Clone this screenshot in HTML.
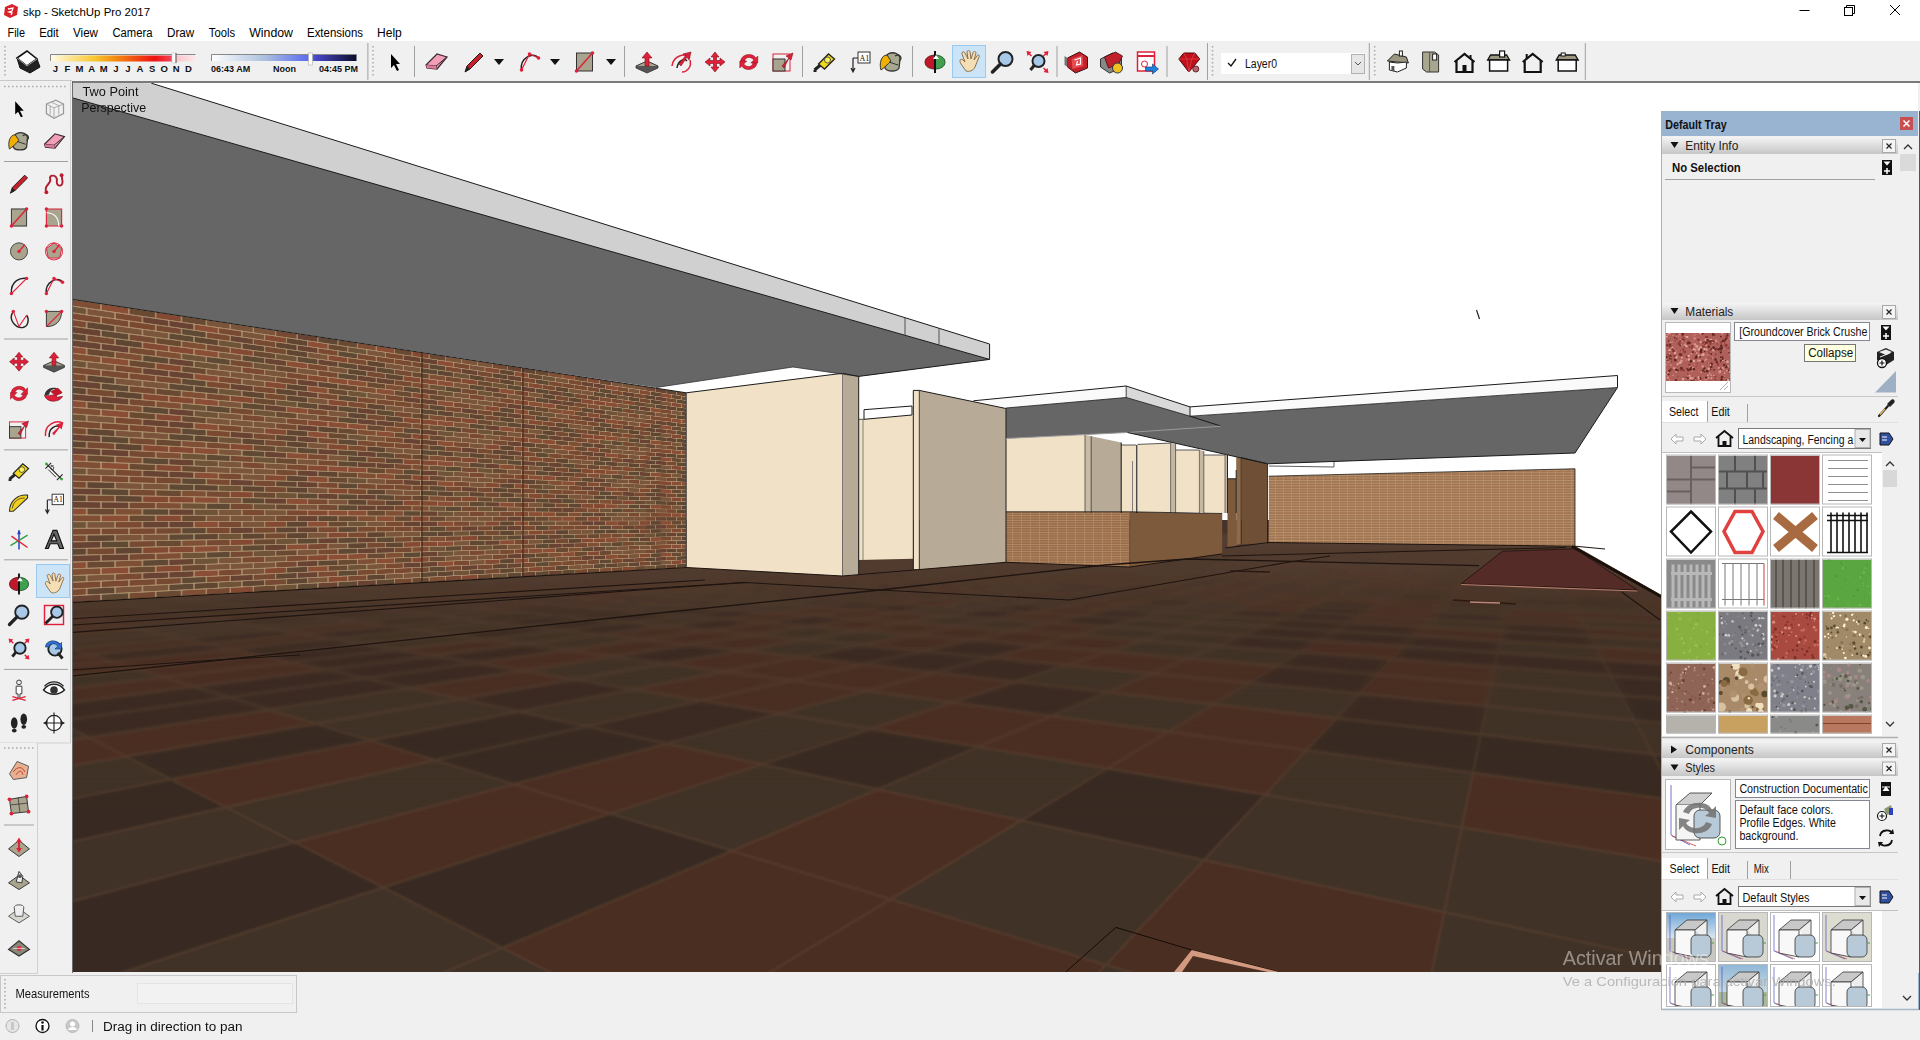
<!DOCTYPE html><html><head><meta charset="utf-8"><style>
*{margin:0;padding:0;box-sizing:border-box}
html,body{width:1920px;height:1040px;overflow:hidden;background:#f0f0f0;font-family:"Liberation Sans", sans-serif;color:#000}
.abs{position:absolute}
.t{position:absolute;white-space:nowrap;font-size:12px;line-height:1}
</style></head><body><svg class="abs" style="left:0;top:0" width="1920" height="1040"><defs><clipPath id="fc"><polygon points="72,520 1268,520 1575,546 1920,742 1920,975 72,975"/></clipPath><clipPath id="vp"><rect x="73" y="83" width="1845" height="889"/></clipPath></defs><g clip-path="url(#vp)"><rect x="72" y="82" width="1848" height="892" fill="#ffffff"/><defs><g id="floorg"><rect x="0" y="500" width="1920" height="500" fill="#45332a"/><path fill="#413127" d="M211 1310 669 1033 502 948 85 1124ZM85 1124 502 948 383 887 7 1010ZM-45 933 295 842 226 807 -83 877ZM-112 834 171 779 126 757 -135 801ZM-153 775 89 738 57 721 -167 753ZM1348 1379 1414 1059 1106 965 922 1162ZM295 842 514 784 435 760 226 807ZM7 696 163 677 136 669 -14 685ZM1892 1205 1775 984 1444 912 1414 1059ZM1106 965 1204 860 1021 820 891 899ZM732 851 878 789 762 764 610 814ZM371 741 519 712 460 699 316 724ZM316 724 460 699 410 688 269 710ZM1775 984 1714 870 1462 828 1444 912ZM1444 912 1462 828 1265 795 1204 860ZM1021 820 1107 768 978 747 878 789ZM762 764 871 729 779 714 667 744ZM587 726 701 701 633 689 519 712ZM2051 926 1935 835 1678 801 1714 870ZM1462 828 1473 773 1306 750 1265 795ZM871 729 952 702 866 691 779 714ZM633 689 725 672 666 664 574 679ZM574 679 666 664 613 657 522 671ZM2268 881 2118 807 1861 778 1935 835ZM1168 732 1214 704 1108 692 1052 716ZM1861 778 1810 738 1635 721 1653 754ZM1653 754 1635 721 1487 706 1481 735ZM1337 718 1359 694 1249 683 1214 704ZM1108 692 1152 674 1066 665 1016 682ZM1635 721 1621 695 1491 684 1487 706ZM1621 695 1611 676 1495 667 1491 684ZM1277 666 1300 652 1217 646 1188 658ZM1188 658 1217 646 1143 640 1108 652ZM2005 687 1954 669 1820 660 1853 677ZM1603 660 1596 647 1500 641 1498 653ZM1702 653 1687 641 1590 636 1596 647ZM1913 654 1879 642 1771 636 1794 647Z"/><path fill="#382a20" d="M7 1010 383 887 295 842 -45 933ZM-83 877 226 807 171 779 -112 834ZM502 948 732 851 610 814 383 887ZM171 779 371 741 316 724 126 757ZM514 784 667 744 587 726 435 760ZM435 760 587 726 519 712 371 741ZM1204 860 1265 795 1107 768 1021 820ZM878 789 978 747 871 729 762 764ZM1935 835 1861 778 1653 754 1678 801ZM1678 801 1653 754 1481 735 1473 773ZM1473 773 1481 735 1337 718 1306 750ZM2118 807 2019 758 1810 738 1861 778ZM2019 758 1948 723 1772 708 1810 738ZM1810 738 1772 708 1621 695 1635 721Z"/><path fill="#4b2d23" d="M-135 801 126 757 89 738 -153 775ZM922 1162 1106 965 891 899 669 1033ZM669 1033 891 899 732 851 502 948ZM383 887 610 814 514 784 295 842ZM226 807 435 760 371 741 171 779ZM126 757 316 724 269 710 89 738ZM1414 1059 1444 912 1204 860 1106 965ZM891 899 1021 820 878 789 732 851ZM610 814 762 764 667 744 514 784ZM2258 1088 2051 926 1714 870 1775 984ZM1714 870 1678 801 1473 773 1462 828ZM1265 795 1306 750 1168 732 1107 768ZM1107 768 1168 732 1052 716 978 747ZM978 747 1052 716 952 702 871 729ZM1306 750 1337 718 1214 704 1168 732ZM2156 741 2070 710 1895 697 1948 723Z"/><path fill="#3a2b21" d="M89 738 269 710 229 697 57 721ZM57 721 229 697 194 687 30 708ZM-48 668 90 655 70 649 -62 661ZM269 710 410 688 365 678 229 697ZM229 697 365 678 326 670 194 687ZM667 744 779 714 701 701 587 726ZM519 712 633 689 574 679 460 699ZM410 688 522 671 475 663 365 678ZM365 678 475 663 434 656 326 670ZM326 670 434 656 396 650 291 662ZM291 662 396 650 362 644 259 655ZM475 663 566 650 524 644 434 656ZM1052 716 1108 692 1016 682 952 702ZM666 664 742 651 690 645 613 657ZM1481 735 1487 706 1359 694 1337 718ZM1016 682 1066 665 990 658 935 673ZM935 673 990 658 922 651 863 664ZM863 664 922 651 861 645 799 657ZM1359 694 1377 675 1277 666 1249 683ZM990 658 1036 646 972 640 922 651ZM1948 723 1895 697 1743 686 1772 708ZM1772 708 1743 686 1611 676 1621 695ZM1377 675 1392 659 1300 652 1277 666ZM2070 710 2005 687 1853 677 1895 697ZM1743 686 1720 668 1603 660 1611 676ZM1611 676 1603 660 1498 653 1495 667ZM1495 667 1498 653 1404 646 1392 659ZM1853 677 1820 660 1702 653 1720 668ZM1498 653 1500 641 1414 636 1404 646Z"/><path fill="#492d23" d="M30 708 194 687 163 677 7 696ZM-14 685 136 669 112 661 -32 676ZM-32 676 112 661 90 655 -48 668ZM194 687 326 670 291 662 163 677ZM163 677 291 662 259 655 136 669ZM136 669 259 655 231 649 112 661ZM460 699 574 679 522 671 410 688ZM779 714 866 691 791 681 701 701ZM701 701 791 681 725 672 633 689ZM522 671 613 657 566 650 475 663ZM952 702 1016 682 935 673 866 691ZM866 691 935 673 863 664 791 681ZM791 681 863 664 799 657 725 672ZM725 672 799 657 742 651 666 664ZM1214 704 1249 683 1152 674 1108 692ZM1487 706 1491 684 1377 675 1359 694ZM1249 683 1277 666 1188 658 1152 674ZM1152 674 1188 658 1108 652 1066 665ZM1066 665 1108 652 1036 646 990 658ZM1491 684 1495 667 1392 659 1377 675ZM1895 697 1853 677 1720 668 1743 686ZM1392 659 1404 646 1319 641 1300 652ZM1720 668 1702 653 1596 647 1603 660ZM2105 678 2046 661 1913 654 1954 669ZM1954 669 1913 654 1794 647 1820 660ZM1820 660 1794 647 1687 641 1702 653ZM2046 661 1998 648 1879 642 1913 654Z"/><path fill="#3b2c22" d="M112 661 231 649 205 644 90 655ZM-18 622 76 616 62 613 -29 619ZM259 655 362 644 331 639 231 649ZM205 644 303 634 277 630 181 639ZM106 622 192 616 175 613 90 619ZM76 616 158 610 143 607 62 613ZM331 639 417 630 388 626 303 634ZM253 626 335 619 311 616 231 622ZM231 622 311 616 289 613 211 619ZM192 616 269 610 250 607 175 613ZM158 610 232 605 215 603 143 607ZM485 639 561 630 525 626 450 634ZM388 626 461 619 433 616 360 622ZM335 619 406 613 382 610 311 616ZM311 616 382 610 359 607 289 613ZM289 613 359 607 337 605 269 610ZM600 635 666 626 627 622 561 630ZM561 630 627 622 590 619 525 626ZM525 626 590 619 557 616 492 622ZM492 622 557 616 526 613 461 619ZM406 613 470 607 445 605 382 610ZM708 630 764 622 722 619 666 626ZM627 622 684 616 648 612 590 619ZM590 619 648 612 614 610 557 616ZM557 616 614 610 583 607 526 613ZM526 613 583 607 554 604 497 610ZM810 626 857 619 813 616 764 622ZM722 619 772 612 734 610 684 616ZM684 616 734 610 699 607 648 612ZM1300 652 1319 641 1242 635 1217 646ZM1404 646 1414 636 1335 631 1319 641ZM1319 641 1335 631 1263 627 1242 635ZM1108 626 1137 619 1081 615 1050 622ZM996 619 1029 612 981 609 946 615ZM899 612 936 607 895 604 856 609ZM856 609 895 604 855 602 816 607ZM1596 647 1590 636 1502 631 1500 641ZM1414 636 1422 627 1349 623 1335 631ZM1335 631 1349 623 1281 619 1263 627ZM1137 619 1162 612 1108 609 1081 615ZM1029 612 1059 607 1012 604 981 609ZM1590 636 1585 627 1504 623 1502 631ZM1349 623 1361 615 1297 612 1281 619ZM1281 619 1297 612 1238 609 1219 615ZM1771 636 1752 627 1663 623 1674 631ZM1504 623 1505 615 1436 612 1429 619ZM1361 615 1371 609 1311 606 1297 612ZM1184 606 1203 601 1154 599 1133 604ZM1752 627 1736 619 1653 615 1663 623ZM1371 609 1380 604 1323 601 1311 606ZM2031 632 1993 623 1895 619 1924 627ZM1924 627 1895 619 1805 615 1826 623ZM1507 609 1508 603 1446 601 1441 606ZM1805 615 1787 609 1710 606 1722 612ZM1645 609 1638 603 1571 601 1574 606ZM1574 606 1571 601 1509 598 1508 603ZM1446 601 1451 596 1396 594 1388 599ZM1787 609 1771 603 1699 601 1710 606ZM1638 603 1632 598 1569 596 1571 601Z"/><path fill="#472e24" d="M90 655 205 644 181 639 70 649ZM36 638 140 630 122 626 21 634ZM21 634 122 626 106 622 7 630ZM7 630 106 622 90 619 -6 626ZM-6 626 90 619 76 616 -18 622ZM231 649 331 639 303 634 205 644ZM122 626 211 619 192 616 106 622ZM90 619 175 613 158 610 76 616ZM62 613 143 607 128 605 50 610ZM434 656 524 644 485 639 396 650ZM303 634 388 626 360 622 277 630ZM211 619 289 613 269 610 192 616ZM613 657 690 645 643 639 566 650ZM269 610 337 605 317 602 250 607ZM742 651 805 640 754 635 690 645ZM690 645 754 635 708 630 643 639ZM643 639 708 630 666 626 600 635ZM382 610 445 605 421 602 359 607ZM922 651 972 640 913 635 861 645ZM754 635 810 626 764 622 708 630ZM497 610 554 604 527 602 470 607ZM1108 652 1143 640 1075 635 1036 646ZM1036 646 1075 635 1014 631 972 640ZM972 640 1014 631 957 626 913 635ZM913 635 957 626 905 622 859 630ZM859 630 905 622 857 619 810 626ZM764 622 813 616 772 612 722 619ZM583 607 634 602 605 600 554 604ZM1075 635 1108 626 1050 622 1014 631ZM905 622 946 615 899 612 857 619ZM857 619 899 612 856 609 813 616ZM813 616 856 609 816 607 772 612ZM1050 622 1081 615 1029 612 996 619ZM1500 641 1502 631 1422 627 1414 636ZM1081 615 1108 609 1059 607 1029 612ZM936 607 969 602 929 599 895 604ZM895 604 929 599 891 597 855 602ZM1687 641 1674 631 1585 627 1590 636ZM1422 627 1429 619 1361 615 1349 623ZM1108 609 1133 604 1085 601 1059 607ZM1998 648 1958 636 1850 631 1879 642ZM1585 627 1581 619 1505 615 1504 623ZM1429 619 1436 612 1371 609 1361 615ZM1297 612 1311 606 1255 604 1238 609ZM1133 604 1154 599 1108 597 1085 601ZM1958 636 1924 627 1826 623 1850 631ZM1850 631 1826 623 1736 619 1752 627ZM1663 623 1653 615 1577 612 1581 619ZM1581 619 1577 612 1507 609 1505 615ZM1436 612 1441 606 1380 604 1371 609ZM1311 606 1323 601 1270 599 1255 604ZM1255 604 1270 599 1220 597 1203 601ZM1826 623 1805 615 1722 612 1736 619ZM1736 619 1722 612 1645 609 1653 615ZM1441 606 1446 601 1388 599 1380 604ZM1380 604 1388 599 1334 597 1323 601ZM1323 601 1334 597 1284 594 1270 599ZM1722 612 1710 606 1638 603 1645 609ZM1508 603 1509 598 1451 596 1446 601ZM1870 612 1848 606 1771 603 1787 609ZM1710 606 1699 601 1632 598 1638 603ZM2021 612 1990 606 1906 603 1931 609ZM1771 603 1757 598 1689 596 1699 601ZM1632 598 1626 594 1566 592 1569 596ZM1906 603 1884 598 1812 596 1829 600ZM1757 598 1744 594 1681 592 1689 596Z"/><path fill="#413026" d="M70 649 181 639 160 634 52 643ZM52 643 160 634 140 630 36 638ZM181 639 277 630 253 626 160 634ZM160 634 253 626 231 622 140 630ZM140 630 231 622 211 619 122 626ZM396 650 485 639 450 634 362 644ZM362 644 450 634 417 630 331 639ZM277 630 360 622 335 619 253 626ZM175 613 250 607 232 605 158 610ZM566 650 643 639 600 635 524 644ZM524 644 600 635 561 630 485 639ZM450 634 525 626 492 622 417 630ZM417 630 492 622 461 619 388 626ZM360 622 433 616 406 613 335 619ZM799 657 861 645 805 640 742 651ZM461 619 526 613 497 610 433 616ZM433 616 497 610 470 607 406 613ZM861 645 913 635 859 630 805 640ZM805 640 859 630 810 626 754 635ZM666 626 722 619 684 616 627 622ZM470 607 527 602 501 600 445 605ZM648 612 699 607 665 604 614 610ZM614 610 665 604 634 602 583 607ZM1217 646 1242 635 1172 631 1143 640ZM1143 640 1172 631 1108 626 1075 635ZM1014 631 1050 622 996 619 957 626ZM957 626 996 619 946 615 905 622ZM772 612 816 607 779 604 734 610ZM734 610 779 604 744 602 699 607ZM699 607 744 602 711 600 665 604ZM1242 635 1263 627 1197 623 1172 631ZM1172 631 1197 623 1137 619 1108 626ZM946 615 981 609 936 607 899 612ZM816 607 855 602 819 600 779 604ZM1263 627 1281 619 1219 615 1197 623ZM1197 623 1219 615 1162 612 1137 619ZM981 609 1012 604 969 602 936 607ZM1794 647 1771 636 1674 631 1687 641ZM1502 631 1504 623 1429 619 1422 627ZM1219 615 1238 609 1184 606 1162 612ZM1162 612 1184 606 1133 604 1108 609ZM1059 607 1085 601 1040 599 1012 604ZM1012 604 1040 599 999 597 969 602ZM1879 642 1850 631 1752 627 1771 636ZM1674 631 1663 623 1581 619 1585 627ZM1238 609 1255 604 1203 601 1184 606ZM2076 642 2031 632 1924 627 1958 636ZM1505 615 1507 609 1441 606 1436 612ZM1203 601 1220 597 1174 595 1154 599ZM1653 615 1645 609 1574 606 1577 612ZM1577 612 1574 606 1508 603 1507 609ZM1993 623 1960 615 1870 612 1895 619ZM1895 619 1870 612 1787 609 1805 615ZM1960 615 1931 609 1848 606 1870 612ZM1571 601 1569 596 1510 594 1509 598ZM1931 609 1906 603 1829 600 1848 606ZM1848 606 1829 600 1757 598 1771 603ZM1699 601 1689 596 1626 594 1632 598ZM1990 606 1962 600 1884 598 1906 603ZM1829 600 1812 596 1744 594 1757 598ZM1962 600 1937 596 1865 593 1884 598ZM1884 598 1865 593 1797 591 1812 596ZM1937 596 1915 591 1847 589 1865 593Z"/><path fill="#403026" d="M50 610 128 605 115 603 38 607ZM38 607 115 603 102 601 27 605ZM143 607 215 603 199 600 128 605ZM128 605 199 600 184 598 115 603ZM39 590 100 587 90 586 31 589ZM31 589 90 586 81 584 22 587ZM14 586 72 583 64 582 7 585ZM199 600 263 596 247 595 184 598ZM184 598 247 595 232 593 170 597ZM121 590 179 587 168 585 110 588ZM72 583 126 581 116 580 64 582ZM55 581 107 579 99 578 48 580ZM40 579 90 577 83 576 33 578ZM33 578 83 576 75 575 26 577ZM359 607 421 602 399 600 337 605ZM337 605 399 600 378 598 317 602ZM317 602 378 598 358 596 298 600ZM168 585 220 583 208 582 156 584ZM156 584 208 582 197 580 146 583ZM135 582 186 579 175 578 126 581ZM107 579 156 576 146 576 99 578ZM83 576 129 574 121 573 75 575ZM54 573 98 571 91 570 47 572ZM378 598 432 594 412 592 358 596ZM358 596 412 592 393 591 339 594ZM339 594 393 591 375 589 322 593ZM305 591 357 588 341 586 289 589ZM289 589 341 586 325 585 274 588ZM197 580 244 578 233 577 186 579ZM138 575 182 573 173 572 129 574ZM91 570 132 569 124 568 84 569ZM84 569 124 568 117 567 77 569ZM77 569 117 567 110 567 70 568ZM47 566 84 565 79 564 41 565ZM41 565 79 564 73 564 36 565ZM554 604 605 600 578 598 527 602ZM412 592 462 589 442 588 393 591ZM357 588 405 585 388 584 341 586ZM341 586 388 584 372 582 325 585ZM282 581 328 579 314 578 269 580ZM256 579 301 577 289 576 244 578ZM182 573 223 571 214 570 173 572ZM173 572 214 570 204 570 164 571ZM147 570 187 568 178 568 139 569ZM132 569 170 567 163 567 124 568ZM117 567 155 566 148 565 110 567ZM84 565 120 563 114 563 79 564ZM79 564 114 563 108 562 73 564ZM527 594 573 590 550 589 504 592ZM462 589 507 586 487 585 442 588ZM372 582 416 580 400 579 357 581ZM328 579 370 577 356 576 314 578ZM314 578 356 576 343 575 301 577ZM289 576 330 574 317 573 277 575ZM277 575 317 573 306 572 265 574ZM204 570 242 568 233 567 195 569ZM187 568 224 567 215 566 178 568ZM178 568 215 566 207 566 170 567ZM163 567 199 565 191 565 155 566ZM155 566 191 565 183 564 148 565ZM141 565 176 564 169 563 134 564ZM120 563 155 562 148 562 114 563ZM779 604 819 600 784 597 744 602ZM744 602 784 597 752 595 711 600ZM680 598 721 594 693 592 651 596ZM651 596 693 592 665 590 624 594ZM573 590 615 587 592 586 550 589ZM528 587 569 584 548 583 507 586ZM468 583 509 581 490 580 450 582ZM450 582 490 580 473 578 432 581ZM400 579 440 576 424 576 385 578ZM330 574 368 572 356 571 317 573ZM306 572 343 571 332 570 294 572ZM294 572 332 570 320 569 283 571ZM233 567 269 566 259 565 224 567ZM224 567 259 565 250 565 215 566ZM199 565 233 564 225 563 191 565ZM155 562 187 561 180 561 148 562ZM752 595 789 592 759 590 721 594ZM721 594 759 590 730 588 693 592ZM548 583 587 580 566 579 528 582ZM473 578 511 576 494 575 456 577ZM440 576 477 574 462 573 424 576ZM410 575 447 573 432 572 395 574ZM395 574 432 572 418 571 382 573ZM343 571 379 569 367 568 332 570ZM288 567 323 566 312 565 278 567ZM278 567 312 565 303 565 269 566ZM269 566 303 565 293 564 259 565ZM187 561 218 560 211 560 180 561ZM174 560 204 559 197 559 167 560ZM969 602 999 597 959 595 929 599ZM821 593 854 590 823 588 789 592ZM703 587 738 584 713 583 678 585ZM630 583 665 580 643 579 608 582ZM494 575 529 573 512 572 477 574ZM477 574 512 572 496 572 462 573ZM405 570 439 569 425 568 392 570ZM367 568 400 567 389 566 355 568ZM284 564 315 562 306 562 275 563ZM275 563 306 562 297 561 266 563ZM257 562 288 561 280 561 249 562ZM233 561 263 560 256 559 226 560ZM204 559 233 558 226 558 197 559ZM999 597 1025 593 987 591 959 595ZM854 590 884 586 853 585 823 588ZM688 581 721 579 698 578 665 580ZM665 580 698 578 676 577 643 579ZM643 579 676 577 655 576 622 578ZM622 578 655 576 634 575 602 577ZM582 576 615 574 597 573 564 575ZM564 575 597 573 579 572 546 574ZM529 573 561 571 545 571 512 572ZM512 572 545 571 529 570 496 572ZM496 572 529 570 514 569 481 571ZM466 570 499 568 484 568 452 569ZM425 568 457 566 444 566 413 567ZM389 566 420 565 408 564 377 566ZM288 561 318 560 309 560 280 561ZM280 561 309 560 300 559 271 560ZM263 560 292 559 284 558 256 559ZM241 559 269 558 261 557 233 558ZM1108 597 1130 593 1088 591 1065 595ZM1025 593 1049 589 1012 588 987 591ZM545 571 575 569 559 568 529 570ZM514 569 544 568 529 567 499 568ZM484 568 515 566 501 566 471 567ZM365 562 394 561 384 561 355 562ZM355 562 384 561 374 560 345 561ZM336 561 364 560 355 559 327 560ZM327 560 355 559 346 559 318 560ZM284 558 311 557 303 557 276 558ZM1270 599 1284 594 1236 593 1220 597ZM1049 589 1071 586 1035 584 1012 588ZM800 579 827 576 802 575 775 577ZM627 571 656 569 638 569 609 570ZM515 566 543 565 529 564 501 566ZM474 564 503 563 490 563 462 564ZM462 564 490 563 478 562 450 563ZM450 563 478 562 466 562 438 563ZM438 563 466 562 454 561 426 562ZM415 562 443 561 432 560 404 561ZM404 561 432 560 421 560 394 561ZM374 560 401 559 391 559 364 560ZM311 557 338 557 329 556 303 557ZM303 557 329 556 322 556 296 557ZM1388 599 1396 594 1344 592 1334 597ZM1191 591 1207 587 1166 586 1149 589ZM968 582 991 579 960 578 937 581ZM937 581 960 578 931 577 908 579ZM908 579 931 577 904 576 879 578ZM779 574 805 572 782 571 756 573ZM734 572 761 571 740 570 714 572ZM674 570 701 568 683 568 656 569ZM656 569 683 568 665 567 638 569ZM621 568 648 566 631 566 604 567ZM543 565 570 563 556 563 529 564ZM529 564 556 563 543 562 516 564ZM516 564 543 562 530 562 503 563ZM478 562 504 561 492 561 466 562ZM421 560 447 559 437 558 411 560ZM401 559 427 558 417 558 391 559ZM391 559 417 558 407 557 382 558ZM363 558 389 557 380 556 355 557ZM1166 586 1182 583 1144 581 1127 584ZM1127 584 1144 581 1109 580 1090 583ZM1090 583 1109 580 1075 579 1055 582ZM931 577 954 575 926 574 904 576ZM852 574 876 572 852 571 828 573ZM828 573 852 571 829 570 805 572ZM805 572 829 570 807 570 782 571ZM782 571 807 570 786 569 761 571ZM701 568 726 567 708 566 683 568ZM615 565 641 564 625 563 600 565ZM517 561 542 560 530 560 504 561ZM492 561 518 559 506 559 481 560ZM481 560 506 559 494 559 469 560ZM458 559 483 558 472 558 447 559ZM407 557 432 556 422 556 398 557ZM398 557 422 556 413 556 389 557ZM389 557 413 556 404 555 380 556ZM380 556 404 555 395 555 371 556ZM1569 596 1566 592 1511 590 1510 594ZM1353 589 1361 585 1317 584 1307 587ZM1042 578 1061 575 1031 574 1011 577ZM982 576 1002 573 974 573 954 575ZM926 574 948 572 922 571 901 573ZM876 572 898 570 874 569 852 571ZM786 569 809 567 789 566 765 568ZM726 567 750 565 732 565 708 566ZM690 565 714 564 697 563 673 565ZM673 565 697 563 681 563 657 564ZM582 562 606 561 592 560 568 561ZM483 558 507 557 496 557 472 558ZM472 558 496 557 486 557 462 558ZM432 556 455 556 446 555 422 556ZM1566 592 1564 588 1511 586 1511 590ZM1511 590 1511 586 1461 585 1458 588ZM1317 584 1326 581 1285 580 1274 582ZM1160 579 1174 576 1141 575 1125 577ZM1061 575 1078 573 1048 572 1031 574ZM974 573 993 571 967 570 948 572ZM948 572 967 570 942 569 922 571ZM922 571 942 569 918 568 898 570ZM732 565 754 563 737 563 714 564ZM554 559 577 558 565 557 542 558ZM542 558 565 557 553 557 530 558ZM530 558 553 557 541 557 518 558ZM1812 596 1797 591 1733 590 1744 594ZM1681 592 1673 588 1616 586 1621 590ZM1621 590 1616 586 1563 585 1564 588ZM1564 588 1563 585 1512 583 1511 586ZM1326 581 1334 578 1295 577 1285 580ZM1210 577 1222 575 1188 574 1174 576ZM1174 576 1188 574 1155 573 1141 575ZM1109 574 1124 572 1094 571 1078 573ZM1078 573 1094 571 1065 570 1048 572ZM1020 571 1038 569 1011 569 993 571ZM918 568 937 567 915 566 895 568ZM895 568 915 566 893 565 873 567ZM811 565 831 564 812 563 791 564ZM773 564 794 562 776 562 754 563ZM720 562 742 561 725 560 704 562ZM704 562 725 560 710 560 688 561ZM643 560 665 559 651 558 629 559ZM602 559 624 558 611 557 589 558ZM577 558 599 557 586 556 565 557ZM565 557 586 556 575 556 553 557ZM530 556 552 555 541 555 519 556ZM1733 590 1723 586 1666 584 1673 588ZM1673 588 1666 584 1612 583 1616 586ZM1563 585 1561 582 1513 580 1512 583ZM1464 582 1467 579 1423 578 1419 581ZM1295 577 1304 575 1268 574 1258 576ZM1258 576 1268 574 1233 573 1222 575ZM1188 574 1200 572 1168 571 1155 573ZM1155 573 1168 571 1138 570 1124 572ZM1124 572 1138 570 1109 569 1094 571ZM1065 570 1081 568 1054 568 1038 569ZM937 567 955 565 933 564 915 566ZM915 566 933 564 911 564 893 565ZM871 565 890 563 870 563 851 564ZM831 564 851 562 832 562 812 563ZM794 562 814 561 796 561 776 562ZM725 560 746 559 730 559 710 560ZM710 560 730 559 715 558 694 560ZM599 557 620 556 607 556 586 556ZM586 556 607 556 595 555 575 556ZM1847 589 1831 586 1771 584 1783 588ZM1723 586 1714 583 1659 581 1666 584ZM1561 582 1559 579 1513 578 1513 580ZM1200 572 1212 570 1181 569 1168 571ZM1081 568 1095 567 1069 566 1054 568ZM1028 567 1043 565 1019 565 1003 566ZM1003 566 1019 565 995 564 979 566ZM979 566 995 564 972 564 955 565ZM955 565 972 564 950 563 933 564ZM933 564 950 563 929 562 911 564ZM911 564 929 562 908 562 890 563ZM851 562 869 561 851 560 832 562ZM832 562 851 560 832 560 814 561ZM715 558 735 557 720 557 700 558ZM686 558 706 557 692 556 672 557ZM658 557 678 556 665 556 645 557ZM632 556 652 555 640 555 620 556ZM1895 587 1877 584 1817 582 1831 586ZM1771 584 1759 581 1705 580 1714 583ZM1714 583 1705 580 1654 578 1659 581ZM1608 580 1605 577 1558 576 1559 579ZM1559 579 1558 576 1514 575 1513 578ZM1469 576 1471 574 1431 573 1427 575ZM1427 575 1431 573 1392 572 1387 574ZM1312 572 1320 570 1286 569 1277 571ZM1151 568 1163 566 1136 566 1123 567ZM1069 566 1083 564 1058 564 1043 565ZM1019 565 1034 563 1011 563 995 564ZM929 562 946 561 925 561 908 562ZM815 560 833 558 816 558 798 559ZM750 558 768 557 753 556 735 557ZM720 557 739 556 724 556 706 557ZM706 557 724 556 711 555 692 556ZM678 556 697 555 684 555 665 556ZM627 555 647 554 635 554 616 554ZM1877 584 1861 581 1804 579 1817 582ZM1605 577 1601 575 1557 574 1558 576ZM1558 576 1557 574 1514 573 1514 575ZM1514 575 1514 573 1473 572 1471 574ZM1392 572 1397 570 1361 569 1355 571ZM1286 569 1294 568 1263 567 1254 569ZM1222 568 1232 566 1203 565 1192 567ZM1163 566 1175 565 1148 564 1136 566ZM1011 563 1025 561 1003 561 988 562ZM784 557 801 556 786 556 768 557ZM768 557 786 556 771 556 753 556ZM697 555 715 554 702 554 684 555ZM671 554 690 554 677 553 659 554ZM1861 581 1846 578 1792 577 1804 579ZM1749 578 1740 576 1690 574 1697 577ZM1697 577 1690 574 1643 573 1648 576ZM1648 576 1643 573 1599 572 1601 575ZM1601 575 1599 572 1556 571 1557 574ZM1473 572 1475 570 1438 569 1435 571ZM1435 571 1438 569 1402 568 1397 570ZM1294 568 1302 566 1271 565 1263 567ZM1121 564 1133 562 1109 562 1096 563ZM1072 562 1085 561 1062 561 1048 562ZM982 560 997 559 976 559 961 560ZM941 559 957 558 938 558 922 559ZM885 558 901 557 884 557 867 558ZM850 557 867 556 850 556 833 557ZM801 556 818 555 803 555 786 556ZM715 554 733 553 720 553 702 554ZM1846 578 1833 575 1781 574 1792 577ZM1690 574 1684 572 1639 571 1643 573ZM1643 573 1639 571 1596 570 1599 572ZM1599 572 1596 570 1555 569 1556 571ZM1159 563 1170 561 1145 561 1133 562ZM1109 562 1121 560 1097 560 1085 561ZM919 557 934 556 916 556 901 557ZM901 557 916 556 899 556 884 557ZM867 556 882 555 866 555 850 556ZM850 556 866 555 850 555 834 556ZM746 554 763 553 749 553 733 553ZM1833 575 1820 573 1770 572 1781 574ZM1684 572 1678 570 1635 569 1639 571ZM1555 569 1554 567 1515 567 1515 569ZM1515 569 1515 567 1479 566 1477 568ZM1340 565 1346 563 1316 563 1309 564ZM1279 564 1287 562 1259 562 1250 563ZM1196 562 1205 561 1180 560 1170 561ZM805 554 820 553 806 553 790 553ZM776 553 792 552 779 552 763 553ZM1635 569 1631 567 1591 566 1593 568ZM1554 567 1553 566 1516 565 1515 567ZM1444 565 1446 564 1414 563 1410 565ZM1259 562 1266 560 1240 560 1232 561ZM1205 561 1214 559 1190 559 1180 560ZM1109 559 1120 558 1098 557 1087 558ZM1044 557 1056 556 1036 556 1024 557ZM914 555 928 554 911 554 897 554ZM897 554 911 554 895 553 881 554ZM835 553 850 552 835 552 820 553ZM1716 569 1709 567 1667 566 1672 568ZM1672 568 1667 566 1627 565 1631 567ZM1631 567 1627 565 1589 565 1591 566ZM1591 566 1589 565 1552 564 1553 566ZM1516 565 1516 563 1482 563 1480 564ZM1480 564 1482 563 1449 562 1446 564ZM1322 561 1328 560 1300 560 1294 561ZM1240 560 1248 559 1223 558 1214 559ZM1214 559 1223 558 1199 558 1190 559ZM1166 558 1175 557 1152 557 1142 558ZM1120 558 1130 556 1109 556 1098 557ZM1056 556 1068 555 1048 555 1036 556ZM1017 556 1029 555 1010 554 998 555ZM980 555 992 554 975 554 962 555ZM962 555 975 554 958 553 945 554ZM880 553 894 552 878 552 864 553ZM1482 563 1483 561 1451 561 1449 562ZM1417 562 1420 560 1390 560 1386 561ZM1328 560 1334 559 1307 558 1300 560ZM1274 559 1281 558 1255 557 1248 559ZM1199 558 1207 557 1184 556 1175 557ZM1175 557 1184 556 1162 556 1152 557ZM1130 556 1140 555 1119 555 1109 556ZM1088 556 1099 555 1079 554 1068 555ZM992 554 1005 553 987 553 975 554ZM958 553 970 552 954 552 941 553ZM941 553 954 552 938 552 925 553ZM925 553 938 552 922 552 909 552ZM909 552 922 552 907 551 894 552ZM1788 567 1779 565 1737 564 1744 566ZM1744 566 1737 564 1697 563 1703 565ZM1624 564 1621 562 1585 562 1587 563ZM1551 562 1550 561 1517 560 1516 562ZM1516 562 1517 560 1485 560 1483 561ZM1390 560 1394 558 1366 558 1362 559ZM1255 557 1263 556 1239 556 1231 557ZM1119 555 1129 554 1109 554 1099 555ZM1099 555 1109 554 1089 553 1079 554ZM1079 554 1089 553 1070 553 1059 554ZM954 552 966 551 950 551 938 552ZM1517 560 1517 559 1486 559 1485 560ZM1453 559 1455 558 1426 558 1423 559ZM1394 558 1398 557 1371 557 1366 558ZM1239 556 1246 555 1223 555 1215 556ZM1215 556 1223 555 1201 554 1193 555ZM1171 555 1179 554 1159 554 1150 554ZM1109 554 1118 553 1099 553 1089 553ZM1654 561 1650 560 1615 559 1618 561ZM1618 561 1615 559 1581 559 1583 560ZM1549 560 1549 558 1517 558 1517 559ZM1486 559 1487 557 1457 557 1455 558ZM1138 553 1147 552 1128 552 1118 553ZM1118 553 1128 552 1109 552 1099 553ZM1062 552 1072 551 1055 551 1045 552ZM1581 559 1580 558 1548 557 1549 558ZM1457 557 1459 556 1432 555 1429 557ZM1401 556 1405 555 1379 555 1375 556ZM1375 556 1379 555 1353 554 1349 555ZM1349 555 1353 554 1329 554 1324 555ZM1167 553 1175 552 1156 552 1147 552ZM1147 552 1156 552 1137 551 1128 552ZM1072 551 1082 550 1065 550 1055 551ZM1055 551 1065 550 1048 550 1038 551ZM1755 560 1748 559 1712 558 1717 560ZM1646 559 1643 557 1610 557 1612 558ZM1612 558 1610 557 1578 556 1580 558ZM1580 558 1578 556 1547 556 1548 557ZM1548 557 1547 556 1518 556 1517 557ZM1517 557 1518 556 1489 555 1488 556ZM1405 555 1408 554 1382 554 1379 555ZM1329 554 1334 553 1310 553 1305 554ZM1305 554 1310 553 1288 552 1282 553ZM1216 552 1223 552 1203 551 1195 552ZM1195 552 1203 551 1183 551 1175 552ZM1175 552 1183 551 1164 551 1156 552ZM1518 556 1518 555 1490 554 1489 555ZM1489 555 1490 554 1463 554 1461 555ZM1461 555 1463 554 1436 553 1434 554ZM1434 554 1436 553 1411 553 1408 554ZM1266 552 1272 551 1251 551 1244 552ZM1244 552 1251 551 1230 551 1223 552ZM1203 551 1210 550 1191 550 1183 551ZM1164 551 1172 550 1153 550 1145 550ZM1706 557 1701 556 1668 555 1672 557ZM1639 556 1636 555 1605 555 1607 556ZM1577 555 1575 554 1546 554 1547 555ZM1547 555 1546 554 1518 554 1518 555ZM1490 554 1491 553 1464 553 1463 554ZM1463 554 1464 553 1439 553 1436 553ZM1436 553 1439 553 1414 552 1411 553ZM1411 553 1414 552 1389 552 1386 553ZM1386 553 1389 552 1366 552 1362 552ZM1338 552 1343 551 1320 551 1315 552ZM1272 551 1277 550 1257 550 1251 551ZM1230 551 1237 550 1217 550 1210 550ZM1191 550 1198 549 1179 549 1172 550ZM1735 556 1729 555 1696 555 1701 556ZM1605 555 1603 554 1574 553 1575 554ZM1575 554 1574 553 1546 553 1546 554ZM1518 554 1518 553 1492 552 1491 553ZM1491 553 1492 552 1466 552 1464 553ZM1257 550 1262 549 1243 549 1237 550ZM1217 550 1223 549 1205 549 1198 549ZM1729 555 1724 554 1692 554 1696 555ZM1696 555 1692 554 1661 553 1664 554ZM1603 554 1601 553 1573 552 1574 553ZM1492 552 1493 551 1467 551 1466 552ZM1347 550 1351 550 1329 549 1325 550ZM1283 550 1288 549 1268 549 1262 549ZM1661 553 1657 552 1628 552 1630 553ZM1630 553 1628 552 1599 552 1601 553ZM1545 552 1545 551 1519 551 1519 552ZM1493 551 1493 551 1469 550 1467 551ZM1373 550 1376 549 1355 549 1351 550ZM1687 553 1683 552 1654 551 1657 552ZM1628 552 1625 551 1597 551 1599 552ZM1599 552 1597 551 1571 551 1572 551ZM1545 551 1544 550 1519 550 1519 551ZM1493 551 1494 550 1470 549 1469 550ZM1421 550 1424 549 1401 549 1398 549ZM1355 549 1358 548 1338 548 1334 549ZM1713 552 1709 551 1679 551 1683 552ZM1683 552 1679 551 1651 551 1654 551ZM1625 551 1623 550 1596 550 1597 551ZM1597 551 1596 550 1569 550 1571 551ZM1544 550 1544 549 1519 549 1519 550ZM1651 551 1648 550 1621 549 1623 550ZM1623 550 1621 549 1594 549 1596 550ZM1569 550 1568 549 1544 549 1544 549ZM1495 549 1495 548 1472 548 1471 549ZM1471 549 1472 548 1450 548 1448 548ZM1704 550 1700 549 1672 549 1676 550ZM1648 550 1645 549 1618 549 1621 549ZM1621 549 1618 549 1593 548 1594 549ZM1544 549 1543 548 1519 548 1519 548ZM1472 548 1474 547 1451 547 1450 548ZM1645 549 1642 548 1616 548 1618 549ZM1618 549 1616 548 1591 548 1593 548ZM1593 548 1591 548 1567 547 1568 548ZM1519 548 1519 547 1497 547 1496 548ZM1669 548 1665 548 1639 547 1642 548ZM1616 548 1614 547 1590 547 1591 548ZM1543 547 1542 547 1520 546 1519 547ZM1590 547 1588 546 1565 546 1566 547ZM1688 547 1685 546 1659 546 1662 547ZM1662 547 1659 546 1635 546 1637 547ZM1637 547 1635 546 1611 546 1612 547ZM1612 547 1611 546 1587 546 1588 546Z"/><path fill="#3c2d23" d="M27 605 102 601 90 599 16 603ZM7 601 79 597 68 595 -2 599ZM115 603 184 598 170 597 102 601ZM102 601 170 597 157 595 90 599ZM79 597 145 593 133 591 68 595ZM68 595 133 591 121 590 58 593ZM58 593 121 590 110 588 48 592ZM48 592 110 588 100 587 39 590ZM250 607 317 602 298 600 232 605ZM232 605 298 600 280 598 215 603ZM215 603 280 598 263 596 199 600ZM170 597 232 593 218 591 157 595ZM133 591 192 588 179 587 121 590ZM100 587 156 584 146 583 90 586ZM81 584 135 582 126 581 72 583ZM48 580 99 578 90 577 40 579ZM26 577 75 575 68 574 19 576ZM298 600 358 596 339 594 280 598ZM280 598 339 594 322 593 263 596ZM263 596 322 593 305 591 247 595ZM247 595 305 591 289 589 232 593ZM204 590 259 587 246 585 192 588ZM192 588 246 585 233 584 179 587ZM126 581 175 578 165 577 116 580ZM90 577 138 575 129 574 83 576ZM75 575 121 573 113 572 68 574ZM60 573 105 572 98 571 54 573ZM47 572 91 570 84 569 41 571ZM35 570 77 569 70 568 29 570ZM445 605 501 600 477 598 421 602ZM259 587 310 584 296 583 246 585ZM233 584 282 581 269 580 220 583ZM220 583 269 580 256 579 208 582ZM208 582 256 579 244 578 197 580ZM146 576 191 574 182 573 138 575ZM129 574 173 572 164 571 121 573ZM121 573 164 571 155 571 113 572ZM105 572 147 570 139 569 98 571ZM98 571 139 569 132 569 91 570ZM70 568 110 567 103 566 64 568ZM64 568 103 566 97 566 58 567ZM58 567 97 566 91 565 52 566ZM52 566 91 565 84 565 47 566ZM527 602 578 598 552 596 501 600ZM501 600 552 596 527 594 477 598ZM432 594 482 591 462 589 412 592ZM393 591 442 588 423 586 375 589ZM325 585 372 582 357 581 310 584ZM310 584 357 581 342 580 296 583ZM296 583 342 580 328 579 282 581ZM233 577 277 575 265 574 222 576ZM191 574 233 572 223 571 182 573ZM164 571 204 570 195 569 155 571ZM139 569 178 568 170 567 132 569ZM124 568 163 567 155 566 117 567ZM103 566 141 565 134 564 97 566ZM634 602 680 598 651 596 605 600ZM552 596 598 592 573 590 527 594ZM482 591 528 587 507 586 462 589ZM442 588 487 585 468 583 423 586ZM423 586 468 583 450 582 405 585ZM388 584 432 581 416 580 372 582ZM301 577 343 575 330 574 289 576ZM265 574 306 572 294 572 254 573ZM233 572 272 570 262 569 223 571ZM214 570 252 569 242 568 204 570ZM170 567 207 566 199 565 163 567ZM134 564 169 563 162 563 127 564ZM114 563 148 562 142 561 108 562ZM108 562 142 561 135 561 102 562ZM711 600 752 595 721 594 680 598ZM432 581 473 578 456 577 416 580ZM416 580 456 577 440 576 400 579ZM370 577 410 575 395 574 356 576ZM262 569 299 568 288 567 252 569ZM242 568 278 567 269 566 233 567ZM215 566 250 565 242 564 207 566ZM207 566 242 564 233 564 199 565ZM191 565 225 563 217 563 183 564ZM183 564 217 563 209 562 176 564ZM176 564 209 562 202 562 169 563ZM162 563 194 562 187 561 155 562ZM148 562 180 561 174 560 142 561ZM855 602 891 597 855 595 819 600ZM819 600 855 595 821 593 784 597ZM784 597 821 593 789 592 752 595ZM569 584 608 582 587 580 548 583ZM509 581 547 578 528 577 490 580ZM490 580 528 577 511 576 473 578ZM424 576 462 573 447 573 410 575ZM382 573 418 571 405 570 368 572ZM356 571 392 570 379 569 343 571ZM250 565 284 564 275 563 242 564ZM242 564 275 563 266 563 233 564ZM209 562 241 561 233 561 202 562ZM202 562 233 561 226 560 194 562ZM194 562 226 560 218 560 187 561ZM180 561 211 560 204 559 174 560ZM929 599 959 595 922 593 891 597ZM891 597 922 593 887 591 855 595ZM855 595 887 591 854 590 821 593ZM789 592 823 588 793 587 759 590ZM759 590 793 587 765 585 730 588ZM653 584 688 581 665 580 630 583ZM608 582 643 579 622 578 587 580ZM432 572 466 570 452 569 418 571ZM418 571 452 569 439 569 405 570ZM323 566 355 564 345 564 312 565ZM241 561 271 560 263 560 233 561ZM226 560 256 559 248 559 218 560ZM1085 601 1108 597 1065 595 1040 599ZM887 591 917 588 884 586 854 590ZM823 588 853 585 824 584 793 587ZM765 585 797 582 770 581 738 584ZM738 584 770 581 745 580 713 583ZM602 577 634 575 615 574 582 576ZM546 574 579 572 561 571 529 573ZM452 569 484 568 471 567 439 569ZM439 569 471 567 457 566 425 568ZM400 567 432 565 420 565 389 566ZM377 566 408 564 397 564 366 565ZM355 564 386 563 375 563 345 564ZM345 564 375 563 365 562 335 563ZM335 563 365 562 355 562 325 563ZM325 563 355 562 345 561 315 562ZM315 562 345 561 336 561 306 562ZM306 562 336 561 327 560 297 561ZM256 559 284 558 276 558 248 559ZM233 558 261 557 254 557 226 558ZM1154 599 1174 595 1130 593 1108 597ZM917 588 943 585 912 583 884 586ZM853 585 882 582 853 581 824 584ZM745 580 775 577 751 576 721 579ZM698 578 728 575 706 574 676 577ZM615 574 646 572 627 571 597 573ZM597 573 627 571 609 570 579 572ZM529 570 559 568 544 568 514 569ZM471 567 501 566 487 565 457 566ZM457 566 487 565 474 564 444 566ZM444 566 474 564 462 564 432 565ZM432 565 462 564 450 563 420 565ZM420 565 450 563 438 563 408 564ZM408 564 438 563 426 562 397 564ZM397 564 426 562 415 562 386 563ZM375 563 404 561 394 561 365 562ZM345 561 374 560 364 560 336 561ZM300 559 328 558 320 558 292 559ZM292 559 320 558 311 557 284 558ZM261 557 288 556 281 556 254 557ZM1130 593 1149 589 1109 587 1088 591ZM1088 591 1109 587 1071 586 1049 589ZM1012 588 1035 584 1000 583 977 586ZM977 586 1000 583 968 582 943 585ZM943 585 968 582 937 581 912 583ZM775 577 802 575 779 574 751 576ZM751 576 779 574 756 573 728 575ZM728 575 756 573 734 572 706 574ZM706 574 734 572 714 572 685 574ZM685 574 714 572 694 571 665 573ZM665 573 694 571 674 570 646 572ZM646 572 674 570 656 569 627 571ZM592 570 621 568 604 567 575 569ZM559 568 588 567 573 566 544 568ZM544 568 573 566 558 565 529 567ZM501 566 529 564 516 564 487 565ZM487 565 516 564 503 563 474 564ZM394 561 421 560 411 560 384 561ZM364 560 391 559 382 558 355 559ZM337 559 363 558 355 557 328 558ZM328 558 355 557 346 557 320 558ZM320 558 346 557 338 557 311 557ZM1334 597 1344 592 1296 591 1284 594ZM1071 586 1090 583 1055 582 1035 584ZM879 578 904 576 877 575 853 577ZM802 575 828 573 805 572 779 574ZM756 573 782 571 761 571 734 572ZM638 569 665 567 648 566 621 568ZM604 567 631 566 615 565 588 567ZM573 566 600 565 585 564 558 565ZM558 565 585 564 570 563 543 565ZM503 563 530 562 517 561 490 563ZM490 563 517 561 504 561 478 562ZM443 561 469 560 458 559 432 560ZM432 560 458 559 447 559 421 560ZM382 558 407 557 398 557 372 558ZM346 557 371 556 363 556 338 557ZM1451 596 1454 592 1402 590 1396 594ZM1396 594 1402 590 1353 589 1344 592ZM1296 591 1307 587 1263 585 1250 589ZM1207 587 1221 584 1182 583 1166 586ZM1022 580 1042 578 1011 577 991 579ZM991 579 1011 577 982 576 960 578ZM904 576 926 574 901 573 877 575ZM877 575 901 573 876 572 852 574ZM648 566 673 565 657 564 631 566ZM585 564 610 563 596 562 570 563ZM530 562 555 561 542 560 517 561ZM504 561 530 560 518 559 492 561ZM469 560 494 559 483 558 458 559ZM417 558 442 557 432 556 407 557ZM1307 587 1317 584 1274 582 1263 585ZM1263 585 1274 582 1234 581 1221 584ZM1221 584 1234 581 1196 580 1182 583ZM1144 581 1160 579 1125 577 1109 580ZM1075 579 1092 576 1061 575 1042 578ZM954 575 974 573 948 572 926 574ZM852 571 874 569 852 569 829 570ZM765 568 789 566 769 566 745 567ZM745 567 769 566 750 565 726 567ZM657 564 681 563 665 562 641 564ZM641 564 665 562 650 562 625 563ZM610 563 635 561 620 561 596 562ZM568 561 592 560 579 560 555 561ZM555 561 579 560 566 559 542 560ZM518 559 542 558 530 558 506 559ZM506 559 530 558 518 558 494 559ZM462 558 486 557 475 556 452 557ZM452 557 475 556 465 556 442 557ZM442 557 465 556 455 556 432 556ZM1361 585 1369 582 1326 581 1317 584ZM1234 581 1246 578 1210 577 1196 580ZM1196 580 1210 577 1174 576 1160 579ZM1125 577 1141 575 1109 574 1092 576ZM769 566 791 564 773 564 750 565ZM714 564 737 563 720 562 697 563ZM697 563 720 562 704 562 681 563ZM681 563 704 562 688 561 665 562ZM635 561 658 560 643 560 620 561ZM606 561 629 559 615 559 592 560ZM579 560 602 559 589 558 566 559ZM566 559 589 558 577 558 554 559ZM518 558 541 557 530 556 507 557ZM496 557 519 556 508 556 486 557ZM486 557 508 556 498 555 475 556ZM475 556 498 555 488 555 465 556ZM1744 594 1733 590 1673 588 1681 592ZM1461 585 1464 582 1419 581 1414 583ZM1414 583 1419 581 1375 579 1369 582ZM1369 582 1375 579 1334 578 1326 581ZM1246 578 1258 576 1222 575 1210 577ZM1048 572 1065 570 1038 569 1020 571ZM993 571 1011 569 986 568 967 570ZM831 566 851 564 831 564 811 565ZM737 563 758 561 742 561 720 562ZM688 561 710 560 694 560 672 561ZM658 560 679 559 665 559 643 560ZM553 557 575 556 563 556 541 557ZM541 557 563 556 552 555 530 556ZM519 556 541 555 530 555 508 556ZM1616 586 1612 583 1561 582 1563 585ZM1094 571 1109 569 1081 568 1065 570ZM986 568 1003 566 979 566 961 567ZM961 567 979 566 955 565 937 567ZM893 565 911 564 890 563 871 565ZM776 562 796 561 779 560 758 561ZM679 559 700 558 686 558 665 559ZM637 558 658 557 645 557 624 558ZM624 558 645 557 632 556 611 557ZM611 557 632 556 620 556 599 557ZM575 556 595 555 584 555 563 556ZM563 556 584 555 573 555 552 555ZM541 555 562 554 551 554 530 555ZM1915 591 1895 587 1831 586 1847 589ZM1783 588 1771 584 1714 583 1723 586ZM1612 583 1608 580 1559 579 1561 582ZM1513 580 1513 578 1469 576 1467 579ZM1467 579 1469 576 1427 575 1423 578ZM1342 576 1349 573 1312 572 1304 575ZM1304 575 1312 572 1277 571 1268 574ZM1168 571 1181 569 1151 568 1138 570ZM1109 569 1123 567 1095 567 1081 568ZM870 563 889 561 869 561 851 562ZM779 560 798 559 781 559 762 560ZM730 559 750 558 735 557 715 558ZM672 557 692 556 678 556 658 557ZM645 557 665 556 652 555 632 556ZM595 555 616 554 604 554 584 555ZM1831 586 1817 582 1759 581 1771 584ZM1513 578 1514 575 1471 574 1469 576ZM1349 573 1355 571 1320 570 1312 572ZM1244 571 1254 569 1222 568 1212 570ZM1212 570 1222 568 1192 567 1181 569ZM1181 569 1192 567 1163 566 1151 568ZM1123 567 1136 566 1109 565 1095 567ZM1043 565 1058 564 1034 563 1019 565ZM995 564 1011 563 988 562 972 564ZM972 564 988 562 967 562 950 563ZM950 563 967 562 946 561 929 562ZM908 562 925 561 906 560 889 561ZM869 561 887 560 868 559 851 560ZM765 558 784 557 768 557 750 558ZM735 557 753 556 739 556 720 557ZM692 556 711 555 697 555 678 556ZM1817 582 1804 579 1749 578 1759 581ZM1705 580 1697 577 1648 576 1654 578ZM1654 578 1648 576 1601 575 1605 577ZM1471 574 1473 572 1435 571 1431 573ZM1320 570 1327 568 1294 568 1286 569ZM1254 569 1263 567 1232 566 1222 568ZM1192 567 1203 565 1175 565 1163 566ZM1109 565 1121 564 1096 563 1083 564ZM946 561 961 560 941 559 925 561ZM925 561 941 559 922 559 906 560ZM887 560 903 559 885 558 868 559ZM868 559 885 558 867 558 850 559ZM850 559 867 558 850 557 833 558ZM833 558 850 557 833 557 816 558ZM816 558 833 557 817 557 800 558ZM800 558 817 557 801 556 784 557ZM711 555 729 555 715 554 697 555ZM659 554 677 553 665 553 647 554ZM1804 579 1792 577 1740 576 1749 578ZM1557 574 1556 571 1515 571 1514 573ZM1327 568 1334 567 1302 566 1294 568ZM1263 567 1271 565 1242 565 1232 566ZM1203 565 1213 564 1186 563 1175 565ZM1175 565 1186 563 1159 563 1148 564ZM1025 561 1039 560 1018 560 1003 561ZM961 560 976 559 957 558 941 559ZM867 558 884 557 867 556 850 557ZM817 557 834 556 818 555 801 556ZM786 556 803 555 788 555 771 556ZM757 555 774 554 760 554 743 555ZM729 555 746 554 733 553 715 554ZM1556 571 1555 569 1515 569 1515 571ZM1515 571 1515 569 1477 568 1475 570ZM1475 570 1477 568 1441 567 1438 569ZM1402 568 1406 566 1372 566 1367 567ZM1367 567 1372 566 1340 565 1334 567ZM1242 565 1250 563 1223 562 1213 564ZM1213 564 1223 562 1196 562 1186 563ZM1186 563 1196 562 1170 561 1159 563ZM1133 562 1145 561 1121 560 1109 562ZM1039 560 1053 559 1031 558 1018 560ZM1018 560 1031 558 1011 558 997 559ZM997 559 1011 558 991 558 976 559ZM976 559 991 558 971 557 957 558ZM957 558 971 557 952 557 938 558ZM938 558 952 557 934 556 919 557ZM884 557 899 556 882 555 867 556ZM818 555 834 554 819 554 803 555ZM788 555 805 554 790 553 774 554ZM774 554 790 553 776 553 760 554ZM1781 574 1770 572 1723 571 1731 573ZM1639 571 1635 569 1593 568 1596 570ZM1477 568 1479 566 1444 565 1441 567ZM1372 566 1377 564 1346 563 1340 565ZM1223 562 1232 561 1205 561 1196 562ZM1097 560 1109 559 1087 558 1074 559ZM1031 558 1044 557 1024 557 1011 558ZM952 557 966 556 948 555 934 556ZM916 556 931 555 914 555 899 556ZM866 555 881 554 865 554 850 555ZM850 555 865 554 850 554 834 554ZM834 554 850 554 835 553 819 554ZM819 554 835 553 820 553 805 554ZM1770 572 1761 570 1716 569 1723 571ZM1723 571 1716 569 1672 568 1678 570ZM1678 570 1672 568 1631 567 1635 569ZM1515 567 1516 565 1480 564 1479 566ZM1410 565 1414 563 1382 562 1377 564ZM1377 564 1382 562 1352 562 1346 563ZM1287 562 1294 561 1266 560 1259 562ZM1232 561 1240 560 1214 559 1205 561ZM1180 560 1190 559 1166 558 1155 560ZM1132 559 1142 558 1120 558 1109 559ZM966 556 980 555 962 555 948 555ZM948 555 962 555 945 554 931 555ZM931 555 945 554 928 554 914 555ZM881 554 895 553 880 553 865 554ZM865 554 880 553 864 553 850 554ZM820 553 835 552 821 552 806 553ZM1446 564 1449 562 1417 562 1414 563ZM1382 562 1386 561 1357 561 1352 562ZM1190 559 1199 558 1175 557 1166 558ZM1142 558 1152 557 1130 556 1120 558ZM928 554 941 553 925 553 911 554ZM911 554 925 553 909 552 895 553ZM895 553 909 552 894 552 880 553ZM864 553 878 552 864 552 850 552ZM1798 568 1788 567 1744 566 1753 568ZM1753 568 1744 566 1703 565 1709 567ZM1709 567 1703 565 1662 564 1667 566ZM1627 565 1624 564 1587 563 1589 565ZM1589 565 1587 563 1551 562 1552 564ZM1449 562 1451 561 1420 560 1417 562ZM1386 561 1390 560 1362 559 1357 561ZM1300 560 1307 558 1281 558 1274 559ZM1248 559 1255 557 1231 557 1223 558ZM1223 558 1231 557 1207 557 1199 558ZM1109 556 1119 555 1099 555 1088 556ZM1029 555 1041 554 1022 553 1010 554ZM1010 554 1022 553 1005 553 992 554ZM975 554 987 553 970 552 958 553ZM1662 564 1658 563 1621 562 1624 564ZM1483 561 1485 560 1453 559 1451 561ZM1451 561 1453 559 1423 559 1420 560ZM1420 560 1423 559 1394 558 1390 560ZM1362 559 1366 558 1339 558 1334 559ZM1281 558 1287 557 1263 556 1255 557ZM1231 557 1239 556 1215 556 1207 557ZM1184 556 1193 555 1171 555 1162 556ZM1022 553 1034 553 1016 552 1005 553ZM970 552 982 552 966 551 954 552ZM938 552 950 551 935 551 922 552ZM1697 563 1691 562 1654 561 1658 563ZM1658 563 1654 561 1618 561 1621 562ZM1621 562 1618 561 1583 560 1585 562ZM1585 562 1583 560 1549 560 1550 561ZM1423 559 1426 558 1398 557 1394 558ZM1366 558 1371 557 1344 556 1339 558ZM1339 558 1344 556 1318 556 1313 557ZM1313 557 1318 556 1293 556 1287 557ZM1150 554 1159 554 1138 553 1129 554ZM982 552 994 551 978 551 966 551ZM1730 562 1723 561 1686 560 1691 562ZM1455 558 1457 557 1429 557 1426 558ZM1426 558 1429 557 1401 556 1398 557ZM1398 557 1401 556 1375 556 1371 557ZM1371 557 1375 556 1349 555 1344 556ZM1223 555 1230 554 1209 553 1201 554ZM1179 554 1188 553 1167 553 1159 554ZM1159 554 1167 553 1147 552 1138 553ZM1099 553 1109 552 1090 551 1081 552ZM1686 560 1681 559 1646 559 1650 560ZM1650 560 1646 559 1612 558 1615 559ZM1615 559 1612 558 1580 558 1581 559ZM1517 558 1517 557 1488 556 1487 557ZM1487 557 1488 556 1459 556 1457 557ZM1324 555 1329 554 1305 554 1299 555ZM1299 555 1305 554 1282 553 1276 554ZM1188 553 1195 552 1175 552 1167 553ZM1128 552 1137 551 1118 551 1109 552ZM1090 551 1100 551 1082 550 1072 551ZM1717 560 1712 558 1676 558 1681 559ZM1432 555 1434 554 1408 554 1405 555ZM1379 555 1382 554 1358 553 1353 554ZM1282 553 1288 552 1266 552 1259 553ZM1259 553 1266 552 1244 552 1237 553ZM1137 551 1145 550 1127 550 1118 551ZM1100 551 1109 550 1091 550 1082 550ZM1748 559 1741 557 1706 557 1712 558ZM1712 558 1706 557 1672 557 1676 558ZM1610 557 1607 556 1577 555 1578 556ZM1578 556 1577 555 1547 555 1547 556ZM1547 556 1547 555 1518 555 1518 556ZM1358 553 1362 552 1338 552 1334 553ZM1145 550 1153 550 1135 549 1127 550ZM1672 557 1668 555 1636 555 1639 556ZM1607 556 1605 555 1575 554 1577 555ZM1518 555 1518 554 1491 553 1490 554ZM1315 552 1320 551 1298 551 1293 552ZM1293 552 1298 551 1277 550 1272 551ZM1251 551 1257 550 1237 550 1230 551ZM1210 550 1217 550 1198 549 1191 550ZM1668 555 1664 554 1633 554 1636 555ZM1464 553 1466 552 1441 552 1439 553ZM1389 552 1392 551 1369 551 1366 552ZM1366 552 1369 551 1347 550 1343 551ZM1320 551 1325 550 1304 550 1298 551ZM1664 554 1661 553 1630 553 1633 554ZM1633 554 1630 553 1601 553 1603 554ZM1546 553 1545 552 1519 552 1518 553ZM1441 552 1443 551 1419 551 1416 551ZM1416 551 1419 551 1396 550 1392 551ZM1392 551 1396 550 1373 550 1369 551ZM1369 551 1373 550 1351 550 1347 550ZM1519 552 1519 551 1493 551 1493 551ZM1467 551 1469 550 1445 550 1443 551ZM1419 551 1421 550 1398 549 1396 550ZM1308 549 1313 549 1293 548 1288 549ZM1718 553 1713 552 1683 552 1687 553ZM1657 552 1654 551 1625 551 1628 552ZM1519 551 1519 550 1494 550 1493 551ZM1398 549 1401 549 1380 548 1376 549ZM1654 551 1651 551 1623 550 1625 551ZM1494 550 1495 549 1471 549 1470 549ZM1470 549 1471 549 1448 548 1446 549ZM1709 551 1704 550 1676 550 1679 551ZM1679 551 1676 550 1648 550 1651 551ZM1676 550 1672 549 1645 549 1648 550ZM1568 549 1568 548 1543 548 1544 549ZM1519 548 1519 548 1496 548 1495 548ZM1700 549 1696 549 1669 548 1672 549ZM1496 548 1497 547 1475 547 1474 547ZM1696 549 1692 548 1665 548 1669 548ZM1642 548 1639 547 1614 547 1616 548ZM1591 548 1590 547 1566 547 1567 547ZM1692 548 1688 547 1662 547 1665 548ZM1665 548 1662 547 1637 547 1639 547ZM1639 547 1637 547 1612 547 1614 547ZM1685 546 1681 546 1656 546 1659 546Z"/><path fill="#452e24" d="M16 603 90 599 79 597 7 601ZM90 599 157 595 145 593 79 597ZM22 587 81 584 72 583 14 586ZM157 595 218 591 204 590 145 593ZM145 593 204 590 192 588 133 591ZM110 588 168 585 156 584 100 587ZM90 586 146 583 135 582 81 584ZM64 582 116 580 107 579 55 581ZM232 593 289 589 274 588 218 591ZM218 591 274 588 259 587 204 590ZM179 587 233 584 220 583 168 585ZM146 583 197 580 186 579 135 582ZM116 580 165 577 156 576 107 579ZM99 578 146 576 138 575 90 577ZM68 574 113 572 105 572 60 573ZM41 571 84 569 77 569 35 570ZM29 570 70 568 64 568 23 569ZM421 602 477 598 454 596 399 600ZM399 600 454 596 432 594 378 598ZM322 593 375 589 357 588 305 591ZM274 588 325 585 310 584 259 587ZM246 585 296 583 282 581 233 584ZM186 579 233 577 222 576 175 578ZM175 578 222 576 211 575 165 577ZM165 577 211 575 201 574 156 576ZM156 576 201 574 191 574 146 576ZM113 572 155 571 147 570 105 572ZM36 565 73 564 67 563 31 564ZM477 598 527 594 504 592 454 596ZM454 596 504 592 482 591 432 594ZM375 589 423 586 405 585 357 588ZM269 580 314 578 301 577 256 579ZM244 578 289 576 277 575 233 577ZM222 576 265 574 254 573 211 575ZM211 575 254 573 243 573 201 574ZM201 574 243 573 233 572 191 574ZM155 571 195 569 187 568 147 570ZM110 567 148 565 141 565 103 566ZM97 566 134 564 127 564 91 565ZM91 565 127 564 120 563 84 565ZM73 564 108 562 102 562 67 563ZM665 604 711 600 680 598 634 602ZM605 600 651 596 624 594 578 598ZM578 598 624 594 598 592 552 596ZM504 592 550 589 528 587 482 591ZM405 585 450 582 432 581 388 584ZM357 581 400 579 385 578 342 580ZM342 580 385 578 370 577 328 579ZM254 573 294 572 283 571 243 573ZM243 573 283 571 272 570 233 572ZM223 571 262 569 252 569 214 570ZM195 569 233 567 224 567 187 568ZM148 565 183 564 176 564 141 565ZM127 564 162 563 155 562 120 563ZM624 594 665 590 639 589 598 592ZM598 592 639 589 615 587 573 590ZM550 589 592 586 569 584 528 587ZM507 586 548 583 528 582 487 585ZM487 585 528 582 509 581 468 583ZM385 578 424 576 410 575 370 577ZM356 576 395 574 382 573 343 575ZM343 575 382 573 368 572 330 574ZM317 573 356 571 343 571 306 572ZM283 571 320 569 309 568 272 570ZM272 570 309 568 299 568 262 569ZM252 569 288 567 278 567 242 568ZM169 563 202 562 194 562 162 563ZM142 561 174 560 167 560 135 561ZM693 592 730 588 703 587 665 590ZM665 590 703 587 678 585 639 589ZM639 589 678 585 653 584 615 587ZM615 587 653 584 630 583 592 586ZM592 586 630 583 608 582 569 584ZM528 582 566 579 547 578 509 581ZM456 577 494 575 477 574 440 576ZM368 572 405 570 392 570 356 571ZM332 570 367 568 355 568 320 569ZM320 569 355 568 344 567 309 568ZM309 568 344 567 333 566 299 568ZM299 568 333 566 323 566 288 567ZM259 565 293 564 284 564 250 565ZM233 564 266 563 257 562 225 563ZM225 563 257 562 249 562 217 563ZM217 563 249 562 241 561 209 562ZM730 588 765 585 738 584 703 587ZM678 585 713 583 688 581 653 584ZM587 580 622 578 602 577 566 579ZM566 579 602 577 582 576 547 578ZM547 578 582 576 564 575 528 577ZM528 577 564 575 546 574 511 576ZM511 576 546 574 529 573 494 575ZM462 573 496 572 481 571 447 573ZM447 573 481 571 466 570 432 572ZM392 570 425 568 413 567 379 569ZM379 569 413 567 400 567 367 568ZM355 568 389 566 377 566 344 567ZM344 567 377 566 366 565 333 566ZM333 566 366 565 355 564 323 566ZM312 565 345 564 335 563 303 565ZM303 565 335 563 325 563 293 564ZM293 564 325 563 315 562 284 564ZM266 563 297 561 288 561 257 562ZM249 562 280 561 271 560 241 561ZM218 560 248 559 241 559 211 560ZM211 560 241 559 233 558 204 559ZM1040 599 1065 595 1025 593 999 597ZM959 595 987 591 951 590 922 593ZM922 593 951 590 917 588 887 591ZM793 587 824 584 797 582 765 585ZM713 583 745 580 721 579 688 581ZM481 571 514 569 499 568 466 570ZM413 567 444 566 432 565 400 567ZM366 565 397 564 386 563 355 564ZM297 561 327 560 318 560 288 561ZM271 560 300 559 292 559 263 560ZM248 559 276 558 269 558 241 559ZM1065 595 1088 591 1049 589 1025 593ZM987 591 1012 588 977 586 951 590ZM951 590 977 586 943 585 917 588ZM884 586 912 583 882 582 853 585ZM824 584 853 581 826 580 797 582ZM797 582 826 580 800 579 770 581ZM770 581 800 579 775 577 745 580ZM721 579 751 576 728 575 698 578ZM676 577 706 574 685 574 655 576ZM655 576 685 574 665 573 634 575ZM634 575 665 573 646 572 615 574ZM579 572 609 570 592 570 561 571ZM561 571 592 570 575 569 545 571ZM499 568 529 567 515 566 484 568ZM386 563 415 562 404 561 375 563ZM318 560 346 559 337 559 309 560ZM309 560 337 559 328 558 300 559ZM276 558 303 557 296 557 269 558ZM269 558 296 557 288 556 261 557ZM1220 597 1236 593 1191 591 1174 595ZM1174 595 1191 591 1149 589 1130 593ZM912 583 937 581 908 579 882 582ZM882 582 908 579 879 578 853 581ZM853 581 879 578 853 577 826 580ZM826 580 853 577 827 576 800 579ZM609 570 638 569 621 568 592 570ZM575 569 604 567 588 567 559 568ZM529 567 558 565 543 565 515 566ZM426 562 454 561 443 561 415 562ZM384 561 411 560 401 559 374 560ZM355 559 382 558 372 558 346 559ZM346 559 372 558 363 558 337 559ZM1284 594 1296 591 1250 589 1236 593ZM1236 593 1250 589 1207 587 1191 591ZM1149 589 1166 586 1127 584 1109 587ZM1109 587 1127 584 1090 583 1071 586ZM1035 584 1055 582 1022 580 1000 583ZM1000 583 1022 580 991 579 968 582ZM853 577 877 575 852 574 827 576ZM827 576 852 574 828 573 802 575ZM714 572 740 570 720 569 694 571ZM694 571 720 569 701 568 674 570ZM588 567 615 565 600 565 573 566ZM466 562 492 561 481 560 454 561ZM454 561 481 560 469 560 443 561ZM411 560 437 558 427 558 401 559ZM372 558 398 557 389 557 363 558ZM355 557 380 556 371 556 346 557ZM1509 598 1510 594 1454 592 1451 596ZM1344 592 1353 589 1307 587 1296 591ZM1250 589 1263 585 1221 584 1207 587ZM1055 582 1075 579 1042 578 1022 580ZM960 578 982 576 954 575 931 577ZM761 571 786 569 765 568 740 570ZM740 570 765 568 745 567 720 569ZM720 569 745 567 726 567 701 568ZM683 568 708 566 690 565 665 567ZM665 567 690 565 673 565 648 566ZM631 566 657 564 641 564 615 565ZM600 565 625 563 610 563 585 564ZM570 563 596 562 582 562 556 563ZM556 563 582 562 568 561 543 562ZM543 562 568 561 555 561 530 562ZM447 559 472 558 462 558 437 558ZM437 558 462 558 452 557 427 558ZM427 558 452 557 442 557 417 558ZM1510 594 1511 590 1458 588 1454 592ZM1454 592 1458 588 1408 587 1402 590ZM1402 590 1408 587 1361 585 1353 589ZM1182 583 1196 580 1160 579 1144 581ZM1109 580 1125 577 1092 576 1075 579ZM1011 577 1031 574 1002 573 982 576ZM901 573 922 571 898 570 876 572ZM829 570 852 569 830 568 807 570ZM807 570 830 568 809 567 786 569ZM708 566 732 565 714 564 690 565ZM625 563 650 562 635 561 610 563ZM596 562 620 561 606 561 582 562ZM542 560 566 559 554 559 530 560ZM530 560 554 559 542 558 518 559ZM494 559 518 558 507 557 483 558ZM422 556 446 555 436 555 413 556ZM1689 596 1681 592 1621 590 1626 594ZM1626 594 1621 590 1564 588 1566 592ZM1458 588 1461 585 1414 583 1408 587ZM1408 587 1414 583 1369 582 1361 585ZM1274 582 1285 580 1246 578 1234 581ZM1092 576 1109 574 1078 573 1061 575ZM1031 574 1048 572 1020 571 1002 573ZM1002 573 1020 571 993 571 974 573ZM898 570 918 568 895 568 874 569ZM874 569 895 568 873 567 852 569ZM852 569 873 567 851 566 830 568ZM830 568 851 566 831 566 809 567ZM809 567 831 566 811 565 789 566ZM789 566 811 565 791 564 769 566ZM750 565 773 564 754 563 732 565ZM665 562 688 561 672 561 650 562ZM650 562 672 561 658 560 635 561ZM620 561 643 560 629 559 606 561ZM592 560 615 559 602 559 579 560ZM507 557 530 556 519 556 496 557ZM465 556 488 555 478 555 455 556ZM1511 586 1512 583 1464 582 1461 585ZM1285 580 1295 577 1258 576 1246 578ZM1141 575 1155 573 1124 572 1109 574ZM967 570 986 568 961 567 942 569ZM942 569 961 567 937 567 918 568ZM873 567 893 565 871 565 851 566ZM851 566 871 565 851 564 831 566ZM791 564 812 563 794 562 773 564ZM754 563 776 562 758 561 737 563ZM672 561 694 560 679 559 658 560ZM629 559 651 558 637 558 615 559ZM615 559 637 558 624 558 602 559ZM589 558 611 557 599 557 577 558ZM508 556 530 555 520 555 498 555ZM498 555 520 555 509 554 488 555ZM1865 593 1847 589 1783 588 1797 591ZM1797 591 1783 588 1723 586 1733 590ZM1512 583 1513 580 1467 579 1464 582ZM1419 581 1423 578 1381 577 1375 579ZM1375 579 1381 577 1342 576 1334 578ZM1334 578 1342 576 1304 575 1295 577ZM1222 575 1233 573 1200 572 1188 574ZM1038 569 1054 568 1028 567 1011 569ZM1011 569 1028 567 1003 566 986 568ZM851 564 870 563 851 562 831 564ZM812 563 832 562 814 561 794 562ZM758 561 779 560 762 560 742 561ZM742 561 762 560 746 559 725 560ZM694 560 715 558 700 558 679 559ZM665 559 686 558 672 557 651 558ZM651 558 672 557 658 557 637 558ZM552 555 573 555 562 554 541 555ZM1666 584 1659 581 1608 580 1612 583ZM1423 578 1427 575 1387 574 1381 577ZM1381 577 1387 574 1349 573 1342 576ZM1268 574 1277 571 1244 571 1233 573ZM1233 573 1244 571 1212 570 1200 572ZM1138 570 1151 568 1123 567 1109 569ZM1054 568 1069 566 1043 565 1028 567ZM890 563 908 562 889 561 870 563ZM814 561 832 560 815 560 796 561ZM796 561 815 560 798 559 779 560ZM762 560 781 559 765 558 746 559ZM746 559 765 558 750 558 730 559ZM700 558 720 557 706 557 686 558ZM620 556 640 555 627 555 607 556ZM607 556 627 555 616 554 595 555ZM584 555 604 554 593 554 573 555ZM1659 581 1654 578 1605 577 1608 580ZM1387 574 1392 572 1355 571 1349 573ZM1277 571 1286 569 1254 569 1244 571ZM1095 567 1109 565 1083 564 1069 566ZM889 561 906 560 887 560 869 561ZM851 560 868 559 850 559 832 560ZM832 560 850 559 833 558 815 560ZM798 559 816 558 800 558 781 559ZM781 559 800 558 784 557 765 558ZM665 556 684 555 671 554 652 555ZM652 555 671 554 659 554 640 555ZM640 555 659 554 647 554 627 555ZM1759 581 1749 578 1697 577 1705 580ZM1431 573 1435 571 1397 570 1392 572ZM1355 571 1361 569 1327 568 1320 570ZM1136 566 1148 564 1121 564 1109 565ZM1083 564 1096 563 1072 562 1058 564ZM1058 564 1072 562 1048 562 1034 563ZM1034 563 1048 562 1025 561 1011 563ZM988 562 1003 561 982 560 967 562ZM967 562 982 560 961 560 946 561ZM906 560 922 559 903 559 887 560ZM753 556 771 556 757 555 739 556ZM739 556 757 555 743 555 724 556ZM724 556 743 555 729 555 711 555ZM684 555 702 554 690 554 671 554ZM1514 573 1515 571 1475 570 1473 572ZM1397 570 1402 568 1367 567 1361 569ZM1361 569 1367 567 1334 567 1327 568ZM1232 566 1242 565 1213 564 1203 565ZM1148 564 1159 563 1133 562 1121 564ZM1096 563 1109 562 1085 561 1072 562ZM1048 562 1062 561 1039 560 1025 561ZM1003 561 1018 560 997 559 982 560ZM922 559 938 558 919 557 903 559ZM903 559 919 557 901 557 885 558ZM833 557 850 556 834 556 817 557ZM771 556 788 555 774 554 757 555ZM743 555 760 554 746 554 729 555ZM702 554 720 553 707 553 690 554ZM1792 577 1781 574 1731 573 1740 576ZM1740 576 1731 573 1684 572 1690 574ZM1438 569 1441 567 1406 566 1402 568ZM1334 567 1340 565 1309 564 1302 566ZM1302 566 1309 564 1279 564 1271 565ZM1271 565 1279 564 1250 563 1242 565ZM1085 561 1097 560 1074 559 1062 561ZM1062 561 1074 559 1053 559 1039 560ZM834 556 850 555 834 554 818 555ZM803 555 819 554 805 554 788 555ZM760 554 776 553 763 553 746 554ZM1731 573 1723 571 1678 570 1684 572ZM1596 570 1593 568 1554 567 1555 569ZM1441 567 1444 565 1410 565 1406 566ZM1406 566 1410 565 1377 564 1372 566ZM1309 564 1316 563 1287 562 1279 564ZM1250 563 1259 562 1232 561 1223 562ZM1170 561 1180 560 1155 560 1145 561ZM1145 561 1155 560 1132 559 1121 560ZM1121 560 1132 559 1109 559 1097 560ZM1074 559 1087 558 1065 558 1053 559ZM1053 559 1065 558 1044 557 1031 558ZM1011 558 1024 557 1004 557 991 558ZM991 558 1004 557 985 556 971 557ZM971 557 985 556 966 556 952 557ZM934 556 948 555 931 555 916 556ZM899 556 914 555 897 554 882 555ZM882 555 897 554 881 554 866 555ZM790 553 806 553 792 552 776 553ZM1820 573 1809 571 1761 570 1770 572ZM1593 568 1591 566 1553 566 1554 567ZM1479 566 1480 564 1446 564 1444 565ZM1346 563 1352 562 1322 561 1316 563ZM1316 563 1322 561 1294 561 1287 562ZM1155 560 1166 558 1142 558 1132 559ZM1087 558 1098 557 1077 557 1065 558ZM1065 558 1077 557 1056 556 1044 557ZM1024 557 1036 556 1017 556 1004 557ZM1004 557 1017 556 998 555 985 556ZM985 556 998 555 980 555 966 556ZM850 554 864 553 850 552 835 553ZM1809 571 1798 568 1753 568 1761 570ZM1761 570 1753 568 1709 567 1716 569ZM1553 566 1552 564 1516 563 1516 565ZM1414 563 1417 562 1386 561 1382 562ZM1352 562 1357 561 1328 560 1322 561ZM1294 561 1300 560 1274 559 1266 560ZM1266 560 1274 559 1248 559 1240 560ZM1098 557 1109 556 1088 556 1077 557ZM1077 557 1088 556 1068 555 1056 556ZM1036 556 1048 555 1029 555 1017 556ZM998 555 1010 554 992 554 980 555ZM945 554 958 553 941 553 928 554ZM1667 566 1662 564 1624 564 1627 565ZM1552 564 1551 562 1516 562 1516 563ZM1516 563 1516 562 1483 561 1482 563ZM1357 561 1362 559 1334 559 1328 560ZM1152 557 1162 556 1140 555 1130 556ZM1068 555 1079 554 1059 554 1048 555ZM1048 555 1059 554 1041 554 1029 555ZM1703 565 1697 563 1658 563 1662 564ZM1587 563 1585 562 1550 561 1551 562ZM1334 559 1339 558 1313 557 1307 558ZM1307 558 1313 557 1287 557 1281 558ZM1207 557 1215 556 1193 555 1184 556ZM1162 556 1171 555 1150 554 1140 555ZM1140 555 1150 554 1129 554 1119 555ZM1059 554 1070 553 1052 553 1041 554ZM1041 554 1052 553 1034 553 1022 553ZM1005 553 1016 552 999 552 987 553ZM987 553 999 552 982 552 970 552ZM1779 565 1770 563 1730 562 1737 564ZM1737 564 1730 562 1691 562 1697 563ZM1550 561 1549 560 1517 559 1517 560ZM1485 560 1486 559 1455 558 1453 559ZM1287 557 1293 556 1269 555 1263 556ZM1263 556 1269 555 1246 555 1239 556ZM1193 555 1201 554 1179 554 1171 555ZM1129 554 1138 553 1118 553 1109 554ZM1089 553 1099 553 1081 552 1070 553ZM1070 553 1081 552 1062 552 1052 553ZM1052 553 1062 552 1045 552 1034 553ZM1034 553 1045 552 1027 551 1016 552ZM1016 552 1027 551 1010 551 999 552ZM999 552 1010 551 994 551 982 552ZM1770 563 1762 562 1723 561 1730 562ZM1691 562 1686 560 1650 560 1654 561ZM1583 560 1581 559 1549 558 1549 560ZM1517 559 1517 558 1487 557 1486 559ZM1344 556 1349 555 1324 555 1318 556ZM1318 556 1324 555 1299 555 1293 556ZM1293 556 1299 555 1276 554 1269 555ZM1269 555 1276 554 1253 554 1246 555ZM1246 555 1253 554 1230 554 1223 555ZM1201 554 1209 553 1188 553 1179 554ZM1081 552 1090 551 1072 551 1062 552ZM1045 552 1055 551 1038 551 1027 551ZM1027 551 1038 551 1021 550 1010 551ZM1762 562 1755 560 1717 560 1723 561ZM1723 561 1717 560 1681 559 1686 560ZM1549 558 1548 557 1517 557 1517 558ZM1429 557 1432 555 1405 555 1401 556ZM1276 554 1282 553 1259 553 1253 554ZM1253 554 1259 553 1237 553 1230 554ZM1230 554 1237 553 1216 552 1209 553ZM1209 553 1216 552 1195 552 1188 553ZM1109 552 1118 551 1100 551 1090 551ZM1681 559 1676 558 1643 557 1646 559ZM1488 556 1489 555 1461 555 1459 556ZM1459 556 1461 555 1434 554 1432 555ZM1353 554 1358 553 1334 553 1329 554ZM1237 553 1244 552 1223 552 1216 552ZM1156 552 1164 551 1145 550 1137 551ZM1118 551 1127 550 1109 550 1100 551ZM1676 558 1672 557 1639 556 1643 557ZM1643 557 1639 556 1607 556 1610 557ZM1408 554 1411 553 1386 553 1382 554ZM1382 554 1386 553 1362 552 1358 553ZM1334 553 1338 552 1315 552 1310 553ZM1310 553 1315 552 1293 552 1288 552ZM1288 552 1293 552 1272 551 1266 552ZM1223 552 1230 551 1210 550 1203 551ZM1183 551 1191 550 1172 550 1164 551ZM1741 557 1735 556 1701 556 1706 557ZM1362 552 1366 552 1343 551 1338 552ZM1701 556 1696 555 1664 554 1668 555ZM1636 555 1633 554 1603 554 1605 555ZM1546 554 1546 553 1518 553 1518 554ZM1439 553 1441 552 1416 551 1414 552ZM1414 552 1416 551 1392 551 1389 552ZM1343 551 1347 550 1325 550 1320 551ZM1298 551 1304 550 1283 550 1277 550ZM1277 550 1283 550 1262 549 1257 550ZM1237 550 1243 549 1223 549 1217 550ZM1574 553 1573 552 1545 552 1546 553ZM1518 553 1519 552 1493 551 1492 552ZM1466 552 1467 551 1443 551 1441 552ZM1325 550 1329 549 1308 549 1304 550ZM1304 550 1308 549 1288 549 1283 550ZM1262 549 1268 549 1249 549 1243 549ZM1724 554 1718 553 1687 553 1692 554ZM1692 554 1687 553 1657 552 1661 553ZM1601 553 1599 552 1572 551 1573 552ZM1573 552 1572 551 1545 551 1545 552ZM1443 551 1445 550 1421 550 1419 551ZM1396 550 1398 549 1376 549 1373 550ZM1351 550 1355 549 1334 549 1329 549ZM1329 549 1334 549 1313 549 1308 549ZM1572 551 1571 551 1544 550 1545 551ZM1469 550 1470 549 1446 549 1445 550ZM1445 550 1446 549 1424 549 1421 550ZM1376 549 1380 548 1358 548 1355 549ZM1334 549 1338 548 1317 548 1313 549ZM1571 551 1569 550 1544 549 1544 550ZM1519 550 1519 549 1495 549 1494 550ZM1446 549 1448 548 1426 548 1424 549ZM1424 549 1426 548 1404 548 1401 549ZM1401 549 1404 548 1383 548 1380 548ZM1380 548 1383 548 1362 548 1358 548ZM1596 550 1594 549 1568 549 1569 550ZM1544 549 1544 549 1519 548 1519 549ZM1519 549 1519 548 1495 548 1495 549ZM1448 548 1450 548 1428 548 1426 548ZM1426 548 1428 548 1406 547 1404 548ZM1594 549 1593 548 1568 548 1568 549ZM1495 548 1496 548 1474 547 1472 548ZM1672 549 1669 548 1642 548 1645 549ZM1568 548 1567 547 1543 547 1543 548ZM1543 548 1543 547 1519 547 1519 548ZM1567 547 1566 547 1542 547 1543 547ZM1614 547 1612 547 1588 546 1590 547ZM1659 546 1656 546 1632 545 1635 546Z"/><g stroke="#5e4536" stroke-width="2" opacity="0.6"><line x1="-1985.7" y1="1447.4" x2="-406.1" y2="578.5"/><line x1="-908.4" y1="1543.5" x2="-345.3" y2="576.5"/><line x1="210.6" y1="1310.0" x2="-288.3" y2="574.7"/><line x1="1348.2" y1="1378.6" x2="-234.7" y2="572.9"/><line x1="2735.8" y1="1462.2" x2="-184.1" y2="571.3"/><line x1="3030.6" y1="1255.6" x2="-136.4" y2="569.7"/><line x1="4384.0" y1="1315.9" x2="-91.3" y2="568.2"/><line x1="6019.9" y1="1388.8" x2="-48.5" y2="566.8"/><line x1="4298.6" y1="1054.4" x2="-8.0" y2="565.5"/><line x1="3530.7" y1="905.2" x2="30.6" y2="564.3"/><line x1="3095.9" y1="820.7" x2="67.2" y2="563.1"/><line x1="2816.1" y1="766.3" x2="102.1" y2="562.0"/><line x1="2621.0" y1="728.4" x2="135.3" y2="560.9"/><line x1="2477.1" y1="700.4" x2="167.1" y2="559.8"/><line x1="2366.6" y1="679.0" x2="197.4" y2="558.9"/><line x1="2279.1" y1="662.0" x2="226.4" y2="557.9"/><line x1="2208.2" y1="648.2" x2="254.1" y2="557.0"/><line x1="2149.4" y1="636.8" x2="280.7" y2="556.1"/><line x1="2100.0" y1="627.2" x2="306.2" y2="555.3"/><line x1="2057.8" y1="619.0" x2="330.7" y2="554.5"/><line x1="2021.4" y1="611.9" x2="354.2" y2="553.7"/><line x1="1989.7" y1="605.7" x2="376.8" y2="553.0"/><line x1="1961.7" y1="600.3" x2="398.6" y2="552.3"/><line x1="1937.0" y1="595.5" x2="419.5" y2="551.6"/><line x1="1914.9" y1="591.2" x2="439.7" y2="551.0"/><line x1="1895.1" y1="587.4" x2="459.2" y2="550.3"/><line x1="1877.2" y1="583.9" x2="477.9" y2="549.7"/><line x1="1860.9" y1="580.7" x2="496.1" y2="549.1"/><line x1="1846.1" y1="577.8" x2="513.6" y2="548.6"/><line x1="1832.5" y1="575.2" x2="530.5" y2="548.0"/><line x1="1820.1" y1="572.8" x2="546.9" y2="547.5"/><line x1="1808.6" y1="570.6" x2="562.7" y2="547.0"/><line x1="1798.0" y1="568.5" x2="578.0" y2="546.5"/><line x1="1788.1" y1="566.6" x2="592.9" y2="546.0"/><line x1="1779.0" y1="564.8" x2="607.3" y2="545.5"/><line x1="1770.4" y1="563.1" x2="621.2" y2="545.1"/><line x1="1762.4" y1="561.6" x2="634.8" y2="544.6"/><line x1="1754.9" y1="560.1" x2="647.9" y2="544.2"/><line x1="1747.9" y1="558.8" x2="660.7" y2="543.8"/><line x1="1741.3" y1="557.5" x2="673.1" y2="543.4"/><line x1="1735.1" y1="556.3" x2="685.1" y2="543.0"/><line x1="1729.2" y1="555.1" x2="696.8" y2="542.6"/><line x1="1723.7" y1="554.1" x2="708.2" y2="542.2"/><line x1="1718.4" y1="553.0" x2="719.3" y2="541.9"/><line x1="1713.4" y1="552.1" x2="730.0" y2="541.5"/><line x1="1708.7" y1="551.1" x2="740.5" y2="541.2"/><line x1="1704.2" y1="550.3" x2="750.8" y2="540.8"/><line x1="1699.9" y1="549.4" x2="760.7" y2="540.5"/><line x1="1695.8" y1="548.6" x2="770.4" y2="540.2"/><line x1="1691.9" y1="547.9" x2="779.9" y2="539.9"/><line x1="1688.2" y1="547.2" x2="789.1" y2="539.6"/><line x1="1684.7" y1="546.5" x2="798.1" y2="539.3"/><line x1="1681.2" y1="545.8" x2="806.9" y2="539.0"/><line x1="1678.0" y1="545.2" x2="815.5" y2="538.7"/><line x1="1674.9" y1="544.6" x2="823.9" y2="538.5"/><line x1="1671.9" y1="544.0" x2="832.1" y2="538.2"/><line x1="1669.0" y1="543.4" x2="840.0" y2="537.9"/><line x1="1666.2" y1="542.9" x2="847.9" y2="537.7"/><line x1="1663.5" y1="542.4" x2="855.5" y2="537.4"/><line x1="1661.0" y1="541.9" x2="863.0" y2="537.2"/><line x1="1658.5" y1="541.4" x2="870.3" y2="537.0"/><line x1="1656.1" y1="540.9" x2="877.4" y2="536.7"/><line x1="1653.8" y1="540.5" x2="884.4" y2="536.5"/><line x1="1651.6" y1="540.0" x2="891.2" y2="536.3"/><line x1="1649.4" y1="539.6" x2="897.9" y2="536.1"/><line x1="1647.4" y1="539.2" x2="904.5" y2="535.8"/><line x1="1645.4" y1="538.8" x2="910.9" y2="535.6"/><line x1="1643.4" y1="538.5" x2="917.2" y2="535.4"/><line x1="1641.6" y1="538.1" x2="923.3" y2="535.2"/><line x1="1639.7" y1="537.7" x2="929.4" y2="535.0"/><line x1="1638.0" y1="537.4" x2="935.3" y2="534.8"/><line x1="1636.3" y1="537.1" x2="941.1" y2="534.7"/><line x1="1634.6" y1="536.7" x2="946.8" y2="534.5"/><line x1="6019.9" y1="1388.8" x2="1633.0" y2="536.4"/><line x1="4333.2" y1="1160.4" x2="1616.3" y2="536.4"/><line x1="4384.0" y1="1315.9" x2="1599.9" y2="536.3"/><line x1="3221.7" y1="1121.7" x2="1583.7" y2="536.3"/><line x1="3030.6" y1="1255.6" x2="1567.8" y2="536.2"/><line x1="2735.8" y1="1462.2" x2="1552.2" y2="536.2"/><line x1="1892.5" y1="1204.9" x2="1536.8" y2="536.1"/><line x1="1348.2" y1="1378.6" x2="1521.7" y2="536.1"/><line x1="921.9" y1="1161.6" x2="1506.9" y2="536.0"/><line x1="210.6" y1="1310.0" x2="1492.2" y2="536.0"/><line x1="-908.4" y1="1543.5" x2="1477.8" y2="535.9"/><line x1="-739.1" y1="1252.8" x2="1463.7" y2="535.9"/><line x1="-1985.7" y1="1447.4" x2="1449.7" y2="535.9"/><line x1="-1543.9" y1="1204.3" x2="1436.0" y2="535.8"/><line x1="-1287.1" y1="1063.1" x2="1422.5" y2="535.8"/><line x1="-1119.4" y1="970.8" x2="1409.1" y2="535.7"/><line x1="-1001.1" y1="905.8" x2="1396.0" y2="535.7"/><line x1="-913.3" y1="857.5" x2="1383.1" y2="535.6"/><line x1="-845.5" y1="820.2" x2="1370.4" y2="535.6"/><line x1="-791.6" y1="790.5" x2="1357.9" y2="535.6"/><line x1="-747.6" y1="766.4" x2="1345.5" y2="535.5"/><line x1="-711.2" y1="746.3" x2="1333.3" y2="535.5"/><line x1="-680.4" y1="729.4" x2="1321.4" y2="535.5"/><line x1="-654.2" y1="714.9" x2="1309.5" y2="535.4"/><line x1="-631.4" y1="702.4" x2="1297.9" y2="535.4"/><line x1="-611.6" y1="691.5" x2="1286.4" y2="535.3"/><line x1="-594.1" y1="681.9" x2="1275.1" y2="535.3"/><line x1="-578.6" y1="673.4" x2="1263.9" y2="535.3"/><line x1="-564.7" y1="665.8" x2="1252.9" y2="535.2"/><line x1="-552.3" y1="658.9" x2="1242.1" y2="535.2"/><line x1="-541.0" y1="652.7" x2="1231.4" y2="535.2"/><line x1="-530.8" y1="647.1" x2="1220.8" y2="535.1"/><line x1="-521.5" y1="642.0" x2="1210.4" y2="535.1"/><line x1="-512.9" y1="637.3" x2="1200.1" y2="535.1"/><line x1="-505.1" y1="633.0" x2="1190.0" y2="535.0"/><line x1="-497.8" y1="629.0" x2="1180.0" y2="535.0"/><line x1="-491.1" y1="625.3" x2="1170.1" y2="535.0"/><line x1="-484.9" y1="621.9" x2="1160.3" y2="534.9"/><line x1="-479.1" y1="618.7" x2="1150.7" y2="534.9"/><line x1="-473.7" y1="615.7" x2="1141.2" y2="534.9"/><line x1="-468.7" y1="612.9" x2="1131.9" y2="534.9"/><line x1="-464.0" y1="610.3" x2="1122.6" y2="534.8"/><line x1="-459.5" y1="607.9" x2="1113.5" y2="534.8"/><line x1="-455.3" y1="605.6" x2="1104.4" y2="534.8"/><line x1="-451.4" y1="603.4" x2="1095.5" y2="534.7"/><line x1="-447.7" y1="601.4" x2="1086.7" y2="534.7"/><line x1="-444.2" y1="599.5" x2="1078.1" y2="534.7"/><line x1="-440.9" y1="597.6" x2="1069.5" y2="534.7"/><line x1="-437.7" y1="595.9" x2="1061.0" y2="534.6"/><line x1="-434.7" y1="594.2" x2="1052.6" y2="534.6"/><line x1="-431.8" y1="592.7" x2="1044.4" y2="534.6"/><line x1="-429.1" y1="591.2" x2="1036.2" y2="534.6"/><line x1="-426.5" y1="589.7" x2="1028.1" y2="534.5"/><line x1="-424.1" y1="588.4" x2="1020.1" y2="534.5"/><line x1="-421.7" y1="587.1" x2="1012.2" y2="534.5"/><line x1="-419.5" y1="585.9" x2="1004.4" y2="534.5"/><line x1="-417.3" y1="584.7" x2="996.7" y2="534.4"/><line x1="-415.2" y1="583.5" x2="989.1" y2="534.4"/><line x1="-413.2" y1="582.4" x2="981.6" y2="534.4"/><line x1="-411.3" y1="581.4" x2="974.2" y2="534.4"/><line x1="-409.5" y1="580.4" x2="966.8" y2="534.3"/><line x1="-407.7" y1="579.4" x2="959.5" y2="534.3"/></g></g><filter id="fb" x="0" y="0" width="1" height="1"><feGaussianBlur stdDeviation="1.3"/></filter><filter id="fb2" x="0" y="0" width="1" height="1"><feGaussianBlur stdDeviation="7 2"/></filter><linearGradient id="fmg" gradientUnits="userSpaceOnUse" x1="0" y1="600" x2="0" y2="820"><stop offset="0" stop-color="#fff"/><stop offset="1" stop-color="#000"/></linearGradient><mask id="fm" maskUnits="userSpaceOnUse" x="0" y="500" width="1920" height="500"><rect x="0" y="500" width="1920" height="500" fill="url(#fmg)"/></mask></defs><g clip-path="url(#fc)"><use href="#floorg" filter="url(#fb)"/><g mask="url(#fm)"><use href="#floorg" filter="url(#fb2)"/></g></g><polygon points="1502.5,551.2 1575.0,548.8 1637.5,590.0 1461.2,583.8" fill="#552b27"/><polygon points="72.0,82.0 151.3,83.2 989.6,344.0 989.6,359.4 72.0,97.7" fill="#d0d0d0"/><polygon points="72.0,97.7 989.6,359.4 858.7,376.4 793.0,367.0 656.0,387.5 72.0,299.3" fill="#666666"/><polygon points="686.3,392.8 842.5,373.3 842.5,576.0 686.3,567.5" fill="#f1e2c7"/><polygon points="842.5,373.3 858.7,376.4 858.7,574.8 842.5,576.0" fill="#b7ab97"/><polygon points="859.0,419.3 913.0,415.0 913.0,558.7 859.0,560.0" fill="#f1e2c7"/><polygon points="864.0,409.7 912.0,406.0 912.0,415.0 864.0,419.3" fill="#ffffff"/><polygon points="1006.0,438.5 1085.0,435.0 1085.0,512.0 1006.0,512.0" fill="#f1e2c7"/><polygon points="1085.0,435.0 1091.2,436.0 1091.2,512.0 1085.0,512.0" fill="#c9bca6"/><polygon points="1091.2,436.2 1121.2,442.5 1121.2,512.0 1091.2,512.0" fill="#b7ab97"/><polygon points="1121.2,445.0 1136.2,445.0 1136.2,512.0 1121.2,512.0" fill="#f1e2c7"/><polygon points="1137.5,444.4 1170.6,443.1 1170.6,512.0 1137.5,512.0" fill="#f1e2c7"/><polygon points="1170.6,443.0 1175.6,444.0 1175.6,512.0 1170.6,512.0" fill="#c4b8a2"/><polygon points="1175.6,450.0 1199.4,450.0 1199.4,512.0 1175.6,512.0" fill="#f1e2c7"/><polygon points="1199.4,450.0 1203.8,451.0 1203.8,512.0 1199.4,512.0" fill="#c4b8a2"/><polygon points="1203.8,455.0 1225.0,455.0 1225.0,513.0 1203.8,513.0" fill="#f1e2c7"/><polygon points="1225.0,455.0 1227.5,455.0 1227.5,513.0 1225.0,513.0" fill="#c4b8a2"/><polygon points="1127.5,432.5 1190.0,416.2 1617.5,387.5 1575.0,453.0 1267.5,463.8" fill="#666666"/><polygon points="1190.0,406.9 1617.5,375.5 1617.5,387.5 1190.0,416.2" fill="#fafafa"/><polygon points="973.4,400.8 1126.2,386.0 1126.2,397.5 1006.0,408.0" fill="#fafafa"/><polygon points="1126.2,386.0 1190.0,406.9 1190.0,416.2 1126.2,397.5" fill="#d9d9d9"/><polygon points="1006.0,408.0 1126.2,397.5 1190.0,416.2 1221.2,426.2 1127.5,432.5 1006.0,438.5" fill="#666666"/><defs><pattern id="hc1" patternUnits="userSpaceOnUse" width="9" height="2.4"><rect width="9" height="2.4" fill="#9a6c4a"/><rect y="1.7" width="9" height="0.7" fill="#c4a682" opacity="0.6"/><rect x="4" width="1" height="1.7" fill="#c4a682" opacity="0.4"/></pattern><pattern id="hc2" patternUnits="userSpaceOnUse" width="8" height="2.6"><rect width="8" height="2.6" fill="#a27552"/><rect y="1.8" width="8" height="0.8" fill="#c9ad86" opacity="0.55"/><rect x="3" width="1" height="1.8" fill="#c9ad86" opacity="0.35"/></pattern></defs><polygon points="1006.0,511.8 1129.7,511.8 1129.7,567.0 1006.0,562.3" fill="url(#hc1)"/><polygon points="1268.8,476.2 1575.0,468.8 1575.0,546.2 1268.8,542.5" fill="url(#hc2)"/><polygon points="1129.7,511.8 1222.2,513.5 1222.2,553.9 1129.7,567.0" fill="#7c5a3b"/><polygon points="1241.2,457.5 1267.5,463.8 1267.5,543.8 1241.2,544.0" fill="#6f5036"/><polygon points="1236.2,457.0 1241.2,458.0 1241.2,544.0 1236.2,545.0" fill="#8d6a48"/><polygon points="1227.5,478.8 1236.2,478.8 1236.2,546.0 1227.5,547.0" fill="#7d5a3c"/><polygon points="913.3,390.4 919.3,390.4 919.3,569.5 913.3,569.0" fill="#f1e2c7"/><polygon points="919.3,390.4 1006.0,408.5 1006.0,562.3 919.3,569.5" fill="#b7ab97"/></g></svg><div class="abs" style="left:73px;top:83px;width:1845px;height:889px;overflow:hidden"><div class="abs" style="left:-73px;top:-83px;width:1920px;height:1040px"><div class="abs" style="left:0;top:0;width:1080px;height:450px;transform-origin:0 0;transform:matrix3d(1.03620895,0.354095115,0,0.000681061714,0,0.673777778,0,0,0,0,1,0,72,299.3,0,1);opacity:1"><svg width="1080" height="450"><defs><filter id="bfbp1" x="0" y="0" width="1" height="1"><feGaussianBlur stdDeviation="0.7"/></filter><pattern id="bp1" patternUnits="userSpaceOnUse" width="360.0" height="80.0"><rect width="360.0" height="80.0" fill="#c2ab84"/><rect x="-29.4" y="0.6" width="28.8" height="8.8" fill="#6a4a32"/><rect x="0.6" y="0.6" width="28.8" height="8.8" fill="#7e5036"/><rect x="30.6" y="0.6" width="28.8" height="8.8" fill="#8a4e35"/><rect x="60.6" y="0.6" width="28.8" height="8.8" fill="#6a4a32"/><rect x="90.6" y="0.6" width="28.8" height="8.8" fill="#844a32"/><rect x="120.6" y="0.6" width="28.8" height="8.8" fill="#6a4a32"/><rect x="150.6" y="0.6" width="28.8" height="8.8" fill="#7a553a"/><rect x="180.6" y="0.6" width="28.8" height="8.8" fill="#7a553a"/><rect x="210.6" y="0.6" width="28.8" height="8.8" fill="#7a553a"/><rect x="240.6" y="0.6" width="28.8" height="8.8" fill="#744832"/><rect x="270.6" y="0.6" width="28.8" height="8.8" fill="#674330"/><rect x="300.6" y="0.6" width="28.8" height="8.8" fill="#5e4430"/><rect x="330.6" y="0.6" width="28.8" height="8.8" fill="#6a4a32"/><rect x="360.6" y="0.6" width="28.8" height="8.8" fill="#7e5036"/><rect x="-14.4" y="10.6" width="28.8" height="8.8" fill="#6e5238"/><rect x="15.6" y="10.6" width="28.8" height="8.8" fill="#7a553a"/><rect x="45.6" y="10.6" width="28.8" height="8.8" fill="#7a4a33"/><rect x="75.6" y="10.6" width="28.8" height="8.8" fill="#674330"/><rect x="105.6" y="10.6" width="28.8" height="8.8" fill="#674330"/><rect x="135.6" y="10.6" width="28.8" height="8.8" fill="#8a4e35"/><rect x="165.6" y="10.6" width="28.8" height="8.8" fill="#7a4a33"/><rect x="195.6" y="10.6" width="28.8" height="8.8" fill="#7a553a"/><rect x="225.6" y="10.6" width="28.8" height="8.8" fill="#844a32"/><rect x="255.6" y="10.6" width="28.8" height="8.8" fill="#5e4430"/><rect x="285.6" y="10.6" width="28.8" height="8.8" fill="#8a4e35"/><rect x="315.6" y="10.6" width="28.8" height="8.8" fill="#6a4a32"/><rect x="345.6" y="10.6" width="28.8" height="8.8" fill="#6e5238"/><rect x="375.6" y="10.6" width="28.8" height="8.8" fill="#7a553a"/><rect x="-29.4" y="20.6" width="28.8" height="8.8" fill="#5f4a34"/><rect x="0.6" y="20.6" width="28.8" height="8.8" fill="#7a4a33"/><rect x="30.6" y="20.6" width="28.8" height="8.8" fill="#7a4a33"/><rect x="60.6" y="20.6" width="28.8" height="8.8" fill="#7a4a33"/><rect x="90.6" y="20.6" width="28.8" height="8.8" fill="#744832"/><rect x="120.6" y="20.6" width="28.8" height="8.8" fill="#5f4a34"/><rect x="150.6" y="20.6" width="28.8" height="8.8" fill="#7a4a33"/><rect x="180.6" y="20.6" width="28.8" height="8.8" fill="#674330"/><rect x="210.6" y="20.6" width="28.8" height="8.8" fill="#744832"/><rect x="240.6" y="20.6" width="28.8" height="8.8" fill="#5e4430"/><rect x="270.6" y="20.6" width="28.8" height="8.8" fill="#674330"/><rect x="300.6" y="20.6" width="28.8" height="8.8" fill="#7a4a33"/><rect x="330.6" y="20.6" width="28.8" height="8.8" fill="#5f4a34"/><rect x="360.6" y="20.6" width="28.8" height="8.8" fill="#7a4a33"/><rect x="-14.4" y="30.6" width="28.8" height="8.8" fill="#7a4a33"/><rect x="15.6" y="30.6" width="28.8" height="8.8" fill="#5e4430"/><rect x="45.6" y="30.6" width="28.8" height="8.8" fill="#7a553a"/><rect x="75.6" y="30.6" width="28.8" height="8.8" fill="#7a553a"/><rect x="105.6" y="30.6" width="28.8" height="8.8" fill="#5f4a34"/><rect x="135.6" y="30.6" width="28.8" height="8.8" fill="#5e4430"/><rect x="165.6" y="30.6" width="28.8" height="8.8" fill="#6e5238"/><rect x="195.6" y="30.6" width="28.8" height="8.8" fill="#5e4430"/><rect x="225.6" y="30.6" width="28.8" height="8.8" fill="#744832"/><rect x="255.6" y="30.6" width="28.8" height="8.8" fill="#5e4430"/><rect x="285.6" y="30.6" width="28.8" height="8.8" fill="#7a553a"/><rect x="315.6" y="30.6" width="28.8" height="8.8" fill="#844a32"/><rect x="345.6" y="30.6" width="28.8" height="8.8" fill="#7a4a33"/><rect x="375.6" y="30.6" width="28.8" height="8.8" fill="#5e4430"/><rect x="-29.4" y="40.6" width="28.8" height="8.8" fill="#5f4a34"/><rect x="0.6" y="40.6" width="28.8" height="8.8" fill="#674330"/><rect x="30.6" y="40.6" width="28.8" height="8.8" fill="#5f4a34"/><rect x="60.6" y="40.6" width="28.8" height="8.8" fill="#744832"/><rect x="90.6" y="40.6" width="28.8" height="8.8" fill="#6a4a32"/><rect x="120.6" y="40.6" width="28.8" height="8.8" fill="#7e5036"/><rect x="150.6" y="40.6" width="28.8" height="8.8" fill="#744832"/><rect x="180.6" y="40.6" width="28.8" height="8.8" fill="#844a32"/><rect x="210.6" y="40.6" width="28.8" height="8.8" fill="#6a4a32"/><rect x="240.6" y="40.6" width="28.8" height="8.8" fill="#6e5238"/><rect x="270.6" y="40.6" width="28.8" height="8.8" fill="#5f4a34"/><rect x="300.6" y="40.6" width="28.8" height="8.8" fill="#674330"/><rect x="330.6" y="40.6" width="28.8" height="8.8" fill="#5f4a34"/><rect x="360.6" y="40.6" width="28.8" height="8.8" fill="#674330"/><rect x="-14.4" y="50.6" width="28.8" height="8.8" fill="#5e4430"/><rect x="15.6" y="50.6" width="28.8" height="8.8" fill="#744832"/><rect x="45.6" y="50.6" width="28.8" height="8.8" fill="#5e4430"/><rect x="75.6" y="50.6" width="28.8" height="8.8" fill="#844a32"/><rect x="105.6" y="50.6" width="28.8" height="8.8" fill="#844a32"/><rect x="135.6" y="50.6" width="28.8" height="8.8" fill="#8a4e35"/><rect x="165.6" y="50.6" width="28.8" height="8.8" fill="#7a553a"/><rect x="195.6" y="50.6" width="28.8" height="8.8" fill="#5f4a34"/><rect x="225.6" y="50.6" width="28.8" height="8.8" fill="#674330"/><rect x="255.6" y="50.6" width="28.8" height="8.8" fill="#8a4e35"/><rect x="285.6" y="50.6" width="28.8" height="8.8" fill="#7a4a33"/><rect x="315.6" y="50.6" width="28.8" height="8.8" fill="#7a553a"/><rect x="345.6" y="50.6" width="28.8" height="8.8" fill="#5e4430"/><rect x="375.6" y="50.6" width="28.8" height="8.8" fill="#744832"/><rect x="-29.4" y="60.6" width="28.8" height="8.8" fill="#5f4a34"/><rect x="0.6" y="60.6" width="28.8" height="8.8" fill="#674330"/><rect x="30.6" y="60.6" width="28.8" height="8.8" fill="#674330"/><rect x="60.6" y="60.6" width="28.8" height="8.8" fill="#744832"/><rect x="90.6" y="60.6" width="28.8" height="8.8" fill="#7e5036"/><rect x="120.6" y="60.6" width="28.8" height="8.8" fill="#6e5238"/><rect x="150.6" y="60.6" width="28.8" height="8.8" fill="#5f4a34"/><rect x="180.6" y="60.6" width="28.8" height="8.8" fill="#744832"/><rect x="210.6" y="60.6" width="28.8" height="8.8" fill="#6e5238"/><rect x="240.6" y="60.6" width="28.8" height="8.8" fill="#6a4a32"/><rect x="270.6" y="60.6" width="28.8" height="8.8" fill="#7a553a"/><rect x="300.6" y="60.6" width="28.8" height="8.8" fill="#744832"/><rect x="330.6" y="60.6" width="28.8" height="8.8" fill="#5f4a34"/><rect x="360.6" y="60.6" width="28.8" height="8.8" fill="#674330"/><rect x="-14.4" y="70.6" width="28.8" height="8.8" fill="#8a4e35"/><rect x="15.6" y="70.6" width="28.8" height="8.8" fill="#6a4a32"/><rect x="45.6" y="70.6" width="28.8" height="8.8" fill="#7e5036"/><rect x="75.6" y="70.6" width="28.8" height="8.8" fill="#5f4a34"/><rect x="105.6" y="70.6" width="28.8" height="8.8" fill="#674330"/><rect x="135.6" y="70.6" width="28.8" height="8.8" fill="#6e5238"/><rect x="165.6" y="70.6" width="28.8" height="8.8" fill="#7a553a"/><rect x="195.6" y="70.6" width="28.8" height="8.8" fill="#7a4a33"/><rect x="225.6" y="70.6" width="28.8" height="8.8" fill="#7a553a"/><rect x="255.6" y="70.6" width="28.8" height="8.8" fill="#7a4a33"/><rect x="285.6" y="70.6" width="28.8" height="8.8" fill="#844a32"/><rect x="315.6" y="70.6" width="28.8" height="8.8" fill="#8a4e35"/><rect x="345.6" y="70.6" width="28.8" height="8.8" fill="#8a4e35"/><rect x="375.6" y="70.6" width="28.8" height="8.8" fill="#6a4a32"/></pattern></defs><rect width="1080" height="450" fill="url(#bp1)" filter="url(#bfbp1)"/></svg></div></div></div><svg class="abs" style="left:0;top:0" width="1920" height="1040"><g clip-path="url(#vp2)"><defs><clipPath id="vp2"><rect x="73" y="83" width="1845" height="889"/></clipPath></defs><polyline points="151.3,83.2 989.6,344.0 989.6,359.4 858.7,376.4" fill="none" stroke="#1a1a1a" stroke-width="1"/><polyline points="72.0,97.7 989.6,359.4" fill="none" stroke="#1a1a1a" stroke-width="1"/><polyline points="72.0,299.3 686.3,392.8" fill="none" stroke="#1a1a1a" stroke-width="1"/><polyline points="656.0,387.5 793.0,367.0 858.7,376.4" fill="none" stroke="#333" stroke-width="0.8"/><polyline points="905.0,317.7 905.0,335.0" fill="none" stroke="#444" stroke-width="0.9"/><polyline points="939.0,328.3 939.0,344.7" fill="none" stroke="#444" stroke-width="0.9"/><polyline points="422.0,352.6 422.0,582.5" fill="none" stroke="#3a2418" stroke-width="1"/><polyline points="523.0,368.0 523.0,576.8" fill="none" stroke="#3a2418" stroke-width="1"/><polyline points="686.3,392.8 842.5,373.3 858.7,376.4 858.7,574.8" fill="none" stroke="#1a1a1a" stroke-width="1"/><polyline points="686.3,392.8 686.3,567.5" fill="none" stroke="#1a1a1a" stroke-width="0.8"/><polyline points="842.5,373.3 842.5,576.0" fill="none" stroke="#555" stroke-width="0.7"/><polyline points="864.0,409.7 912.0,406.0 912.0,415.0 864.0,419.3 864.0,409.7" fill="none" stroke="#1a1a1a" stroke-width="1"/><polyline points="859.0,419.3 864.0,419.3" fill="none" stroke="#1a1a1a" stroke-width="0.7"/><polyline points="863.0,419.3 863.0,560.0" fill="none" stroke="#555" stroke-width="0.7"/><polyline points="913.3,569.0 913.3,390.4 919.3,390.4 1006.0,408.5 1006.0,562.3" fill="none" stroke="#1a1a1a" stroke-width="1"/><polyline points="919.3,390.4 919.3,569.5" fill="none" stroke="#1a1a1a" stroke-width="0.8"/><polyline points="973.4,400.8 1126.2,386.0 1190.0,406.9 1190.0,416.2 1221.2,426.2" fill="none" stroke="#1a1a1a" stroke-width="1"/><polyline points="1221.2,426.2 1127.5,432.5 1006.0,438.5" fill="none" stroke="#9a9a9a" stroke-width="1"/><polyline points="1006.0,408.0 1126.2,397.5 1190.0,416.2" fill="none" stroke="#1a1a1a" stroke-width="0.8"/><polyline points="1126.2,386.0 1126.2,397.5" fill="none" stroke="#1a1a1a" stroke-width="0.8"/><polyline points="1190.0,406.9 1617.5,375.5 1617.5,387.5 1575.0,453.0 1267.5,463.8 1127.5,432.5" fill="none" stroke="#1a1a1a" stroke-width="1"/><polyline points="1190.0,416.2 1617.5,387.5" fill="none" stroke="#1a1a1a" stroke-width="0.8"/><polyline points="1268.8,466.0 1334.0,467.0 1334.0,462.0" fill="none" stroke="#333" stroke-width="0.8"/><polyline points="1085.0,435.0 1085.0,513.0" fill="none" stroke="#444" stroke-width="0.8"/><polyline points="1091.2,436.2 1091.2,513.0" fill="none" stroke="#333" stroke-width="0.8"/><polyline points="1121.2,442.5 1121.2,513.0" fill="none" stroke="#111" stroke-width="1"/><polyline points="1132.5,461.0 1132.5,513.0" fill="none" stroke="#666" stroke-width="0.8"/><polyline points="1136.8,445.0 1136.8,513.0" fill="none" stroke="#000" stroke-width="1"/><polyline points="1170.6,443.0 1170.6,513.0" fill="none" stroke="#555" stroke-width="0.8"/><polyline points="1175.6,444.0 1175.6,513.0" fill="none" stroke="#444" stroke-width="0.8"/><polyline points="1199.4,450.0 1199.4,513.0" fill="none" stroke="#555" stroke-width="0.8"/><polyline points="1203.8,451.0 1203.8,513.0" fill="none" stroke="#444" stroke-width="0.8"/><polyline points="1225.0,455.0 1225.0,513.0" fill="none" stroke="#555" stroke-width="0.8"/><polyline points="1227.5,455.0 1227.5,513.0" fill="none" stroke="#222" stroke-width="1"/><polyline points="1236.2,470.0 1236.2,513.0" fill="none" stroke="#222" stroke-width="1"/><polyline points="1121.2,445.0 1136.2,445.0" fill="none" stroke="#333" stroke-width="0.8"/><polyline points="1137.5,444.4 1170.6,443.1" fill="none" stroke="#333" stroke-width="0.8"/><polyline points="1175.6,450.0 1199.4,450.0" fill="none" stroke="#333" stroke-width="0.8"/><polyline points="1203.8,455.0 1225.0,455.0" fill="none" stroke="#333" stroke-width="0.8"/><polyline points="1227.5,478.8 1236.2,478.8" fill="none" stroke="#222" stroke-width="1"/><polyline points="1006.0,511.8 1129.7,511.8 1222.2,513.5" fill="none" stroke="#1a1a1a" stroke-width="0.8"/><polyline points="1129.7,511.8 1129.7,567.0" fill="none" stroke="#444" stroke-width="0.6"/><polyline points="1268.8,476.2 1575.0,468.8 1575.0,546.2" fill="none" stroke="#1a1a1a" stroke-width="0.8"/><polyline points="1241.2,457.5 1267.5,463.8 1267.5,543.8" fill="none" stroke="#1a1a1a" stroke-width="0.8"/><polyline points="1241.2,457.5 1241.2,544.0" fill="none" stroke="#1a1a1a" stroke-width="0.7"/><polyline points="72.0,602.5 686.3,567.5" fill="none" stroke="#1d140f" stroke-width="1.2"/><polyline points="686.3,567.5 842.5,576.0 1006.0,562.3" fill="none" stroke="#1d140f" stroke-width="1"/><polyline points="1006.0,562.3 1129.7,567.0 1222.2,553.9" fill="none" stroke="#1d140f" stroke-width="1"/><polyline points="1225.0,548.0 1268.8,542.5 1575.0,546.2 1605.0,549.0" fill="none" stroke="#1d140f" stroke-width="1"/><polyline points="1572.0,546.5 1660.0,596.0 1920.0,742.0" fill="none" stroke="#1a100a" stroke-width="2.6"/><polyline points="1621.7,592.0 1660.0,620.0" fill="none" stroke="#1d140f" stroke-width="1.2"/><polygon points="1502.5,551.2 1575.0,548.8 1637.5,590.0 1461.2,583.8" fill="none" stroke="#2a1712" stroke-width="1"/><polyline points="1461.2,584.5 1637.5,591.0" fill="none" stroke="#b77c6c" stroke-width="1.2"/><polyline points="1453.0,600.0 1516.0,604.0" fill="none" stroke="#2a1a12" stroke-width="1.5"/><polyline points="1470.0,602.0 1500.0,603.0" fill="none" stroke="#c08878" stroke-width="1.5"/><polyline points="1476.5,310.0 1479.5,319.0" fill="none" stroke="#222" stroke-width="1.2"/><polyline points="72.0,618.8 705.0,580.0" fill="none" stroke="#1e1410" stroke-width="1.1"/><polyline points="72.0,625.0 745.0,582.5" fill="none" stroke="#1e1410" stroke-width="1.1"/><polyline points="72.0,632.5 640.0,590.0 745.0,582.5 880.0,590.0 1070.0,600.0 1289.5,562.0 1330.0,556.0" fill="none" stroke="#1e1410" stroke-width="1.1"/><polyline points="72.0,676.0 640.0,615.0 880.0,590.0 1105.0,565.0 1187.0,559.0 1479.0,565.6" fill="none" stroke="#1e1410" stroke-width="1.3"/><polyline points="72.0,670.0 200.0,661.0 300.0,655.0" fill="none" stroke="#1e1410" stroke-width="1"/><polyline points="1222.0,556.0 1566.0,547.5" fill="none" stroke="#1e1410" stroke-width="1"/><polyline points="1230.0,571.0 1270.0,572.0" fill="none" stroke="#2a1a12" stroke-width="1.5"/><polyline points="1065.8,972.0 1115.9,927.4 1191.8,950.0 1279.0,972.0" fill="none" stroke="#140c08" stroke-width="1"/><polygon points="1174,972 1191.8,950 1279,972 1268,972 1193,956 1182,972" fill="#d39a80"/></g></svg><div class="abs" style="left:72px;top:81px;width:1848px;height:2px;background:#7a7a7a"></div><div class="abs" style="left:72px;top:81px;width:1px;height:892px;background:#6a6a6a"></div><div class="abs" style="left:0px;top:0px;width:1920px;height:41px;background:#ffffff;"></div><svg class="abs" style="left:3px;top:3px" width="16" height="16"><path d="M2,4 L9,1 L15,4 L14,12 L7,15 L1,12Z" fill="#d8202a"/><path d="M5,6 L10,5 L9,8 L6,9 L9,10 L8,12" fill="none" stroke="#fff" stroke-width="1.3"/></svg><svg class="abs" style="left:1790px;top:0" width="130" height="22"><path d="M9.5,10.5 H19.5" stroke="#000" stroke-width="1"/><rect x="54.5" y="7.5" width="8" height="8" fill="none" stroke="#000"/><path d="M56.5,7.5 V5.5 H64.5 V13.5 H62.5" fill="none" stroke="#000"/><path d="M100,5 L110,15 M110,5 L100,15" stroke="#000" stroke-width="1"/></svg><div class="abs" style="left:0px;top:41px;width:1920px;height:40px;background:#f0f0f0;"></div><div class="abs" style="left:0px;top:80px;width:72px;height:1px;background:#c8c8c8;"></div><svg class="abs" style="left:0;top:0;z-index:5" width="1920" height="1040"><text x="23.0" y="15.6" font-size="11.8" font-family="Liberation Sans" font-weight="normal" fill="#000" text-anchor="start" textLength="127.0" lengthAdjust="spacingAndGlyphs">skp - SketchUp Pro 2017</text><text x="7.5" y="36.9" font-size="12.0" font-family="Liberation Sans" font-weight="normal" fill="#000" text-anchor="start" textLength="17.5" lengthAdjust="spacingAndGlyphs">File</text><text x="39.2" y="36.9" font-size="12.0" font-family="Liberation Sans" font-weight="normal" fill="#000" text-anchor="start" textLength="19.5" lengthAdjust="spacingAndGlyphs">Edit</text><text x="73.0" y="36.9" font-size="12.0" font-family="Liberation Sans" font-weight="normal" fill="#000" text-anchor="start" textLength="25.0" lengthAdjust="spacingAndGlyphs">View</text><text x="112.5" y="36.9" font-size="12.0" font-family="Liberation Sans" font-weight="normal" fill="#000" text-anchor="start" textLength="40.0" lengthAdjust="spacingAndGlyphs">Camera</text><text x="167.0" y="36.9" font-size="12.0" font-family="Liberation Sans" font-weight="normal" fill="#000" text-anchor="start" textLength="27.2" lengthAdjust="spacingAndGlyphs">Draw</text><text x="208.8" y="36.9" font-size="12.0" font-family="Liberation Sans" font-weight="normal" fill="#000" text-anchor="start" textLength="26.2" lengthAdjust="spacingAndGlyphs">Tools</text><text x="249.2" y="36.9" font-size="12.0" font-family="Liberation Sans" font-weight="normal" fill="#000" text-anchor="start" textLength="43.8" lengthAdjust="spacingAndGlyphs">Window</text><text x="307.0" y="36.9" font-size="12.0" font-family="Liberation Sans" font-weight="normal" fill="#000" text-anchor="start" textLength="56.0" lengthAdjust="spacingAndGlyphs">Extensions</text><text x="377.0" y="36.9" font-size="12.0" font-family="Liberation Sans" font-weight="normal" fill="#000" text-anchor="start" textLength="24.8" lengthAdjust="spacingAndGlyphs">Help</text><path d="M5.0,46 V77" stroke="#a8a8a8" stroke-width="1.5" stroke-dasharray="1.5,2.5"/><g transform="translate(28.0,62.0) scale(1)"><path d="M-11,-4 L-1,-11 L9,-3 L-1,4Z" fill="#fff" stroke="#111" stroke-width="1.6"/><path d="M-11,-4 L-8,6 L2,11 L12,5 L9,-3 L-1,4Z" fill="#222" stroke="#111" stroke-width="1"/><path d="M-11,-4 L-1,4 L9,-3" fill="none" stroke="#fff" stroke-width="0.6"/></g><defs><linearGradient id="mg" x1="0" x2="1"><stop offset="0" stop-color="#fffbe8"/><stop offset="0.3" stop-color="#f8c830"/><stop offset="0.45" stop-color="#f48a10"/><stop offset="0.72" stop-color="#ee1010"/><stop offset="0.83" stop-color="#f04058"/><stop offset="0.85" stop-color="#f8c0c8"/><stop offset="1" stop-color="#fce8ea"/></linearGradient><linearGradient id="tg" x1="0" x2="1"><stop offset="0" stop-color="#ffffff"/><stop offset="0.35" stop-color="#b0c4e0"/><stop offset="0.68" stop-color="#5868f0"/><stop offset="0.72" stop-color="#4848c8"/><stop offset="1" stop-color="#0c0c28"/></linearGradient></defs><rect x="50.5" y="55.5" width="145" height="6" fill="url(#mg)"/><path d="M50.5,61 V54.5 H195.5" fill="none" stroke="#888" stroke-width="1"/><rect x="172" y="53" width="4" height="10" fill="#fff" stroke="#bbb" stroke-width="0.5"/><path d="M176,53 V63" stroke="#555"/><text x="55.3" y="72" font-size="9.5" font-weight="bold" font-family="Liberation Sans" text-anchor="middle" fill="#111">J</text><text x="67.4" y="72" font-size="9.5" font-weight="bold" font-family="Liberation Sans" text-anchor="middle" fill="#111">F</text><text x="79.5" y="72" font-size="9.5" font-weight="bold" font-family="Liberation Sans" text-anchor="middle" fill="#111">M</text><text x="91.6" y="72" font-size="9.5" font-weight="bold" font-family="Liberation Sans" text-anchor="middle" fill="#111">A</text><text x="103.7" y="72" font-size="9.5" font-weight="bold" font-family="Liberation Sans" text-anchor="middle" fill="#111">M</text><text x="115.8" y="72" font-size="9.5" font-weight="bold" font-family="Liberation Sans" text-anchor="middle" fill="#111">J</text><text x="127.9" y="72" font-size="9.5" font-weight="bold" font-family="Liberation Sans" text-anchor="middle" fill="#111">J</text><text x="140.0" y="72" font-size="9.5" font-weight="bold" font-family="Liberation Sans" text-anchor="middle" fill="#111">A</text><text x="152.1" y="72" font-size="9.5" font-weight="bold" font-family="Liberation Sans" text-anchor="middle" fill="#111">S</text><text x="164.2" y="72" font-size="9.5" font-weight="bold" font-family="Liberation Sans" text-anchor="middle" fill="#111">O</text><text x="176.3" y="72" font-size="9.5" font-weight="bold" font-family="Liberation Sans" text-anchor="middle" fill="#111">N</text><text x="188.4" y="72" font-size="9.5" font-weight="bold" font-family="Liberation Sans" text-anchor="middle" fill="#111">D</text><rect x="211.5" y="54.5" width="145" height="6.5" fill="url(#tg)"/><path d="M211.5,61 V54.5 H356.5" fill="none" stroke="#888" stroke-width="1"/><rect x="308.5" y="53" width="4" height="12" fill="#fff" stroke="#aaa" stroke-width="0.6"/><text x="211" y="72" font-size="9" font-weight="bold" font-family="Liberation Sans" fill="#111">06:43 AM</text><text x="273" y="72" font-size="9" font-weight="bold" font-family="Liberation Sans" fill="#111">Noon</text><text x="319" y="72" font-size="9" font-weight="bold" font-family="Liberation Sans" fill="#111">04:45 PM</text><path d="M367.9,43 V80" stroke="#a0a0a0" stroke-width="1"/><path d="M373.0,46 V77" stroke="#a8a8a8" stroke-width="1.5" stroke-dasharray="1.5,2.5"/><g transform="translate(395.0,62.0) scale(1)"><path d="M-4,-8 L-4,6 L-1,3 L2,9 L4,8 L1,2 L5,2 Z" fill="#000"/></g><path d="M414.5,46 V77" stroke="#a0a0a0" stroke-width="1"/><g transform="translate(436.0,62.0) scale(1)"><path d="M-10,3 L1,-8 L11,-5 L1,7 L-9,6 Z" fill="#f2a0b8" stroke="#3a2a30" stroke-width="1.2"/><path d="M-10,3 L0,4 L11,-5 M0,4 L1,7" fill="none" stroke="#3a2a30" stroke-width="1"/><path d="M-10,3 L0,4 L1,7 L-9,6Z" fill="#e47a98"/></g><g transform="translate(474.0,62.0) scale(1)"><path d="M-9,10 L-7,4 L6,-9 L9,-6 L-4,7 Z" fill="#c8202a" stroke="#2a1a1a" stroke-width="1"/><path d="M-9,10 L-7,4 L-4,7Z" fill="#222"/></g><g transform="translate(499.0,62.0) scale(1)"><path d="M-5,-3 L5,-3 L0,3Z" fill="#111"/></g><g transform="translate(529.5,62.0) scale(1)"><path d="M-8,8 C-10,-4 4,-11 9,-4" fill="none" stroke="#222" stroke-width="1.5"/><path d="M-8,8 L0,-8 L9,-4" fill="none" stroke="#e0203a" stroke-width="1.2"/><circle cx="-8" cy="8" r="1.8" fill="#e0203a"/><circle cx="0" cy="-8" r="1.8" fill="#e0203a"/><circle cx="9" cy="-4" r="1.8" fill="#e0203a"/></g><g transform="translate(555.0,62.0) scale(1)"><path d="M-5,-3 L5,-3 L0,3Z" fill="#111"/></g><g transform="translate(584.5,62.0) scale(1)"><rect x="-8" y="-9" width="16" height="18" fill="#a9a48e" stroke="#333" stroke-width="1"/><path d="M-8,9 L8,-9" stroke="#e0203a" stroke-width="1.5"/><circle cx="-8" cy="9" r="1.8" fill="#e0203a"/><circle cx="8" cy="-9" r="1.8" fill="#e0203a"/></g><g transform="translate(611.0,62.0) scale(1)"><path d="M-5,-3 L5,-3 L0,3Z" fill="#111"/></g><path d="M624.5,46 V77" stroke="#a0a0a0" stroke-width="1"/><g transform="translate(647.0,62.0) scale(1)"><path d="M-11,4 L0,-1 L11,4 L0,9Z" fill="#a9a48e" stroke="#333" stroke-width="1"/><path d="M-11,4 L-11,6 L0,11 L11,6 L11,4" fill="#555" stroke="#333" stroke-width="0.8"/><path d="M-2,4 L-2,-4 L-5,-4 L0,-10 L5,-4 L2,-4 L2,4Z" fill="#e0203a" stroke="#7a1018" stroke-width="0.6"/></g><g transform="translate(681.0,62.0) scale(1)"><path d="M-9,4 C-8,-6 4,-10 9,-4" fill="none" stroke="#e0203a" stroke-width="1.5"/><path d="M-4,6 C-3,-2 4,-4 6,-1" fill="none" stroke="#222" stroke-width="1.5"/><path d="M-2,2 L5,-7 L2,-8 L10,-10 L8,-2 L6,-5 L0,4Z" fill="#e0203a" stroke="#7a1018" stroke-width="0.6"/><path d="M9,-2 C11,5 6,10 1,10" fill="none" stroke="#e0203a" stroke-width="1.5"/></g><g transform="translate(715.0,62.0) scale(1)"><path d="M0,-10 L4,-5 L1.5,-5 L1.5,-1.5 L5,-1.5 L5,-4 L10,0 L5,4 L5,1.5 L1.5,1.5 L1.5,5 L4,5 L0,10 L-4,5 L-1.5,5 L-1.5,1.5 L-5,1.5 L-5,4 L-10,0 L-5,-4 L-5,-1.5 L-1.5,-1.5 L-1.5,-5 L-4,-5Z" fill="#e0203a" stroke="#7a1018" stroke-width="0.6"/></g><g transform="translate(748.8,62.0) scale(1)"><path d="M-8,-1 C-8,-8 4,-10 7,-4 L9,-6 L9,1 L2,1 L5,-2 C2,-6 -4,-5 -4,-1Z" fill="#e0203a" stroke="#8a1018" stroke-width="0.5"/><path d="M8,1 C8,8 -4,10 -7,4 L-9,6 L-9,-1 L-2,-1 L-5,2 C-2,6 4,5 4,1Z" fill="#e0203a" stroke="#8a1018" stroke-width="0.5"/></g><g transform="translate(783.0,62.0) scale(1)"><rect x="-10" y="-8" width="17" height="17" fill="none" stroke="#e0203a" stroke-width="1"/><rect x="-10" y="-3" width="12" height="12" fill="#a9a48e" stroke="#333" stroke-width="1"/><path d="M-1,4 L6,-4 L3,-6 L10,-9 L8,-2 L6,-4 L1,6Z" fill="#e0203a" stroke="#7a1018" stroke-width="0.6"/></g><path d="M802.5,46 V77" stroke="#a0a0a0" stroke-width="1"/><g transform="translate(824.5,62.0) scale(1)"><path d="M-10,8 L-4,3" stroke="#222" stroke-width="3"/><path d="M-6,2 L4,-8 L10,-3 L0,7Z" fill="#f0d820" stroke="#222" stroke-width="1.3"/><circle cx="3" cy="-2" r="3" fill="#f8f060" stroke="#333" stroke-width="0.8"/><path d="M-11,9 L-8,9" stroke="#222" stroke-width="2"/></g><g transform="translate(860.0,62.0) scale(1)"><rect x="-2" y="-10" width="12" height="11" fill="#fff" stroke="#333" stroke-width="1"/><text x="-0.5" y="-1.5" font-size="8" font-family="Liberation Serif" fill="#111">A1</text><path d="M-7,-4 L-7,9 M-9,6 L-7,10 L-5,6" fill="none" stroke="#222" stroke-width="1.2"/><path d="M-7,-4 L-2,-4" stroke="#222" stroke-width="1"/></g><g transform="translate(891.0,62.0) scale(1)"><path d="M-3,-8 C3,-11 9,-8 9,-3 L8,6 C6,10 -4,10 -6,6 L-7,-3Z" fill="#a8a890" stroke="#333" stroke-width="1.3"/><path d="M-4,-7 C-10,-7 -12,2 -10,8 C-7,6 -3,2 0,-1Z" fill="#f0b000" stroke="#333" stroke-width="1"/><path d="M4,-6 C9,-9 12,-4 8,-1" fill="none" stroke="#333" stroke-width="1.3"/><path d="M-2,0 L7,3" stroke="#333" stroke-width="1"/></g><path d="M912.5,46 V77" stroke="#a0a0a0" stroke-width="1"/><g transform="translate(935.0,62.0) scale(1)"><path d="M-10,0 C-10,-5 -4,-7 0,-7 L0,7 C-5,7 -10,5 -10,0Z" fill="#c01828" stroke="#501010" stroke-width="0.8"/><path d="M10,0 C10,-5 4,-7 0,-7 L0,7 C5,7 10,5 10,0Z" fill="#40a050" stroke="#104010" stroke-width="0.8"/><path d="M0,-11 L0,11" stroke="#111" stroke-width="2"/><path d="M-2,-3 L4,-3 L1,-7Z" fill="#fff"/></g><rect x="952.5" y="45.5" width="33" height="32" fill="#cce4f7" stroke="#99c9ef" stroke-width="1"/><g transform="translate(969.0,62.0) scale(1)"><path d="M-8,2 C-10,-1 -9,-4 -6,-2 L-4,0 L-7,-8 C-8,-10 -5,-11 -4,-9 L-1,-3 L-2,-10 C-2,-12 1,-12 1,-10 L2,-3 L4,-9 C4,-11 7,-11 7,-9 L5,-2 L8,-6 C9,-8 11,-7 10,-5 L6,5 C4,9 0,10 -3,9Z" fill="#f5deb3" stroke="#8a7050" stroke-width="1"/></g><g transform="translate(1002.5,62.0) scale(1)"><circle cx="3" cy="-3" r="7" fill="#a8c8e8" stroke="#222" stroke-width="2"/><path d="M-2,2 L-10,10" stroke="#222" stroke-width="3.5" stroke-linecap="round"/></g><g transform="translate(1037.5,62.0) scale(1)"><circle cx="1" cy="-1" r="6" fill="#a8c8e8" stroke="#222" stroke-width="2"/><path d="M-3,3 L-7,8" stroke="#222" stroke-width="3"/><path d="M-11,-11 L-6,-10 L-10,-6Z M11,-11 L10,-6 L6,-10Z M11,11 L6,10 L10,6Z" fill="#e0203a"/><path d="M-10,-10 L-6,-6 M10,-10 L6,-6 M10,10 L6,6" stroke="#e0203a" stroke-width="1.5"/></g><path d="M1057.0,46 V77" stroke="#a0a0a0" stroke-width="1"/><g transform="translate(1077.5,62.0) scale(1)"><path d="M-10,-4 L2,-10 L10,-5 L10,6 L-2,11 L-10,5Z" fill="#c0202a" stroke="#401010" stroke-width="1"/><path d="M-6,-3 L5,-7 L6,4 L-5,7Z" fill="#e84a50"/><path d="M-3,-2 L3,-4 L3,2 L-1,3 L0,-1" fill="none" stroke="#fff" stroke-width="1.2"/><path d="M-10,-4 L-10,5 L-13,3 L-13,-6Z" fill="#777"/></g><g transform="translate(1112.5,62.0) scale(1)"><path d="M-12,-3 L0,-9 L9,-4 L9,6 L-3,11 L-12,5Z" fill="#888" stroke="#333" stroke-width="1"/><path d="M-8,-5 L3,-10 L10,-6 L6,2 L-4,6Z" fill="#c0202a" stroke="#401010" stroke-width="0.8"/><circle cx="5" cy="6" r="5" fill="#f0c020" stroke="#333" stroke-width="1"/></g><g transform="translate(1147.5,62.0) scale(1)"><rect x="-10" y="-10" width="17" height="19" fill="#fff" stroke="#e0203a" stroke-width="1.5"/><path d="M-10,-6 L7,-6" stroke="#e0203a" stroke-width="2"/><circle cx="-3" cy="2" r="3" fill="none" stroke="#e0203a" stroke-width="1"/><path d="M-2,5 L5,5 L5,2 L11,7 L5,12 L5,9 L-2,9Z" fill="#2080e0" stroke="#103060" stroke-width="0.6"/></g><path d="M1167.0,46 V77" stroke="#a0a0a0" stroke-width="1"/><g transform="translate(1188.8,62.0) scale(1)"><path d="M-10,-3 L-5,-9 L6,-9 L11,-3 L0,10Z" fill="#c0101a" stroke="#500808" stroke-width="1"/><path d="M-10,-3 L11,-3 M-5,-9 L-2,-3 L0,10 M6,-9 L3,-3 L0,10" fill="none" stroke="#e04048" stroke-width="0.8"/><circle cx="7" cy="7" r="3" fill="#c06070" stroke="#603030" stroke-width="1"/></g><path d="M1207.5,43 V80" stroke="#a0a0a0" stroke-width="1"/><path d="M1212.5,46 V77" stroke="#a8a8a8" stroke-width="1.5" stroke-dasharray="1.5,2.5"/><rect x="1221" y="53" width="144" height="21" fill="#fff"/><rect x="1351.5" y="54.5" width="13" height="19" fill="#e6e6e6" stroke="#b0b0b0"/><path d="M1355,62 L1358,65 L1361,62" fill="none" stroke="#555" stroke-width="1"/><path d="M1228,63 L1231,66 L1236,59" fill="none" stroke="#111" stroke-width="1.3"/><text x="1245.0" y="67.5" font-size="12.0" font-family="Liberation Sans" font-weight="normal" fill="#111" text-anchor="start" textLength="32.0" lengthAdjust="spacingAndGlyphs">Layer0</text><path d="M1369.3,43 V80" stroke="#a0a0a0" stroke-width="1"/><path d="M1374.7,46 V77" stroke="#a8a8a8" stroke-width="1.5" stroke-dasharray="1.5,2.5"/><g transform="translate(1397.4,62.0) scale(1)"><path d="M-10,-1 L-3,-8 L9,-5 L11,1 L0,0Z" fill="#9a9680" stroke="#222" stroke-width="1"/><path d="M-8,0 L-8,8 L0,10 L9,6 L9,0 L0,1Z" fill="#fff" stroke="#222" stroke-width="1"/><rect x="2" y="-11" width="3" height="5" fill="#fff" stroke="#222" stroke-width="1"/><rect x="-6" y="4" width="3" height="5" fill="#555"/></g><g transform="translate(1430.6,62.0) scale(1)"><path d="M-8,-10 L4,-10 L8,-7 L8,10 L-4,10 L-8,7Z" fill="#a9a690" stroke="#333" stroke-width="1"/><path d="M-1,-10 L-1,10" stroke="#555" stroke-width="1"/><rect x="2" y="-8" width="4" height="6" fill="#fff" stroke="#222" stroke-width="1"/></g><g transform="translate(1464.5,63.0) scale(1)"><path d="M-10,-1 L0,-9 L10,-1 M-8,-2 L-8,9 L8,9 L8,-2" fill="none" stroke="#111" stroke-width="2.2"/><rect x="-2" y="2" width="4" height="7" fill="#111"/><rect x="5" y="-8" width="2" height="4" fill="#111"/></g><g transform="translate(1498.6,62.0) scale(1)"><path d="M-11,-2 L-8,-7 L8,-7 L11,-2Z" fill="#9a9680" stroke="#111" stroke-width="1.3"/><rect x="-9" y="-2" width="18" height="11" fill="#fff" stroke="#111" stroke-width="1.5"/><rect x="1" y="-11" width="5" height="6" fill="#fff" stroke="#111" stroke-width="1.2"/></g><g transform="translate(1532.7,63.0) scale(1)"><path d="M-10,-1 L0,-9 L10,-1 M-8,-2 L-8,9 L8,9 L8,-2" fill="none" stroke="#111" stroke-width="2.2"/><rect x="-7" y="-9" width="2" height="4" fill="#111"/></g><g transform="translate(1567.2,62.0) scale(1)"><path d="M-11,-2 L-8,-7 L8,-7 L11,-2Z" fill="#9a9680" stroke="#111" stroke-width="1.3"/><rect x="-9" y="-2" width="18" height="11" fill="#fff" stroke="#111" stroke-width="1.5"/><rect x="-6" y="-9" width="4" height="3" fill="#fff" stroke="#111" stroke-width="1"/></g><path d="M1585.3,43 V80" stroke="#a0a0a0" stroke-width="1"/><rect x="0" y="81" width="71" height="662" fill="#f0f0f0"/><path d="M70.5,81 V743 H0" fill="none" stroke="#d0d0d0" stroke-width="1"/><path d="M4,86.5 H68" stroke="#a8a8a8" stroke-width="1.5" stroke-dasharray="1.5,2.5"/><rect x="36.5" y="564.5" width="33" height="33" fill="#cce4f7" stroke="#99c9ef" stroke-width="1"/><g transform="translate(19.0,108.8) scale(0.95)"><path d="M-4,-8 L-4,6 L-1,3 L2,9 L4,8 L1,2 L5,2 Z" fill="#000"/></g><g transform="translate(54.0,108.8) scale(0.95)"><path d="M-8,-5 L2,-9 L10,-5 L10,5 L0,10 L-8,5Z" fill="none" stroke="#999" stroke-width="1.3"/><path d="M-8,-5 L0,-1 L10,-5 M0,-1 L0,10 M-4,-3 L-4,6 M5,-3 L5,6 M-3,-7 L6,-3" fill="none" stroke="#aaa" stroke-width="1"/></g><g transform="translate(19.0,141.4) scale(0.95)"><path d="M-3,-8 C3,-11 9,-8 9,-3 L8,6 C6,10 -4,10 -6,6 L-7,-3Z" fill="#a8a890" stroke="#333" stroke-width="1.3"/><path d="M-4,-7 C-10,-7 -12,2 -10,8 C-7,6 -3,2 0,-1Z" fill="#f0b000" stroke="#333" stroke-width="1"/><path d="M4,-6 C9,-9 12,-4 8,-1" fill="none" stroke="#333" stroke-width="1.3"/><path d="M-2,0 L7,3" stroke="#333" stroke-width="1"/></g><g transform="translate(54.0,141.4) scale(0.95)"><path d="M-10,3 L1,-8 L11,-5 L1,7 L-9,6 Z" fill="#f2a0b8" stroke="#3a2a30" stroke-width="1.2"/><path d="M-10,3 L0,4 L11,-5 M0,4 L1,7" fill="none" stroke="#3a2a30" stroke-width="1"/><path d="M-10,3 L0,4 L1,7 L-9,6Z" fill="#e47a98"/></g><g transform="translate(19.0,183.7) scale(0.95)"><path d="M-9,10 L-7,4 L6,-9 L9,-6 L-4,7 Z" fill="#c8202a" stroke="#2a1a1a" stroke-width="1"/><path d="M-9,10 L-7,4 L-4,7Z" fill="#222"/></g><g transform="translate(54.0,183.7) scale(0.95)"><path d="M-8,9 C-12,2 -2,0 -4,-5 C-6,-10 4,-10 3,-3 C2,3 9,4 9,-2 L8,-9" fill="none" stroke="#b01c30" stroke-width="2"/><circle cx="-8" cy="9" r="2" fill="#c01c30"/><circle cx="8" cy="-9" r="2" fill="#c01c30"/></g><g transform="translate(19.0,217.5) scale(0.95)"><rect x="-8" y="-9" width="16" height="18" fill="#a9a48e" stroke="#333" stroke-width="1"/><path d="M-8,9 L8,-9" stroke="#e0203a" stroke-width="1.5"/><circle cx="-8" cy="9" r="1.8" fill="#e0203a"/><circle cx="8" cy="-9" r="1.8" fill="#e0203a"/></g><g transform="translate(54.0,217.5) scale(0.95)"><path d="M-8,-9 L8,-9 L8,9 L-8,9Z" fill="#a9a48e" stroke="#e0203a" stroke-width="1.2"/><path d="M-8,-5 C0,-5 5,0 5,9" fill="none" stroke="#fff" stroke-width="1.2"/><circle cx="-8" cy="-9" r="1.8" fill="#e0203a"/><circle cx="-8" cy="9" r="1.8" fill="#e0203a"/><circle cx="8" cy="9" r="1.8" fill="#e0203a"/></g><g transform="translate(19.0,251.4) scale(0.95)"><circle r="9" fill="#a9a48e" stroke="#444" stroke-width="1"/><path d="M0,0 L6,-7" stroke="#e0203a" stroke-width="1.5"/><circle r="1.8" fill="#e0203a"/></g><g transform="translate(54.0,251.4) scale(0.95)"><path d="M0,-9 L8,-3 L6,7 L-6,7 L-8,-3Z" fill="#a9a48e" stroke="#e0203a" stroke-width="1"/><circle r="9" fill="none" stroke="#e0203a" stroke-width="1"/><path d="M0,0 L6,-7" stroke="#e0203a" stroke-width="1.5"/><circle r="1.8" fill="#e0203a"/></g><g transform="translate(19.0,286.0) scale(0.95)"><path d="M-8,8 C-9,-6 2,-9 8,-8" fill="none" stroke="#222" stroke-width="1.5"/><path d="M-8,8 L8,-8" stroke="#e0203a" stroke-width="1.3"/><circle cx="-8" cy="8" r="1.8" fill="#e0203a"/><circle cx="8" cy="-8" r="1.8" fill="#e0203a"/></g><g transform="translate(54.0,286.0) scale(0.95)"><path d="M-8,8 C-10,-4 4,-11 9,-4" fill="none" stroke="#222" stroke-width="1.5"/><path d="M-8,8 L0,-8 L9,-4" fill="none" stroke="#e0203a" stroke-width="1.2"/><circle cx="-8" cy="8" r="1.8" fill="#e0203a"/><circle cx="0" cy="-8" r="1.8" fill="#e0203a"/><circle cx="9" cy="-4" r="1.8" fill="#e0203a"/></g><g transform="translate(19.0,319.0) scale(0.95)"><path d="M-6,-8 C-12,0 -4,10 4,9 C10,8 11,0 8,-4" fill="none" stroke="#222" stroke-width="1.5"/><path d="M-6,-8 L0,8 L8,-4" fill="none" stroke="#e0203a" stroke-width="1.2"/><circle cx="-6" cy="-8" r="1.8" fill="#e0203a"/></g><g transform="translate(54.0,319.0) scale(0.95)"><path d="M-8,-8 L8,-8 C8,2 2,8 -8,8Z" fill="#a9a48e" stroke="#333" stroke-width="1"/><path d="M-8,8 L8,-8" stroke="#e0203a" stroke-width="1.3"/><circle cx="-8" cy="-8" r="1.8" fill="#e0203a"/><circle cx="8" cy="-8" r="1.8" fill="#e0203a"/></g><g transform="translate(19.0,361.7) scale(0.95)"><path d="M0,-10 L4,-5 L1.5,-5 L1.5,-1.5 L5,-1.5 L5,-4 L10,0 L5,4 L5,1.5 L1.5,1.5 L1.5,5 L4,5 L0,10 L-4,5 L-1.5,5 L-1.5,1.5 L-5,1.5 L-5,4 L-10,0 L-5,-4 L-5,-1.5 L-1.5,-1.5 L-1.5,-5 L-4,-5Z" fill="#e0203a" stroke="#7a1018" stroke-width="0.6"/></g><g transform="translate(54.0,361.7) scale(0.95)"><path d="M-11,4 L0,-1 L11,4 L0,9Z" fill="#a9a48e" stroke="#333" stroke-width="1"/><path d="M-11,4 L-11,6 L0,11 L11,6 L11,4" fill="#555" stroke="#333" stroke-width="0.8"/><path d="M-2,4 L-2,-4 L-5,-4 L0,-10 L5,-4 L2,-4 L2,4Z" fill="#e0203a" stroke="#7a1018" stroke-width="0.6"/></g><g transform="translate(19.0,393.5) scale(0.95)"><path d="M-8,-1 C-8,-8 4,-10 7,-4 L9,-6 L9,1 L2,1 L5,-2 C2,-6 -4,-5 -4,-1Z" fill="#e0203a" stroke="#8a1018" stroke-width="0.5"/><path d="M8,1 C8,8 -4,10 -7,4 L-9,6 L-9,-1 L-2,-1 L-5,2 C-2,6 4,5 4,1Z" fill="#e0203a" stroke="#8a1018" stroke-width="0.5"/></g><g transform="translate(54.0,393.5) scale(0.95)"><path d="M-10,2 C-9,-8 6,-9 8,0 L5,1 L6,-2 C4,-6 -4,-6 -5,1Z" fill="#333"/><path d="M-10,2 C-8,10 6,10 9,3 L3,4 L2,1 L-4,2Z" fill="#e0203a" stroke="#601018" stroke-width="0.6"/><path d="M-4,-2 L4,-6 L9,-1 L2,3Z" fill="#c01828"/></g><g transform="translate(19.0,429.5) scale(0.95)"><rect x="-10" y="-8" width="17" height="17" fill="none" stroke="#e0203a" stroke-width="1"/><rect x="-10" y="-3" width="12" height="12" fill="#a9a48e" stroke="#333" stroke-width="1"/><path d="M-1,4 L6,-4 L3,-6 L10,-9 L8,-2 L6,-4 L1,6Z" fill="#e0203a" stroke="#7a1018" stroke-width="0.6"/></g><g transform="translate(54.0,429.5) scale(0.95)"><path d="M-9,7 C-10,-6 2,-10 9,-7" fill="none" stroke="#e0203a" stroke-width="1.5"/><path d="M-5,8 C-6,-2 2,-5 7,-3" fill="none" stroke="#222" stroke-width="1.5"/><path d="M-2,4 L5,-3 L2,-5 L10,-8 L8,0 L6,-2 L0,6Z" fill="#e0203a"/></g><g transform="translate(19.0,471.5) scale(0.95)"><path d="M-10,8 L-4,3" stroke="#222" stroke-width="3"/><path d="M-6,2 L4,-8 L10,-3 L0,7Z" fill="#f0d820" stroke="#222" stroke-width="1.3"/><circle cx="3" cy="-2" r="3" fill="#f8f060" stroke="#333" stroke-width="0.8"/><path d="M-11,9 L-8,9" stroke="#222" stroke-width="2"/></g><g transform="translate(54.0,471.5) scale(0.95)"><path d="M-8,-8 L8,8 M-3,-9 L-9,-3 M9,3 L3,9" stroke="#222" stroke-width="1.2"/><path d="M-6,-2 L2,6" stroke="#222" stroke-width="1"/><text x="-4" y="-2" font-size="8" font-family="Liberation Sans" fill="#222">5</text><circle cx="-8" cy="-8" r="1.5" fill="#3a3"/><circle cx="8" cy="8" r="1.5" fill="#3a3"/></g><g transform="translate(19.0,503.7) scale(0.95)"><path d="M-10,8 C-10,-4 0,-10 9,-9 L9,-6 L-6,8Z" fill="#f0d020" stroke="#333" stroke-width="1.2"/><path d="M-7,5 C-6,-3 0,-6 6,-6" fill="none" stroke="#333" stroke-width="0.8"/></g><g transform="translate(54.0,503.7) scale(0.95)"><rect x="-2" y="-10" width="12" height="11" fill="#fff" stroke="#333" stroke-width="1"/><text x="-0.5" y="-1.5" font-size="8" font-family="Liberation Serif" fill="#111">A1</text><path d="M-7,-4 L-7,9 M-9,6 L-7,10 L-5,6" fill="none" stroke="#222" stroke-width="1.2"/><path d="M-7,-4 L-2,-4" stroke="#222" stroke-width="1"/></g><g transform="translate(19.0,539.9) scale(0.95)"><path d="M0,-10 L0,10" stroke="#2040c0" stroke-width="1.5"/><path d="M-9,6 L9,-5" stroke="#30a040" stroke-width="1.5"/><path d="M-8,-4 L9,8" stroke="#e0203a" stroke-width="1.5"/><path d="M0,-11 L-2,-6 L2,-6Z" fill="#2040c0"/></g><g transform="translate(54.0,539.9) scale(0.95)"><path d="M-9,9 L-1,-10 L3,-10 L10,9 L6,9 L4,4 L-4,4 L-6,9Z M-3,1 L3,1 L0,-6Z" fill="#666" stroke="#111" stroke-width="1.2" fill-rule="evenodd"/></g><g transform="translate(19.0,584.0) scale(0.95)"><path d="M-10,0 C-10,-5 -4,-7 0,-7 L0,7 C-5,7 -10,5 -10,0Z" fill="#c01828" stroke="#501010" stroke-width="0.8"/><path d="M10,0 C10,-5 4,-7 0,-7 L0,7 C5,7 10,5 10,0Z" fill="#40a050" stroke="#104010" stroke-width="0.8"/><path d="M0,-11 L0,11" stroke="#111" stroke-width="2"/><path d="M-2,-3 L4,-3 L1,-7Z" fill="#fff"/></g><g transform="translate(54.0,584.0) scale(0.95)"><path d="M-8,2 C-10,-1 -9,-4 -6,-2 L-4,0 L-7,-8 C-8,-10 -5,-11 -4,-9 L-1,-3 L-2,-10 C-2,-12 1,-12 1,-10 L2,-3 L4,-9 C4,-11 7,-11 7,-9 L5,-2 L8,-6 C9,-8 11,-7 10,-5 L6,5 C4,9 0,10 -3,9Z" fill="#f5deb3" stroke="#8a7050" stroke-width="1"/></g><g transform="translate(19.0,615.0) scale(0.95)"><circle cx="3" cy="-3" r="7" fill="#a8c8e8" stroke="#222" stroke-width="2"/><path d="M-2,2 L-10,10" stroke="#222" stroke-width="3.5" stroke-linecap="round"/></g><g transform="translate(54.0,615.0) scale(0.95)"><rect x="-10" y="-10" width="20" height="20" fill="none" stroke="#e0203a" stroke-width="1.5"/><circle cx="3" cy="-3" r="6" fill="#a8c8e8" stroke="#222" stroke-width="2"/><path d="M-1,1 L-9,9" stroke="#222" stroke-width="3"/></g><g transform="translate(19.0,649.0) scale(0.95)"><circle cx="1" cy="-1" r="6" fill="#a8c8e8" stroke="#222" stroke-width="2"/><path d="M-3,3 L-7,8" stroke="#222" stroke-width="3"/><path d="M-11,-11 L-6,-10 L-10,-6Z M11,-11 L10,-6 L6,-10Z M11,11 L6,10 L10,6Z" fill="#e0203a"/><path d="M-10,-10 L-6,-6 M10,-10 L6,-6 M10,10 L6,6" stroke="#e0203a" stroke-width="1.5"/></g><g transform="translate(54.0,649.0) scale(0.95)"><circle cx="1" cy="0" r="7" fill="#a8c8e8" stroke="#222" stroke-width="2"/><path d="M4,4 L9,10" stroke="#222" stroke-width="3"/><path d="M-9,-2 C-9,-9 2,-11 6,-5 L8,-7 L8,0 L1,0 L4,-3 C1,-7 -5,-6 -5,-2Z" fill="#3070d0" stroke="#103060" stroke-width="0.6"/></g><g transform="translate(19.0,690.0) scale(0.95)"><circle cx="0" cy="-8" r="2.5" fill="none" stroke="#333" stroke-width="1"/><path d="M-3,-4 L3,-4 L3,4 L1,4 L1,9 L-1,9 L-1,4 L-3,4Z" fill="#fff" stroke="#333" stroke-width="1"/><path d="M-7,7 L7,11 M-7,11 L7,7" stroke="#e0203a" stroke-width="1.3"/></g><g transform="translate(54.0,690.0) scale(0.95)"><path d="M-11,0 C-5,-8 5,-8 11,0 C5,6 -5,6 -11,0Z" fill="#fff" stroke="#222" stroke-width="1.5"/><circle r="4" fill="#333"/><path d="M-10,-4 C-4,-10 4,-10 10,-4" fill="none" stroke="#222" stroke-width="1.3"/></g><g transform="translate(19.0,723.0) scale(0.95)"><ellipse cx="-5" cy="0" rx="3.5" ry="6" fill="#222"/><ellipse cx="-5" cy="8" rx="2.5" ry="2" fill="#222"/><ellipse cx="5" cy="-4" rx="3.5" ry="6" fill="#222"/><ellipse cx="5" cy="4" rx="2.5" ry="2" fill="#222"/></g><g transform="translate(54.0,723.0) scale(0.95)"><circle r="8" fill="#fff" stroke="#222" stroke-width="1.3"/><path d="M-11,0 L11,0 M0,-11 L0,11" stroke="#222" stroke-width="1.2"/><path d="M-11,0 L-7,-3 L-7,3Z M11,0 L7,-3 L7,3Z" fill="#222"/></g><path d="M4,161.5 H68" stroke="#a0a0a0" stroke-width="1"/><path d="M4,339.0 H68" stroke="#a0a0a0" stroke-width="1"/><path d="M4,449.9 H68" stroke="#a0a0a0" stroke-width="1"/><path d="M4,559.8 H68" stroke="#a0a0a0" stroke-width="1"/><path d="M4,669.4 H68" stroke="#a0a0a0" stroke-width="1"/><rect x="0" y="743" width="37" height="230" fill="#f0f0f0"/><path d="M37.5,743 V973.5 H0" fill="none" stroke="#d0d0d0" stroke-width="1"/><path d="M4,748.0 H35" stroke="#a8a8a8" stroke-width="1.5" stroke-dasharray="1.5,2.5"/><g transform="translate(19.0,770.0) scale(0.95)"><path d="M-10,4 L-2,-9 L10,-4 L8,8 L-6,10Z" fill="#e8b090" stroke="#555" stroke-width="1"/><path d="M-6,2 C-2,-4 4,-4 6,2 M-3,5 C0,0 3,0 4,5" fill="none" stroke="#c04030" stroke-width="1"/></g><g transform="translate(19.0,805.0) scale(0.95)"><path d="M-10,-6 L8,-9 L10,7 L-8,9Z" fill="#a9a48e" stroke="#333" stroke-width="1"/><path d="M-9,0 L9,-2 M-1,-8 L1,8" stroke="#333" stroke-width="0.8"/><circle cx="-10" cy="-6" r="2" fill="#e0203a"/><circle cx="8" cy="-9" r="2" fill="#e0203a"/><circle cx="10" cy="7" r="2" fill="#e0203a"/><circle cx="-8" cy="9" r="2" fill="#e0203a"/></g><g transform="translate(19.0,847.0) scale(0.95)"><path d="M-11,2 L0,-7 L11,2 L0,10Z" fill="#a9a48e" stroke="#333" stroke-width="1"/><path d="M0,-10 L-3,-5 L3,-5Z M0,6 L-3,1 L3,1Z" fill="#e0203a"/><path d="M0,-6 L0,2" stroke="#e0203a" stroke-width="2"/></g><g transform="translate(19.0,880.0) scale(0.95)"><path d="M-11,3 L0,-5 L11,3 L0,10Z" fill="#a9a48e" stroke="#333" stroke-width="1"/><path d="M-3,2 L0,-9 L4,-4 L3,3Z" fill="#eee" stroke="#333" stroke-width="1"/><circle cx="1" cy="-4" r="2" fill="#555"/></g><g transform="translate(19.0,913.4) scale(0.95)"><path d="M-11,3 L0,-5 L11,3 L0,10Z" fill="#d8d8d0" stroke="#555" stroke-width="1"/><ellipse cx="0" cy="-6" rx="5" ry="3" fill="none" stroke="#555" stroke-width="1"/><path d="M-5,-6 L-4,3 L4,3 L5,-6" fill="#eee" stroke="#555" stroke-width="1"/></g><g transform="translate(19.0,946.5) scale(0.95)"><path d="M-11,3 L0,-6 L11,3 L0,10Z" fill="#8a8678" stroke="#333" stroke-width="1.2"/><circle cx="0" cy="2" r="2.5" fill="#e0203a"/><path d="M-6,2 L6,2" stroke="#eee" stroke-width="0.8"/></g><path d="M4,825 H34" stroke="#a0a0a0" stroke-width="1"/><rect x="0.5" y="975.5" width="296" height="37" fill="#f0f0f0" stroke="#c8c8c8"/><path d="M5.0,979 V1010" stroke="#a8a8a8" stroke-width="1.5" stroke-dasharray="1.5,2.5"/><rect x="137.5" y="983.5" width="155" height="20" fill="#f2f2f2" stroke="#e4e4e4"/><text x="15.5" y="997.5" font-size="12.0" font-family="Liberation Sans" font-weight="normal" fill="#111" text-anchor="start" textLength="74.0" lengthAdjust="spacingAndGlyphs">Measurements</text><circle cx="12.5" cy="1026" r="6.5" fill="#e6e6e6" stroke="#b0b0b0"/><path d="M12.5,1022 V1030" stroke="#c8c8c8" stroke-width="3"/><circle cx="42.5" cy="1026" r="6.5" fill="#fff" stroke="#111" stroke-width="1.3"/><circle cx="42.5" cy="1022.5" r="1.3" fill="#111"/><path d="M42.5,1025 V1030.5" stroke="#111" stroke-width="2.2"/><circle cx="72.5" cy="1026" r="6.5" fill="#c8c8c8" stroke="#b8b8b8"/><circle cx="72.5" cy="1024" r="2.5" fill="#fff"/><path d="M68,1030 C69,1026 76,1026 77,1030" fill="#fff"/><path d="M92.5,1020 V1032" stroke="#888"/><text x="103.0" y="1031.0" font-size="12.5" font-family="Liberation Sans" font-weight="normal" fill="#111" text-anchor="start" textLength="139.5" lengthAdjust="spacingAndGlyphs">Drag in direction to pan</text></svg><svg class="abs" style="left:0;top:0;z-index:6" width="1920" height="1040"><rect x="1661" y="111" width="258" height="899" fill="#f0f0f0"/><rect x="1661.5" y="111.5" width="257" height="898" fill="none" stroke="#99b4d1" stroke-width="1"/><rect x="1662" y="111" width="256" height="25" fill="#99b4d1"/><text x="1665.3" y="129.4" font-size="12.0" font-family="Liberation Sans" font-weight="bold" fill="#111" text-anchor="start" textLength="61.4" lengthAdjust="spacingAndGlyphs">Default Tray</text><rect x="1900" y="117" width="13" height="13" fill="#c75050"/><path d="M1903.5,120.5 L1909.5,126.5 M1909.5,120.5 L1903.5,126.5" stroke="#fff" stroke-width="1.5"/><rect x="1899" y="137" width="18" height="872" fill="#f0f0f0"/><path d="M1904,149 L1908,145 L1912,149" fill="none" stroke="#333" stroke-width="1.3"/><rect x="1900" y="154" width="16" height="17" fill="#dadada"/><path d="M1903,996 L1907,1000 L1911,996" fill="none" stroke="#333" stroke-width="1.3"/><defs><linearGradient id="hg137" x1="0" y1="0" x2="0" y2="1"><stop offset="0" stop-color="#f4f4f4"/><stop offset="1" stop-color="#c6c6c6"/></linearGradient></defs><rect x="1662" y="137" width="236" height="17" fill="url(#hg137)"/><path d="M1670.5,142.0 L1678.5,142.0 L1674.5,148.0 Z" fill="#111"/><text x="1685.3" y="149.5" font-size="12.0" font-family="Liberation Sans" font-weight="normal" fill="#222" text-anchor="start" textLength="53.0" lengthAdjust="spacingAndGlyphs">Entity Info</text><rect x="1882.5" y="139.5" width="13" height="13" fill="#f4f4f4" stroke="#a8a8a8"/><path d="M1886.5,143.5 L1891.5,148.5 M1891.5,143.5 L1886.5,148.5" stroke="#222" stroke-width="1.2"/><text x="1672.0" y="172.0" font-size="12.0" font-family="Liberation Sans" font-weight="bold" fill="#111" text-anchor="start" textLength="68.8" lengthAdjust="spacingAndGlyphs">No Selection</text><path d="M1665,179.5 H1875" stroke="#a0a0a0"/><rect x="1882.0" y="160.0" width="10" height="15" fill="#111"/><path d="M1883.5,161.5 L1890.5,161.5 L1887.0,165.5 Z" fill="#fff"/><path d="M1884.0,171.0 H1890.0 M1887.0,168.0 V174.0" stroke="#fff" stroke-width="1.5"/><defs><linearGradient id="hg303" x1="0" y1="0" x2="0" y2="1"><stop offset="0" stop-color="#f4f4f4"/><stop offset="1" stop-color="#c6c6c6"/></linearGradient></defs><rect x="1662" y="303" width="236" height="17" fill="url(#hg303)"/><path d="M1670.5,308.0 L1678.5,308.0 L1674.5,314.0 Z" fill="#111"/><text x="1685.3" y="315.5" font-size="12.0" font-family="Liberation Sans" font-weight="normal" fill="#222" text-anchor="start" textLength="48.0" lengthAdjust="spacingAndGlyphs">Materials</text><rect x="1882.5" y="305.5" width="13" height="13" fill="#f4f4f4" stroke="#a8a8a8"/><path d="M1886.5,309.5 L1891.5,314.5 M1891.5,309.5 L1886.5,314.5" stroke="#222" stroke-width="1.2"/><rect x="1665.5" y="322.5" width="65" height="70" fill="#fff" stroke="#b8b8b8"/><defs><pattern id="gravel" patternUnits="userSpaceOnUse" width="12" height="12"><rect width="12" height="12" fill="#b0574f"/><circle cx="2" cy="3" r="1.4" fill="#7a3028"/><circle cx="8" cy="2" r="1.2" fill="#d88a80"/><circle cx="5" cy="8" r="1.5" fill="#8e3a30"/><circle cx="10" cy="9" r="1.1" fill="#6a2820"/><circle cx="1" cy="10" r="1" fill="#d07a70"/><circle cx="6" cy="5" r="0.9" fill="#e0a090"/></pattern></defs><svg x="0" y="0" width="1920" height="1040"><clipPath id="swc"><rect x="1666" y="333" width="64" height="48"/></clipPath><g clip-path="url(#swc)"><rect x="1666" y="333" width="64" height="48" fill="#b0605a"/><circle cx="1695.6" cy="350.9" r="0.6" fill="#e0a8a0"/><circle cx="1666.4" cy="357.1" r="1.3" fill="#6a2a24"/><circle cx="1687.4" cy="377.9" r="1.1" fill="#e0a8a0"/><circle cx="1690.3" cy="366.8" r="0.9" fill="#e0a8a0"/><circle cx="1693.0" cy="341.1" r="0.5" fill="#d89088"/><circle cx="1698.4" cy="377.3" r="1.0" fill="#e0a8a0"/><circle cx="1690.6" cy="368.8" r="0.6" fill="#8e3c34"/><circle cx="1679.1" cy="343.8" r="1.2" fill="#6a2a24"/><circle cx="1715.4" cy="376.7" r="0.9" fill="#8e3c34"/><circle cx="1717.8" cy="342.6" r="1.3" fill="#c06a60"/><circle cx="1669.5" cy="351.2" r="0.9" fill="#6a2a24"/><circle cx="1681.2" cy="368.3" r="1.3" fill="#5a2420"/><circle cx="1666.2" cy="369.7" r="0.7" fill="#d89088"/><circle cx="1687.1" cy="375.8" r="0.6" fill="#6a2a24"/><circle cx="1698.1" cy="360.5" r="1.0" fill="#d89088"/><circle cx="1692.9" cy="352.1" r="1.1" fill="#6a2a24"/><circle cx="1710.9" cy="340.0" r="1.3" fill="#e0a8a0"/><circle cx="1727.3" cy="335.6" r="1.0" fill="#5a2420"/><circle cx="1720.5" cy="368.8" r="1.2" fill="#5a2420"/><circle cx="1729.9" cy="338.8" r="1.1" fill="#d89088"/><circle cx="1676.4" cy="357.2" r="1.2" fill="#e0a8a0"/><circle cx="1699.4" cy="360.1" r="1.1" fill="#8e3c34"/><circle cx="1673.0" cy="375.3" r="0.8" fill="#d89088"/><circle cx="1691.7" cy="380.3" r="1.0" fill="#6a2a24"/><circle cx="1690.3" cy="362.2" r="0.5" fill="#6a2a24"/><circle cx="1679.7" cy="354.3" r="0.8" fill="#6a2a24"/><circle cx="1685.7" cy="346.7" r="1.0" fill="#6a2a24"/><circle cx="1667.6" cy="370.5" r="1.2" fill="#c06a60"/><circle cx="1688.1" cy="370.3" r="1.0" fill="#6a2a24"/><circle cx="1693.2" cy="344.1" r="1.4" fill="#c06a60"/><circle cx="1698.6" cy="378.9" r="1.0" fill="#d89088"/><circle cx="1708.7" cy="341.2" r="1.3" fill="#8e3c34"/><circle cx="1667.9" cy="378.1" r="1.2" fill="#8e3c34"/><circle cx="1726.6" cy="380.3" r="1.0" fill="#6a2a24"/><circle cx="1669.1" cy="354.6" r="1.2" fill="#8e3c34"/><circle cx="1705.1" cy="379.4" r="0.8" fill="#d89088"/><circle cx="1696.8" cy="346.3" r="1.4" fill="#e0a8a0"/><circle cx="1701.6" cy="366.4" r="0.6" fill="#c06a60"/><circle cx="1675.1" cy="360.0" r="1.2" fill="#5a2420"/><circle cx="1722.8" cy="341.1" r="1.1" fill="#5a2420"/><circle cx="1722.3" cy="356.7" r="0.6" fill="#6a2a24"/><circle cx="1683.7" cy="339.2" r="1.2" fill="#6a2a24"/><circle cx="1676.4" cy="370.9" r="1.3" fill="#d89088"/><circle cx="1677.3" cy="354.9" r="1.0" fill="#c06a60"/><circle cx="1671.3" cy="359.3" r="1.0" fill="#8e3c34"/><circle cx="1700.3" cy="378.2" r="0.5" fill="#5a2420"/><circle cx="1722.9" cy="359.1" r="1.0" fill="#5a2420"/><circle cx="1707.1" cy="371.2" r="1.3" fill="#5a2420"/><circle cx="1700.7" cy="347.4" r="1.2" fill="#e0a8a0"/><circle cx="1674.8" cy="337.8" r="0.9" fill="#6a2a24"/><circle cx="1697.4" cy="363.6" r="0.5" fill="#5a2420"/><circle cx="1667.9" cy="344.7" r="0.9" fill="#8e3c34"/><circle cx="1718.7" cy="368.0" r="1.1" fill="#d89088"/><circle cx="1668.3" cy="361.7" r="1.1" fill="#e0a8a0"/><circle cx="1692.2" cy="361.3" r="0.6" fill="#6a2a24"/><circle cx="1704.9" cy="341.7" r="0.6" fill="#8e3c34"/><circle cx="1706.0" cy="359.3" r="0.9" fill="#e0a8a0"/><circle cx="1715.6" cy="349.0" r="1.2" fill="#6a2a24"/><circle cx="1695.7" cy="354.6" r="0.6" fill="#c06a60"/><circle cx="1729.1" cy="373.0" r="0.6" fill="#8e3c34"/><circle cx="1709.0" cy="354.7" r="0.6" fill="#d89088"/><circle cx="1673.0" cy="335.5" r="0.6" fill="#e0a8a0"/><circle cx="1728.5" cy="350.9" r="1.2" fill="#c06a60"/><circle cx="1706.1" cy="342.6" r="1.3" fill="#6a2a24"/><circle cx="1681.1" cy="345.3" r="1.0" fill="#d89088"/><circle cx="1667.0" cy="345.2" r="1.0" fill="#6a2a24"/><circle cx="1699.2" cy="353.0" r="1.3" fill="#c06a60"/><circle cx="1720.5" cy="362.1" r="0.7" fill="#6a2a24"/><circle cx="1709.6" cy="339.3" r="0.5" fill="#d89088"/><circle cx="1728.4" cy="370.7" r="1.3" fill="#6a2a24"/><circle cx="1722.1" cy="377.2" r="1.4" fill="#6a2a24"/><circle cx="1667.9" cy="354.1" r="0.9" fill="#8e3c34"/><circle cx="1697.5" cy="349.7" r="1.3" fill="#c06a60"/><circle cx="1693.5" cy="336.8" r="0.8" fill="#c06a60"/><circle cx="1705.1" cy="360.3" r="0.9" fill="#d89088"/><circle cx="1687.1" cy="335.8" r="0.6" fill="#8e3c34"/><circle cx="1700.8" cy="342.1" r="1.1" fill="#e0a8a0"/><circle cx="1723.4" cy="378.3" r="0.6" fill="#c06a60"/><circle cx="1727.6" cy="361.8" r="1.3" fill="#e0a8a0"/><circle cx="1712.9" cy="343.1" r="1.0" fill="#8e3c34"/><circle cx="1670.9" cy="365.1" r="0.9" fill="#d89088"/><circle cx="1721.5" cy="348.5" r="1.3" fill="#5a2420"/><circle cx="1698.2" cy="355.2" r="0.5" fill="#5a2420"/><circle cx="1679.1" cy="343.7" r="1.4" fill="#8e3c34"/><circle cx="1668.7" cy="340.2" r="0.6" fill="#6a2a24"/><circle cx="1698.6" cy="370.9" r="0.9" fill="#c06a60"/><circle cx="1690.9" cy="361.2" r="1.3" fill="#5a2420"/><circle cx="1710.2" cy="350.2" r="0.7" fill="#8e3c34"/><circle cx="1724.6" cy="360.2" r="1.2" fill="#d89088"/><circle cx="1702.5" cy="333.5" r="1.1" fill="#6a2a24"/><circle cx="1683.8" cy="358.1" r="1.2" fill="#c06a60"/><circle cx="1724.1" cy="369.2" r="0.7" fill="#d89088"/><circle cx="1699.1" cy="356.0" r="1.4" fill="#d89088"/><circle cx="1687.2" cy="368.9" r="0.8" fill="#5a2420"/><circle cx="1669.3" cy="346.4" r="0.8" fill="#5a2420"/><circle cx="1677.9" cy="370.4" r="1.1" fill="#6a2a24"/><circle cx="1695.0" cy="349.4" r="1.2" fill="#d89088"/><circle cx="1723.8" cy="343.4" r="0.7" fill="#e0a8a0"/><circle cx="1702.4" cy="333.5" r="1.0" fill="#6a2a24"/><circle cx="1725.9" cy="367.4" r="0.9" fill="#6a2a24"/><circle cx="1689.8" cy="371.3" r="1.3" fill="#c06a60"/><circle cx="1706.5" cy="379.3" r="1.0" fill="#d89088"/><circle cx="1727.7" cy="337.1" r="0.8" fill="#d89088"/><circle cx="1715.1" cy="379.5" r="0.7" fill="#5a2420"/><circle cx="1666.8" cy="364.8" r="0.8" fill="#d89088"/><circle cx="1728.4" cy="341.3" r="0.6" fill="#5a2420"/><circle cx="1703.2" cy="342.6" r="1.2" fill="#8e3c34"/><circle cx="1711.3" cy="348.9" r="0.9" fill="#6a2a24"/><circle cx="1692.0" cy="370.4" r="0.9" fill="#e0a8a0"/><circle cx="1668.7" cy="341.3" r="0.6" fill="#5a2420"/><circle cx="1711.5" cy="363.6" r="1.2" fill="#5a2420"/><circle cx="1690.4" cy="369.3" r="1.3" fill="#5a2420"/><circle cx="1675.7" cy="351.2" r="1.4" fill="#c06a60"/><circle cx="1675.0" cy="353.0" r="1.2" fill="#e0a8a0"/><circle cx="1706.7" cy="337.5" r="1.4" fill="#5a2420"/><circle cx="1682.7" cy="350.9" r="1.2" fill="#8e3c34"/><circle cx="1700.4" cy="380.9" r="1.2" fill="#e0a8a0"/><circle cx="1699.8" cy="348.0" r="1.3" fill="#d89088"/><circle cx="1721.1" cy="342.5" r="1.1" fill="#8e3c34"/><circle cx="1685.9" cy="343.8" r="0.7" fill="#e0a8a0"/><circle cx="1692.5" cy="346.0" r="1.3" fill="#8e3c34"/><circle cx="1686.7" cy="376.9" r="1.0" fill="#6a2a24"/><circle cx="1674.5" cy="379.7" r="0.6" fill="#d89088"/><circle cx="1667.2" cy="373.3" r="1.1" fill="#8e3c34"/><circle cx="1688.6" cy="370.1" r="1.3" fill="#6a2a24"/><circle cx="1711.2" cy="367.0" r="1.3" fill="#6a2a24"/><circle cx="1681.5" cy="340.5" r="1.0" fill="#c06a60"/><circle cx="1689.3" cy="364.8" r="1.3" fill="#8e3c34"/><circle cx="1712.3" cy="357.8" r="0.9" fill="#d89088"/><circle cx="1728.3" cy="348.0" r="0.9" fill="#8e3c34"/><circle cx="1693.9" cy="380.0" r="0.9" fill="#6a2a24"/><circle cx="1669.6" cy="350.2" r="1.2" fill="#e0a8a0"/><circle cx="1680.3" cy="345.5" r="0.9" fill="#6a2a24"/><circle cx="1729.6" cy="371.7" r="1.0" fill="#e0a8a0"/><circle cx="1677.7" cy="364.1" r="1.2" fill="#e0a8a0"/><circle cx="1686.6" cy="356.7" r="0.8" fill="#6a2a24"/><circle cx="1691.0" cy="378.4" r="1.4" fill="#c06a60"/><circle cx="1676.8" cy="334.4" r="0.8" fill="#6a2a24"/><circle cx="1699.2" cy="361.5" r="0.5" fill="#c06a60"/><circle cx="1705.1" cy="351.3" r="0.7" fill="#d89088"/><circle cx="1728.2" cy="336.5" r="1.0" fill="#8e3c34"/><circle cx="1675.2" cy="368.8" r="1.3" fill="#d89088"/><circle cx="1685.5" cy="346.6" r="1.2" fill="#5a2420"/><circle cx="1707.2" cy="348.1" r="1.1" fill="#c06a60"/><circle cx="1669.7" cy="358.5" r="1.1" fill="#6a2a24"/><circle cx="1671.2" cy="369.2" r="1.3" fill="#8e3c34"/><circle cx="1670.7" cy="355.9" r="1.0" fill="#5a2420"/><circle cx="1705.0" cy="380.6" r="0.9" fill="#c06a60"/><circle cx="1700.3" cy="378.1" r="1.0" fill="#6a2a24"/><circle cx="1711.0" cy="354.0" r="1.0" fill="#5a2420"/><circle cx="1710.7" cy="369.7" r="0.7" fill="#6a2a24"/><circle cx="1720.0" cy="348.8" r="1.2" fill="#5a2420"/><circle cx="1727.0" cy="380.9" r="0.8" fill="#d89088"/><circle cx="1676.4" cy="380.1" r="1.1" fill="#8e3c34"/><circle cx="1687.2" cy="336.9" r="1.2" fill="#e0a8a0"/><circle cx="1684.1" cy="337.5" r="1.0" fill="#8e3c34"/><circle cx="1716.9" cy="362.2" r="1.2" fill="#6a2a24"/><circle cx="1685.6" cy="344.2" r="0.8" fill="#c06a60"/><circle cx="1694.9" cy="335.0" r="0.7" fill="#e0a8a0"/><circle cx="1722.5" cy="360.5" r="0.6" fill="#e0a8a0"/><circle cx="1721.4" cy="346.8" r="0.9" fill="#8e3c34"/><circle cx="1715.8" cy="354.5" r="0.7" fill="#6a2a24"/><circle cx="1683.0" cy="380.3" r="0.6" fill="#d89088"/><circle cx="1682.0" cy="350.9" r="0.7" fill="#e0a8a0"/><circle cx="1710.5" cy="365.4" r="0.7" fill="#5a2420"/><circle cx="1700.4" cy="352.6" r="1.1" fill="#8e3c34"/><circle cx="1695.9" cy="352.4" r="0.6" fill="#8e3c34"/><circle cx="1729.3" cy="367.9" r="0.7" fill="#6a2a24"/><circle cx="1704.8" cy="351.3" r="0.9" fill="#6a2a24"/><circle cx="1704.4" cy="371.8" r="0.8" fill="#5a2420"/><circle cx="1723.9" cy="348.9" r="0.7" fill="#d89088"/><circle cx="1688.9" cy="377.7" r="0.6" fill="#6a2a24"/><circle cx="1666.0" cy="360.1" r="1.4" fill="#e0a8a0"/><circle cx="1680.1" cy="354.5" r="1.3" fill="#6a2a24"/><circle cx="1706.1" cy="345.3" r="1.0" fill="#d89088"/><circle cx="1689.6" cy="347.1" r="0.7" fill="#5a2420"/><circle cx="1676.3" cy="372.4" r="0.6" fill="#d89088"/><circle cx="1702.2" cy="371.6" r="0.5" fill="#e0a8a0"/><circle cx="1677.6" cy="336.5" r="1.3" fill="#d89088"/><circle cx="1692.8" cy="367.5" r="0.8" fill="#e0a8a0"/><circle cx="1696.7" cy="353.0" r="0.8" fill="#e0a8a0"/><circle cx="1698.4" cy="339.8" r="1.0" fill="#6a2a24"/><circle cx="1689.5" cy="375.8" r="1.0" fill="#e0a8a0"/><circle cx="1684.1" cy="338.7" r="0.7" fill="#c06a60"/><circle cx="1722.0" cy="368.8" r="1.0" fill="#8e3c34"/><circle cx="1726.4" cy="346.3" r="0.6" fill="#8e3c34"/><circle cx="1708.6" cy="368.7" r="1.3" fill="#d89088"/><circle cx="1666.6" cy="352.2" r="0.5" fill="#c06a60"/><circle cx="1667.3" cy="374.3" r="1.1" fill="#e0a8a0"/><circle cx="1712.6" cy="342.1" r="1.2" fill="#e0a8a0"/><circle cx="1685.4" cy="336.5" r="1.0" fill="#d89088"/><circle cx="1709.0" cy="357.6" r="0.6" fill="#6a2a24"/><circle cx="1679.8" cy="334.8" r="1.2" fill="#d89088"/><circle cx="1711.9" cy="364.8" r="1.0" fill="#6a2a24"/><circle cx="1716.3" cy="359.4" r="0.7" fill="#e0a8a0"/><circle cx="1682.5" cy="335.8" r="0.8" fill="#6a2a24"/><circle cx="1720.6" cy="369.7" r="1.1" fill="#8e3c34"/><circle cx="1725.3" cy="360.2" r="0.7" fill="#5a2420"/><circle cx="1669.4" cy="333.2" r="1.1" fill="#e0a8a0"/><circle cx="1670.6" cy="342.3" r="0.6" fill="#e0a8a0"/><circle cx="1702.1" cy="355.0" r="0.9" fill="#e0a8a0"/><circle cx="1704.4" cy="361.4" r="0.7" fill="#c06a60"/><circle cx="1729.8" cy="354.2" r="0.9" fill="#d89088"/><circle cx="1675.1" cy="340.6" r="0.6" fill="#8e3c34"/><circle cx="1713.6" cy="349.1" r="1.1" fill="#e0a8a0"/><circle cx="1668.2" cy="336.1" r="0.8" fill="#8e3c34"/><circle cx="1698.9" cy="345.4" r="1.0" fill="#c06a60"/><circle cx="1692.4" cy="378.4" r="1.4" fill="#d89088"/><circle cx="1684.7" cy="352.0" r="1.4" fill="#8e3c34"/><circle cx="1688.6" cy="342.5" r="1.3" fill="#6a2a24"/><circle cx="1687.3" cy="375.8" r="1.3" fill="#c06a60"/><circle cx="1729.1" cy="352.9" r="0.8" fill="#5a2420"/><circle cx="1708.6" cy="368.8" r="0.7" fill="#e0a8a0"/><circle cx="1726.1" cy="345.2" r="1.4" fill="#8e3c34"/><circle cx="1695.2" cy="334.3" r="1.4" fill="#c06a60"/><circle cx="1669.3" cy="353.6" r="0.8" fill="#e0a8a0"/><circle cx="1692.0" cy="353.2" r="0.6" fill="#5a2420"/><circle cx="1684.8" cy="344.9" r="1.1" fill="#d89088"/><circle cx="1692.4" cy="335.4" r="0.8" fill="#c06a60"/><circle cx="1688.8" cy="359.6" r="1.2" fill="#e0a8a0"/><circle cx="1711.4" cy="378.1" r="0.9" fill="#e0a8a0"/><circle cx="1727.0" cy="333.8" r="0.7" fill="#6a2a24"/><circle cx="1727.6" cy="380.8" r="1.1" fill="#5a2420"/><circle cx="1706.5" cy="349.7" r="0.9" fill="#e0a8a0"/><circle cx="1727.8" cy="342.3" r="1.3" fill="#c06a60"/><circle cx="1681.7" cy="360.2" r="0.8" fill="#6a2a24"/><circle cx="1726.3" cy="336.2" r="1.0" fill="#8e3c34"/><circle cx="1695.7" cy="378.3" r="0.8" fill="#5a2420"/><circle cx="1709.5" cy="353.7" r="0.8" fill="#8e3c34"/><circle cx="1677.6" cy="335.9" r="1.2" fill="#c06a60"/><circle cx="1687.7" cy="342.6" r="0.6" fill="#5a2420"/><circle cx="1680.2" cy="339.6" r="0.8" fill="#d89088"/><circle cx="1702.7" cy="361.5" r="1.3" fill="#6a2a24"/><circle cx="1676.7" cy="338.9" r="0.6" fill="#6a2a24"/><circle cx="1667.3" cy="378.6" r="0.7" fill="#d89088"/><circle cx="1714.7" cy="364.8" r="1.1" fill="#c06a60"/><circle cx="1680.2" cy="335.9" r="1.3" fill="#c06a60"/><circle cx="1669.4" cy="370.8" r="1.2" fill="#5a2420"/><circle cx="1717.2" cy="343.9" r="0.8" fill="#8e3c34"/><circle cx="1714.3" cy="335.3" r="0.8" fill="#6a2a24"/><circle cx="1707.8" cy="363.6" r="0.5" fill="#6a2a24"/><circle cx="1672.4" cy="347.9" r="1.1" fill="#e0a8a0"/><circle cx="1668.0" cy="372.7" r="0.9" fill="#e0a8a0"/><circle cx="1707.1" cy="354.9" r="1.4" fill="#c06a60"/><circle cx="1681.8" cy="357.7" r="1.0" fill="#e0a8a0"/><circle cx="1666.9" cy="336.5" r="1.0" fill="#e0a8a0"/><circle cx="1700.2" cy="357.0" r="1.1" fill="#6a2a24"/><circle cx="1714.3" cy="349.4" r="0.8" fill="#6a2a24"/><circle cx="1669.3" cy="380.0" r="0.6" fill="#e0a8a0"/><circle cx="1701.1" cy="351.9" r="1.2" fill="#5a2420"/><circle cx="1704.3" cy="368.4" r="1.1" fill="#5a2420"/><circle cx="1729.0" cy="367.6" r="0.7" fill="#d89088"/><circle cx="1681.2" cy="354.7" r="1.2" fill="#6a2a24"/><circle cx="1724.3" cy="375.8" r="0.9" fill="#c06a60"/><circle cx="1671.3" cy="346.6" r="0.5" fill="#6a2a24"/><circle cx="1671.7" cy="345.1" r="1.0" fill="#c06a60"/><circle cx="1681.7" cy="368.5" r="1.3" fill="#6a2a24"/><circle cx="1705.9" cy="338.6" r="0.8" fill="#d89088"/><circle cx="1673.8" cy="368.1" r="1.2" fill="#d89088"/><circle cx="1670.2" cy="344.7" r="1.2" fill="#6a2a24"/><circle cx="1720.8" cy="336.6" r="0.9" fill="#5a2420"/><circle cx="1724.2" cy="343.3" r="0.8" fill="#8e3c34"/><circle cx="1687.3" cy="356.8" r="1.3" fill="#8e3c34"/><circle cx="1727.0" cy="337.4" r="1.4" fill="#8e3c34"/><circle cx="1709.8" cy="373.6" r="0.8" fill="#e0a8a0"/><circle cx="1703.7" cy="355.0" r="0.9" fill="#5a2420"/><circle cx="1688.0" cy="343.3" r="1.3" fill="#6a2a24"/><circle cx="1682.8" cy="334.0" r="1.4" fill="#6a2a24"/><circle cx="1719.9" cy="351.0" r="0.5" fill="#6a2a24"/><circle cx="1705.0" cy="344.6" r="0.7" fill="#6a2a24"/><circle cx="1714.0" cy="369.9" r="0.9" fill="#6a2a24"/><circle cx="1667.0" cy="360.2" r="0.8" fill="#5a2420"/><circle cx="1706.0" cy="340.1" r="1.4" fill="#e0a8a0"/><circle cx="1668.9" cy="356.7" r="1.1" fill="#c06a60"/><circle cx="1693.9" cy="361.1" r="1.3" fill="#e0a8a0"/><circle cx="1711.4" cy="358.5" r="0.8" fill="#8e3c34"/><circle cx="1715.7" cy="359.7" r="1.2" fill="#5a2420"/><circle cx="1698.0" cy="355.3" r="0.7" fill="#e0a8a0"/><circle cx="1699.6" cy="378.3" r="0.5" fill="#e0a8a0"/><circle cx="1723.8" cy="340.6" r="1.2" fill="#6a2a24"/><circle cx="1722.7" cy="368.0" r="1.2" fill="#d89088"/><circle cx="1675.5" cy="380.0" r="1.0" fill="#5a2420"/><circle cx="1728.3" cy="341.4" r="0.6" fill="#c06a60"/><circle cx="1681.1" cy="360.6" r="1.1" fill="#d89088"/><circle cx="1700.4" cy="333.4" r="1.0" fill="#e0a8a0"/><circle cx="1672.6" cy="349.1" r="0.9" fill="#6a2a24"/><circle cx="1710.4" cy="365.4" r="0.7" fill="#d89088"/><circle cx="1724.6" cy="373.2" r="0.8" fill="#e0a8a0"/><circle cx="1691.7" cy="347.9" r="1.1" fill="#8e3c34"/><circle cx="1729.2" cy="337.4" r="1.3" fill="#c06a60"/><circle cx="1678.0" cy="376.2" r="0.7" fill="#8e3c34"/><circle cx="1707.5" cy="339.0" r="1.2" fill="#8e3c34"/><circle cx="1693.7" cy="349.3" r="1.0" fill="#e0a8a0"/><circle cx="1701.1" cy="350.0" r="1.4" fill="#5a2420"/><circle cx="1710.1" cy="343.7" r="1.4" fill="#8e3c34"/><circle cx="1683.4" cy="377.7" r="0.9" fill="#5a2420"/><circle cx="1713.9" cy="341.4" r="0.9" fill="#6a2a24"/><circle cx="1668.2" cy="360.9" r="1.0" fill="#8e3c34"/><circle cx="1722.2" cy="333.8" r="1.0" fill="#d89088"/><circle cx="1695.4" cy="358.1" r="0.9" fill="#6a2a24"/><circle cx="1693.9" cy="369.2" r="1.2" fill="#5a2420"/><circle cx="1695.3" cy="379.9" r="0.6" fill="#d89088"/><circle cx="1721.5" cy="379.6" r="1.2" fill="#5a2420"/><circle cx="1703.4" cy="354.7" r="1.4" fill="#e0a8a0"/><circle cx="1680.3" cy="341.2" r="1.2" fill="#8e3c34"/><circle cx="1720.8" cy="352.5" r="1.1" fill="#5a2420"/><circle cx="1691.6" cy="357.2" r="0.9" fill="#c06a60"/><circle cx="1709.1" cy="378.1" r="0.6" fill="#8e3c34"/><circle cx="1710.2" cy="354.1" r="0.5" fill="#c06a60"/><circle cx="1708.0" cy="375.3" r="0.9" fill="#e0a8a0"/><circle cx="1706.1" cy="377.7" r="1.1" fill="#5a2420"/><circle cx="1689.3" cy="379.0" r="0.7" fill="#c06a60"/><circle cx="1704.7" cy="347.6" r="1.0" fill="#8e3c34"/><circle cx="1724.2" cy="365.0" r="1.3" fill="#6a2a24"/><circle cx="1694.8" cy="364.8" r="1.0" fill="#c06a60"/><circle cx="1691.5" cy="353.7" r="1.0" fill="#d89088"/><circle cx="1688.4" cy="346.3" r="0.5" fill="#5a2420"/><circle cx="1694.7" cy="338.4" r="1.2" fill="#d89088"/><circle cx="1689.9" cy="343.0" r="0.9" fill="#5a2420"/><circle cx="1699.7" cy="357.6" r="0.7" fill="#8e3c34"/><circle cx="1726.9" cy="366.4" r="1.2" fill="#5a2420"/><circle cx="1669.2" cy="356.4" r="1.1" fill="#8e3c34"/><circle cx="1707.9" cy="337.5" r="0.9" fill="#d89088"/><circle cx="1668.3" cy="374.3" r="1.1" fill="#6a2a24"/><circle cx="1686.5" cy="360.3" r="0.5" fill="#d89088"/><circle cx="1691.9" cy="365.3" r="0.6" fill="#c06a60"/><circle cx="1722.8" cy="357.4" r="0.7" fill="#6a2a24"/><circle cx="1720.2" cy="371.0" r="1.1" fill="#e0a8a0"/><circle cx="1710.6" cy="364.7" r="0.7" fill="#e0a8a0"/><circle cx="1711.1" cy="375.2" r="0.8" fill="#e0a8a0"/><circle cx="1718.0" cy="364.7" r="1.1" fill="#8e3c34"/><circle cx="1720.9" cy="357.2" r="0.9" fill="#5a2420"/><circle cx="1669.5" cy="374.6" r="0.7" fill="#8e3c34"/><circle cx="1691.0" cy="367.3" r="0.9" fill="#5a2420"/><circle cx="1668.1" cy="361.5" r="0.5" fill="#d89088"/><circle cx="1675.7" cy="360.6" r="1.0" fill="#6a2a24"/><circle cx="1668.1" cy="334.5" r="0.9" fill="#d89088"/><circle cx="1706.2" cy="338.6" r="0.5" fill="#e0a8a0"/><circle cx="1729.2" cy="379.2" r="0.7" fill="#5a2420"/><circle cx="1703.0" cy="370.5" r="1.2" fill="#6a2a24"/><circle cx="1706.5" cy="380.1" r="0.8" fill="#c06a60"/><circle cx="1680.2" cy="362.6" r="1.4" fill="#e0a8a0"/><circle cx="1691.3" cy="370.2" r="0.6" fill="#6a2a24"/><circle cx="1707.5" cy="338.7" r="1.0" fill="#d89088"/><circle cx="1713.5" cy="347.6" r="1.3" fill="#5a2420"/><circle cx="1694.9" cy="344.4" r="1.3" fill="#d89088"/><circle cx="1713.9" cy="380.8" r="1.1" fill="#c06a60"/><circle cx="1700.6" cy="379.2" r="0.9" fill="#6a2a24"/><circle cx="1674.4" cy="356.1" r="1.3" fill="#8e3c34"/><circle cx="1707.1" cy="337.2" r="1.4" fill="#8e3c34"/><circle cx="1696.5" cy="355.5" r="0.7" fill="#6a2a24"/><circle cx="1692.5" cy="370.9" r="1.2" fill="#c06a60"/><circle cx="1710.9" cy="341.3" r="1.3" fill="#6a2a24"/><circle cx="1681.9" cy="339.1" r="0.5" fill="#6a2a24"/><circle cx="1704.6" cy="349.0" r="1.3" fill="#e0a8a0"/><circle cx="1708.9" cy="354.4" r="0.7" fill="#c06a60"/><circle cx="1701.2" cy="357.8" r="0.7" fill="#c06a60"/><circle cx="1681.7" cy="361.0" r="1.3" fill="#d89088"/><circle cx="1728.1" cy="380.0" r="1.2" fill="#e0a8a0"/><circle cx="1696.2" cy="366.3" r="0.7" fill="#8e3c34"/><circle cx="1681.1" cy="369.8" r="1.2" fill="#8e3c34"/><circle cx="1702.8" cy="366.5" r="1.2" fill="#d89088"/><circle cx="1703.0" cy="339.8" r="0.8" fill="#c06a60"/><circle cx="1676.1" cy="369.7" r="1.2" fill="#5a2420"/><circle cx="1671.0" cy="380.6" r="0.9" fill="#c06a60"/><circle cx="1690.5" cy="378.0" r="1.2" fill="#e0a8a0"/><circle cx="1728.1" cy="365.9" r="0.9" fill="#e0a8a0"/><circle cx="1689.1" cy="365.5" r="0.5" fill="#c06a60"/><circle cx="1712.5" cy="341.2" r="1.1" fill="#8e3c34"/><circle cx="1725.9" cy="338.9" r="1.2" fill="#6a2a24"/><circle cx="1681.9" cy="341.5" r="0.8" fill="#d89088"/><circle cx="1698.9" cy="360.5" r="1.3" fill="#d89088"/><circle cx="1673.5" cy="351.1" r="1.2" fill="#6a2a24"/><circle cx="1724.9" cy="340.6" r="0.9" fill="#5a2420"/><circle cx="1677.3" cy="337.9" r="0.7" fill="#8e3c34"/><circle cx="1683.3" cy="370.3" r="1.2" fill="#8e3c34"/><circle cx="1703.3" cy="346.4" r="1.2" fill="#8e3c34"/><circle cx="1720.9" cy="360.5" r="1.0" fill="#5a2420"/><circle cx="1708.5" cy="363.1" r="0.5" fill="#e0a8a0"/><circle cx="1718.2" cy="349.5" r="1.1" fill="#5a2420"/><circle cx="1716.0" cy="340.8" r="1.3" fill="#d89088"/><circle cx="1721.3" cy="345.8" r="1.2" fill="#5a2420"/><circle cx="1701.2" cy="372.4" r="0.8" fill="#d89088"/><circle cx="1707.5" cy="340.2" r="1.2" fill="#6a2a24"/><circle cx="1687.8" cy="378.3" r="1.0" fill="#6a2a24"/><circle cx="1707.3" cy="343.2" r="0.6" fill="#8e3c34"/><circle cx="1680.6" cy="350.7" r="0.6" fill="#8e3c34"/><circle cx="1699.2" cy="350.4" r="0.8" fill="#6a2a24"/><circle cx="1671.7" cy="361.8" r="0.8" fill="#8e3c34"/><circle cx="1721.3" cy="350.9" r="0.7" fill="#6a2a24"/><circle cx="1726.9" cy="370.7" r="0.9" fill="#e0a8a0"/><circle cx="1683.1" cy="378.8" r="1.3" fill="#e0a8a0"/><circle cx="1719.6" cy="367.8" r="0.9" fill="#d89088"/><circle cx="1713.4" cy="350.5" r="1.1" fill="#e0a8a0"/><circle cx="1708.5" cy="378.0" r="1.1" fill="#d89088"/><circle cx="1697.7" cy="337.1" r="0.8" fill="#c06a60"/><circle cx="1700.1" cy="360.4" r="0.8" fill="#e0a8a0"/><circle cx="1686.1" cy="346.2" r="1.2" fill="#e0a8a0"/><circle cx="1698.9" cy="349.5" r="1.3" fill="#e0a8a0"/><circle cx="1696.3" cy="357.1" r="1.3" fill="#5a2420"/><circle cx="1672.1" cy="342.1" r="0.7" fill="#e0a8a0"/><circle cx="1721.6" cy="347.8" r="1.0" fill="#5a2420"/><circle cx="1713.7" cy="375.4" r="0.7" fill="#e0a8a0"/><circle cx="1708.7" cy="346.7" r="1.2" fill="#5a2420"/><circle cx="1685.8" cy="359.8" r="1.4" fill="#c06a60"/><circle cx="1688.7" cy="356.0" r="1.3" fill="#e0a8a0"/><circle cx="1715.3" cy="358.7" r="0.7" fill="#5a2420"/><circle cx="1668.0" cy="377.7" r="1.2" fill="#d89088"/><circle cx="1727.5" cy="340.6" r="1.0" fill="#c06a60"/><circle cx="1683.2" cy="349.3" r="1.1" fill="#8e3c34"/><circle cx="1713.2" cy="334.2" r="1.3" fill="#6a2a24"/><circle cx="1709.1" cy="368.1" r="0.7" fill="#d89088"/><circle cx="1712.5" cy="335.8" r="0.5" fill="#5a2420"/><circle cx="1689.3" cy="359.0" r="0.7" fill="#e0a8a0"/><circle cx="1678.9" cy="360.9" r="1.0" fill="#c06a60"/><circle cx="1687.7" cy="346.5" r="0.8" fill="#d89088"/><circle cx="1708.8" cy="352.1" r="0.8" fill="#8e3c34"/><circle cx="1687.6" cy="374.1" r="0.8" fill="#8e3c34"/><circle cx="1697.3" cy="347.0" r="0.8" fill="#d89088"/><circle cx="1719.6" cy="372.3" r="1.3" fill="#d89088"/></g></svg><path d="M1720,390 L1728,382 M1724,390 L1728,386" stroke="#999" stroke-width="0.8"/><rect x="1734.5" y="322.5" width="135" height="18" fill="#fff" stroke="#828790"/><text x="1739.3" y="336.0" font-size="12.0" font-family="Liberation Sans" font-weight="normal" fill="#111" text-anchor="start" textLength="128.0" lengthAdjust="spacingAndGlyphs">[Groundcover Brick Crushe</text><rect x="1804.5" y="344.5" width="51" height="17" fill="#ffffe1" stroke="#767676"/><text x="1808.2" y="357.0" font-size="12.0" font-family="Liberation Sans" font-weight="normal" fill="#111" text-anchor="start" textLength="45.0" lengthAdjust="spacingAndGlyphs">Collapse</text><rect x="1881.0" y="325.0" width="10" height="15" fill="#111"/><path d="M1882.5,326.5 L1889.5,326.5 L1886.0,330.5 Z" fill="#fff"/><path d="M1883.0,336.0 H1889.0 M1886.0,333.0 V339.0" stroke="#fff" stroke-width="1.5"/><path d="M1877,352 L1886,348 L1894,352 L1894,360 L1886,365 L1877,360Z" fill="#222"/><path d="M1879,352 L1886,349.5 L1892,352 L1886,355Z" fill="#eee"/><path d="M1880,357 L1890,353" stroke="#eee" stroke-width="1"/><circle cx="1882" cy="363" r="4.5" fill="#fff" stroke="#111" stroke-width="1.3"/><path d="M1879.5,363 H1884.5 M1882,360.5 V365.5" stroke="#111" stroke-width="1.2"/><path d="M1875,392.5 L1896,392.5 L1896,371Z" fill="#9fb0c4"/><path d="M1662,396.5 H1898" stroke="#c8c8c8"/><rect x="1662" y="401" width="45" height="21" fill="#fff"/><path d="M1707.5,401 V422" stroke="#a0a0a0"/><text x="1669.0" y="415.5" font-size="12.0" font-family="Liberation Sans" font-weight="normal" fill="#111" text-anchor="start" textLength="29.5" lengthAdjust="spacingAndGlyphs">Select</text><text x="1711.3" y="415.5" font-size="12.0" font-family="Liberation Sans" font-weight="normal" fill="#111" text-anchor="start" textLength="18.5" lengthAdjust="spacingAndGlyphs">Edit</text><path d="M1747.5,404 V422" stroke="#a0a0a0"/><path d="M1662,422.5 H1898" stroke="#e0e0e0"/><path d="M1879,416 L1888,406" stroke="#222" stroke-width="2.2" stroke-linecap="round"/><path d="M1887,404 L1891,400 C1893,398 1896,401 1894,403 L1890,407Z" fill="#222"/><path d="M1880,414.5 L1885,409" stroke="#e8c060" stroke-width="1.2"/><path d="M1671,439.0 L1676,434.0 V437.0 H1683 V441.0 H1676 V444.0 Z" fill="#fff" stroke="#aaa"/><path d="M1706,439.0 L1701,434.0 V437.0 H1694 V441.0 H1701 V444.0 Z" fill="#fff" stroke="#aaa"/><path d="M1716,438.0 L1724.5,431.0 L1733,438.0 M1718.5,436.0 V446.0 H1730.5 V436.0" fill="none" stroke="#111" stroke-width="1.8"/><rect x="1722.5" y="441.0" width="4" height="5" fill="#111"/><rect x="1738.5" y="428.5" width="132" height="20" fill="#fff" stroke="#7a7a7a"/><rect x="1855" y="429.5" width="15" height="18" fill="#e8e8e8" stroke="#b0b0b0"/><path d="M1859,438.0 L1866,438.0 L1862.5,442.0 Z" fill="#111"/><text x="1742.5" y="443.5" font-size="12.0" font-family="Liberation Sans" font-weight="normal" fill="#111" text-anchor="start" textLength="110.7" lengthAdjust="spacingAndGlyphs">Landscaping, Fencing a</text><path d="M1880,433.0 H1889 L1893,439.0 L1889,445.0 H1880 Z" fill="#3050a0" stroke="#111" stroke-width="1"/><path d="M1882,437.0 H1887 M1882,440.0 H1887" stroke="#fff" stroke-width="1"/><rect x="1662" y="452" width="220" height="284" fill="#ffffff"/><path d="M1662,452.5 H1898" stroke="#c0c0c0"/><rect x="1882" y="452" width="16" height="284" fill="#f0f0f0"/><path d="M1886,466 L1890,462 L1894,466" fill="none" stroke="#333" stroke-width="1.3"/><rect x="1883" y="470" width="14" height="17" fill="#d8d8d8"/><path d="M1886,722 L1890,726 L1894,722" fill="none" stroke="#333" stroke-width="1.3"/><svg x="1667" y="455.5" width="49" height="49" overflow="hidden"><rect width="49" height="49" fill="#938888"/><path d="M0,24 H49 M24,0 V49 M24,12 H49 M0,36 H24" stroke="#6a6060" stroke-width="2"/></svg><rect x="1666.5" y="455.0" width="49" height="49" fill="none" stroke="#b8b8b8"/><svg x="1719" y="455.5" width="49" height="49" overflow="hidden"><rect width="49" height="49" fill="#808080"/><path d="M0,16 H49 M0,33 H49 M16,0 V16 M36,0 V16 M8,16 V33 M28,16 V33 M44,16 V33 M16,33 V49 M36,33 V49" stroke="#505050" stroke-width="2"/></svg><rect x="1718.5" y="455.0" width="49" height="49" fill="none" stroke="#b8b8b8"/><svg x="1771" y="455.5" width="49" height="49" overflow="hidden"><rect width="49" height="49" fill="#8b3636"/></svg><rect x="1770.5" y="455.0" width="49" height="49" fill="none" stroke="#b8b8b8"/><svg x="1823" y="455.5" width="49" height="49" overflow="hidden"><rect width="49" height="49" fill="#ffffff"/><path d="M5,5 H45 M5,13 H45 M5,21 H45 M5,29 H45 M5,37 H45 M5,45 H45" stroke="#777" stroke-width="0.8"/></svg><rect x="1822.5" y="455.0" width="49" height="49" fill="none" stroke="#b8b8b8"/><svg x="1667" y="507.5" width="49" height="49" overflow="hidden"><rect width="49" height="49" fill="#ffffff"/><path d="M24,4 L44,24 L24,45 L4,24Z" fill="none" stroke="#111" stroke-width="2.5"/></svg><rect x="1666.5" y="507.0" width="49" height="49" fill="none" stroke="#b8b8b8"/><svg x="1719" y="507.5" width="49" height="49" overflow="hidden"><rect width="49" height="49" fill="#ffffff"/><path d="M16,4 H33 L44,24 L33,45 H16 L5,24Z" fill="none" stroke="#e04040" stroke-width="3.5"/></svg><rect x="1718.5" y="507.0" width="49" height="49" fill="none" stroke="#b8b8b8"/><svg x="1771" y="507.5" width="49" height="49" overflow="hidden"><rect width="49" height="49" fill="#ffffff"/><path d="M5,8 L44,41 M44,8 L5,41" stroke="#a86a40" stroke-width="9"/></svg><rect x="1770.5" y="507.0" width="49" height="49" fill="none" stroke="#b8b8b8"/><svg x="1823" y="507.5" width="49" height="49" overflow="hidden"><rect width="49" height="49" fill="#ffffff"/><path d="M4,8 H45 M4,13 H45 M4,45 H45 M8,5 V45 M14,5 V45 M20,5 V45 M26,5 V45 M32,5 V45 M38,5 V45 M44,5 V45" stroke="#111" stroke-width="1.6"/></svg><rect x="1822.5" y="507.0" width="49" height="49" fill="none" stroke="#b8b8b8"/><svg x="1667" y="559.5" width="49" height="49" overflow="hidden"><rect width="49" height="49" fill="#8a8a8a"/><path d="M6,5 V48 M12,5 V48 M18,5 V48 M24,5 V48 M30,5 V48 M36,5 V48 M42,5 V48 M4,14 H45 M4,40 H45" stroke="#b8b8b8" stroke-width="3"/></svg><rect x="1666.5" y="559.0" width="49" height="49" fill="none" stroke="#b8b8b8"/><svg x="1719" y="559.5" width="49" height="49" overflow="hidden"><rect width="49" height="49" fill="#ffffff"/><path d="M3,4 H45 M6,4 V46 M14,4 V46 M22,4 V46 M30,4 V46 M38,4 V46 M3,40 H45" stroke="#777" stroke-width="1"/><path d="M45,4 V46" stroke="#c04040"/></svg><rect x="1718.5" y="559.0" width="49" height="49" fill="none" stroke="#b8b8b8"/><svg x="1771" y="559.5" width="49" height="49" overflow="hidden"><rect width="49" height="49" fill="#7b7670"/><path d="M5,0 V49 M12,0 V49 M20,0 V49 M28,0 V49 M35,0 V49 M43,0 V49" stroke="#5a5550" stroke-width="2"/></svg><rect x="1770.5" y="559.0" width="49" height="49" fill="none" stroke="#b8b8b8"/><svg x="1823" y="559.5" width="49" height="49" overflow="hidden"><rect width="49" height="49" fill="#5aa640"/><circle cx="30.5" cy="36.3" r="1.3" fill="#4f9a38"/><circle cx="41.2" cy="38.0" r="0.8" fill="#4f9a38"/><circle cx="44.1" cy="5.5" r="1.0" fill="#4f9a38"/><circle cx="18.7" cy="5.0" r="0.8" fill="#4f9a38"/><circle cx="20.0" cy="8.9" r="1.4" fill="#6ab848"/><circle cx="7.8" cy="39.1" r="0.7" fill="#6ab848"/><circle cx="6.2" cy="0.1" r="1.4" fill="#4f9a38"/><circle cx="37.9" cy="47.0" r="0.7" fill="#4f9a38"/><circle cx="14.2" cy="47.1" r="1.1" fill="#4f9a38"/><circle cx="8.9" cy="47.5" r="0.8" fill="#6ab848"/><circle cx="14.6" cy="17.7" r="0.7" fill="#4f9a38"/><circle cx="12.9" cy="16.3" r="1.3" fill="#4f9a38"/><circle cx="29.2" cy="34.7" r="0.7" fill="#6ab848"/><circle cx="40.1" cy="23.6" r="0.9" fill="#6ab848"/><circle cx="23.2" cy="8.6" r="0.8" fill="#4f9a38"/><circle cx="46.5" cy="17.5" r="1.0" fill="#6ab848"/><circle cx="17.9" cy="28.3" r="0.6" fill="#4f9a38"/><circle cx="34.7" cy="30.6" r="1.5" fill="#4f9a38"/><circle cx="37.0" cy="45.6" r="1.4" fill="#6ab848"/><circle cx="25.1" cy="43.7" r="0.8" fill="#6ab848"/><circle cx="5.3" cy="36.7" r="1.3" fill="#6ab848"/><circle cx="1.8" cy="46.3" r="0.7" fill="#6ab848"/><circle cx="25.1" cy="17.8" r="0.7" fill="#6ab848"/><circle cx="45.3" cy="26.7" r="0.9" fill="#6ab848"/><circle cx="15.0" cy="39.1" r="1.2" fill="#6ab848"/><circle cx="48.8" cy="7.9" r="0.6" fill="#6ab848"/><circle cx="1.6" cy="36.3" r="0.9" fill="#6ab848"/><circle cx="22.3" cy="20.7" r="0.7" fill="#4f9a38"/><circle cx="39.3" cy="16.4" r="0.8" fill="#4f9a38"/><circle cx="30.9" cy="38.6" r="0.7" fill="#6ab848"/><circle cx="18.3" cy="2.9" r="1.0" fill="#4f9a38"/><circle cx="22.2" cy="49.0" r="1.4" fill="#6ab848"/><circle cx="47.0" cy="33.8" r="0.9" fill="#6ab848"/><circle cx="14.3" cy="19.8" r="0.7" fill="#6ab848"/><circle cx="40.3" cy="26.1" r="0.8" fill="#6ab848"/><circle cx="42.5" cy="8.8" r="1.0" fill="#6ab848"/><circle cx="3.1" cy="39.0" r="0.9" fill="#4f9a38"/><circle cx="37.2" cy="17.8" r="1.2" fill="#6ab848"/><circle cx="40.9" cy="13.0" r="1.5" fill="#6ab848"/><circle cx="46.9" cy="16.7" r="0.8" fill="#4f9a38"/></svg><rect x="1822.5" y="559.0" width="49" height="49" fill="none" stroke="#b8b8b8"/><svg x="1667" y="611.5" width="49" height="49" overflow="hidden"><rect width="49" height="49" fill="#88b040"/><circle cx="23.2" cy="37.9" r="0.9" fill="#9ac050"/><circle cx="22.7" cy="40.0" r="1.2" fill="#9ac050"/><circle cx="17.0" cy="31.6" r="1.3" fill="#9ac050"/><circle cx="17.2" cy="41.3" r="1.4" fill="#9ac050"/><circle cx="47.8" cy="46.9" r="1.1" fill="#7aa838"/><circle cx="9.7" cy="17.7" r="1.4" fill="#9ac050"/><circle cx="33.9" cy="35.3" r="1.3" fill="#7aa838"/><circle cx="30.2" cy="45.9" r="1.1" fill="#9ac050"/><circle cx="14.8" cy="27.1" r="1.4" fill="#9ac050"/><circle cx="35.3" cy="1.4" r="0.7" fill="#9ac050"/><circle cx="30.6" cy="8.9" r="1.3" fill="#7aa838"/><circle cx="30.9" cy="2.1" r="1.0" fill="#7aa838"/><circle cx="8.1" cy="43.7" r="0.7" fill="#7aa838"/><circle cx="23.7" cy="26.9" r="1.0" fill="#9ac050"/><circle cx="18.6" cy="30.0" r="1.1" fill="#7aa838"/><circle cx="35.2" cy="18.3" r="0.9" fill="#9ac050"/><circle cx="41.9" cy="42.5" r="1.2" fill="#9ac050"/><circle cx="47.3" cy="26.9" r="0.9" fill="#9ac050"/><circle cx="26.7" cy="16.6" r="1.1" fill="#9ac050"/><circle cx="40.1" cy="20.5" r="1.3" fill="#9ac050"/><circle cx="22.9" cy="7.7" r="0.9" fill="#9ac050"/><circle cx="46.9" cy="47.4" r="1.1" fill="#9ac050"/><circle cx="40.2" cy="32.4" r="0.9" fill="#9ac050"/><circle cx="27.7" cy="30.1" r="0.7" fill="#9ac050"/><circle cx="21.0" cy="47.9" r="1.0" fill="#9ac050"/><circle cx="47.7" cy="18.6" r="1.5" fill="#7aa838"/><circle cx="29.2" cy="12.7" r="1.5" fill="#9ac050"/><circle cx="12.3" cy="1.0" r="1.5" fill="#9ac050"/><circle cx="24.1" cy="14.0" r="1.0" fill="#7aa838"/><circle cx="32.3" cy="47.1" r="0.8" fill="#7aa838"/><circle cx="38.3" cy="40.5" r="0.6" fill="#9ac050"/><circle cx="11.9" cy="23.2" r="0.6" fill="#9ac050"/><circle cx="13.1" cy="7.6" r="1.5" fill="#9ac050"/><circle cx="24.1" cy="48.6" r="1.1" fill="#7aa838"/><circle cx="0.8" cy="6.2" r="0.9" fill="#9ac050"/><circle cx="30.1" cy="35.8" r="0.6" fill="#9ac050"/><circle cx="17.7" cy="36.5" r="1.1" fill="#7aa838"/><circle cx="0.1" cy="27.1" r="1.2" fill="#7aa838"/><circle cx="43.5" cy="26.7" r="0.6" fill="#9ac050"/><circle cx="29.1" cy="33.8" r="1.5" fill="#9ac050"/></svg><rect x="1666.5" y="611.0" width="49" height="49" fill="none" stroke="#b8b8b8"/><svg x="1719" y="611.5" width="49" height="49" overflow="hidden"><rect width="49" height="49" fill="#7a7a80"/><circle cx="42.1" cy="41.2" r="1.1" fill="#999"/><circle cx="44.0" cy="22.8" r="1.4" fill="#ccc"/><circle cx="41.0" cy="34.0" r="1.0" fill="#ccc"/><circle cx="31.8" cy="23.2" r="0.9" fill="#999"/><circle cx="23.4" cy="26.9" r="1.1" fill="#ccc"/><circle cx="26.4" cy="20.9" r="1.1" fill="#555"/><circle cx="3.4" cy="11.3" r="1.4" fill="#555"/><circle cx="32.5" cy="1.3" r="1.3" fill="#555"/><circle cx="48.9" cy="34.4" r="0.6" fill="#555"/><circle cx="10.7" cy="31.6" r="1.6" fill="#999"/><circle cx="48.7" cy="34.6" r="1.0" fill="#999"/><circle cx="29.9" cy="20.3" r="0.8" fill="#999"/><circle cx="2.1" cy="5.3" r="1.0" fill="#555"/><circle cx="13.7" cy="28.0" r="0.7" fill="#6a6a70"/><circle cx="43.0" cy="6.6" r="1.0" fill="#ccc"/><circle cx="33.6" cy="24.0" r="1.0" fill="#ccc"/><circle cx="44.8" cy="6.8" r="0.9" fill="#ccc"/><circle cx="44.6" cy="27.2" r="1.2" fill="#ccc"/><circle cx="3.1" cy="11.5" r="1.4" fill="#ccc"/><circle cx="25.3" cy="6.6" r="0.8" fill="#ccc"/><circle cx="22.2" cy="19.1" r="0.7" fill="#555"/><circle cx="32.1" cy="4.2" r="1.3" fill="#555"/><circle cx="42.3" cy="24.8" r="1.1" fill="#6a6a70"/><circle cx="43.0" cy="23.5" r="0.9" fill="#555"/><circle cx="26.6" cy="18.8" r="1.4" fill="#6a6a70"/><circle cx="33.4" cy="10.9" r="0.7" fill="#6a6a70"/><circle cx="40.2" cy="6.8" r="1.2" fill="#ccc"/><circle cx="41.0" cy="14.2" r="1.5" fill="#ccc"/><circle cx="39.0" cy="18.5" r="1.3" fill="#ccc"/><circle cx="31.7" cy="39.4" r="1.0" fill="#ccc"/><circle cx="25.4" cy="29.0" r="1.2" fill="#999"/><circle cx="19.4" cy="4.8" r="0.6" fill="#999"/><circle cx="9.6" cy="24.0" r="1.5" fill="#ccc"/><circle cx="0.0" cy="23.0" r="1.5" fill="#6a6a70"/><circle cx="15.8" cy="22.6" r="0.8" fill="#999"/><circle cx="3.5" cy="42.6" r="1.5" fill="#6a6a70"/><circle cx="7.5" cy="12.4" r="0.9" fill="#999"/><circle cx="36.8" cy="32.9" r="0.6" fill="#555"/><circle cx="16.9" cy="36.8" r="0.9" fill="#555"/><circle cx="33.7" cy="33.0" r="1.1" fill="#999"/><circle cx="5.8" cy="32.8" r="0.9" fill="#999"/><circle cx="35.7" cy="8.0" r="0.8" fill="#555"/><circle cx="28.2" cy="32.2" r="1.2" fill="#ccc"/><circle cx="33.3" cy="9.0" r="1.0" fill="#555"/><circle cx="35.9" cy="35.2" r="0.8" fill="#999"/><circle cx="8.6" cy="10.2" r="0.6" fill="#6a6a70"/><circle cx="35.6" cy="13.3" r="1.1" fill="#6a6a70"/><circle cx="38.2" cy="20.1" r="0.6" fill="#ccc"/><circle cx="46.0" cy="35.1" r="0.8" fill="#6a6a70"/><circle cx="4.5" cy="23.1" r="1.3" fill="#555"/><circle cx="24.4" cy="38.3" r="0.6" fill="#6a6a70"/><circle cx="21.8" cy="31.4" r="1.5" fill="#999"/><circle cx="8.8" cy="24.9" r="1.0" fill="#999"/><circle cx="4.1" cy="15.4" r="0.7" fill="#999"/><circle cx="29.3" cy="42.0" r="0.8" fill="#555"/><circle cx="21.6" cy="17.5" r="1.0" fill="#6a6a70"/><circle cx="25.6" cy="6.5" r="0.6" fill="#ccc"/><circle cx="33.7" cy="43.7" r="1.6" fill="#555"/><circle cx="6.8" cy="23.7" r="1.4" fill="#ccc"/><circle cx="40.2" cy="15.3" r="0.7" fill="#555"/><circle cx="23.1" cy="34.2" r="1.4" fill="#999"/><circle cx="13.5" cy="24.1" r="0.8" fill="#999"/><circle cx="39.0" cy="43.3" r="1.5" fill="#555"/><circle cx="20.6" cy="15.4" r="1.4" fill="#555"/><circle cx="43.9" cy="32.1" r="1.4" fill="#555"/><circle cx="21.7" cy="40.0" r="1.3" fill="#555"/><circle cx="35.7" cy="34.4" r="0.9" fill="#6a6a70"/><circle cx="27.5" cy="15.7" r="0.9" fill="#999"/><circle cx="12.9" cy="33.1" r="0.9" fill="#555"/><circle cx="26.6" cy="36.2" r="0.6" fill="#555"/><circle cx="2.5" cy="6.4" r="1.0" fill="#ccc"/><circle cx="46.5" cy="30.0" r="0.8" fill="#6a6a70"/><circle cx="6.1" cy="9.9" r="1.0" fill="#999"/><circle cx="28.6" cy="40.5" r="1.3" fill="#555"/><circle cx="13.1" cy="29.7" r="1.2" fill="#999"/><circle cx="21.9" cy="46.0" r="1.4" fill="#555"/><circle cx="16.3" cy="21.8" r="0.8" fill="#6a6a70"/><circle cx="8.4" cy="2.4" r="1.3" fill="#999"/><circle cx="26.1" cy="47.5" r="1.2" fill="#555"/><circle cx="6.2" cy="41.7" r="1.3" fill="#999"/><circle cx="47.9" cy="1.6" r="1.2" fill="#6a6a70"/><circle cx="34.5" cy="17.4" r="1.1" fill="#999"/><circle cx="13.6" cy="9.9" r="1.2" fill="#ccc"/><circle cx="37.5" cy="38.5" r="1.0" fill="#999"/><circle cx="39.9" cy="32.5" r="1.5" fill="#555"/><circle cx="30.3" cy="19.6" r="0.7" fill="#999"/><circle cx="24.0" cy="1.8" r="0.8" fill="#555"/><circle cx="36.9" cy="13.8" r="1.5" fill="#ccc"/><circle cx="23.4" cy="23.0" r="1.1" fill="#555"/><circle cx="39.2" cy="18.4" r="0.6" fill="#999"/></svg><rect x="1718.5" y="611.0" width="49" height="49" fill="none" stroke="#b8b8b8"/><svg x="1771" y="611.5" width="49" height="49" overflow="hidden"><rect width="49" height="49" fill="#a94a40"/><circle cx="39.8" cy="1.1" r="1.3" fill="#902f28"/><circle cx="25.2" cy="24.6" r="1.1" fill="#d88a7a"/><circle cx="22.0" cy="38.6" r="1.2" fill="#7a3028"/><circle cx="26.3" cy="39.1" r="1.0" fill="#7a3028"/><circle cx="33.3" cy="25.6" r="0.9" fill="#7a3028"/><circle cx="1.3" cy="37.9" r="1.2" fill="#d88a7a"/><circle cx="15.0" cy="45.5" r="0.9" fill="#c86a5a"/><circle cx="3.5" cy="36.9" r="1.3" fill="#902f28"/><circle cx="44.0" cy="33.7" r="1.4" fill="#c86a5a"/><circle cx="23.7" cy="4.5" r="0.7" fill="#902f28"/><circle cx="47.8" cy="26.7" r="1.0" fill="#7a3028"/><circle cx="32.9" cy="18.5" r="1.4" fill="#c86a5a"/><circle cx="44.6" cy="30.1" r="1.0" fill="#7a3028"/><circle cx="41.3" cy="43.6" r="1.3" fill="#902f28"/><circle cx="12.2" cy="4.9" r="0.9" fill="#902f28"/><circle cx="39.1" cy="3.8" r="1.6" fill="#7a3028"/><circle cx="31.0" cy="37.6" r="0.8" fill="#7a3028"/><circle cx="27.9" cy="30.7" r="1.2" fill="#d88a7a"/><circle cx="20.4" cy="20.8" r="1.1" fill="#c86a5a"/><circle cx="14.8" cy="13.8" r="1.2" fill="#902f28"/><circle cx="9.2" cy="1.5" r="0.7" fill="#c86a5a"/><circle cx="21.3" cy="16.0" r="0.7" fill="#902f28"/><circle cx="35.7" cy="3.0" r="1.1" fill="#7a3028"/><circle cx="15.6" cy="41.7" r="1.2" fill="#c86a5a"/><circle cx="43.8" cy="30.1" r="1.4" fill="#7a3028"/><circle cx="0.1" cy="32.9" r="0.7" fill="#902f28"/><circle cx="7.4" cy="30.2" r="0.7" fill="#d88a7a"/><circle cx="36.1" cy="40.0" r="1.4" fill="#7a3028"/><circle cx="17.9" cy="39.9" r="0.8" fill="#902f28"/><circle cx="18.3" cy="22.5" r="1.3" fill="#7a3028"/><circle cx="12.0" cy="46.1" r="1.1" fill="#7a3028"/><circle cx="5.8" cy="29.3" r="1.0" fill="#7a3028"/><circle cx="24.3" cy="47.2" r="1.5" fill="#7a3028"/><circle cx="24.0" cy="45.9" r="1.3" fill="#7a3028"/><circle cx="5.7" cy="23.5" r="1.0" fill="#c86a5a"/><circle cx="45.0" cy="18.7" r="0.9" fill="#d88a7a"/><circle cx="31.5" cy="37.5" r="0.7" fill="#7a3028"/><circle cx="14.5" cy="16.5" r="1.4" fill="#d88a7a"/><circle cx="2.5" cy="20.6" r="0.8" fill="#7a3028"/><circle cx="7.1" cy="47.4" r="1.2" fill="#d88a7a"/><circle cx="48.2" cy="26.5" r="1.0" fill="#c86a5a"/><circle cx="4.5" cy="17.4" r="1.4" fill="#7a3028"/><circle cx="40.1" cy="6.9" r="1.4" fill="#7a3028"/><circle cx="12.3" cy="22.5" r="1.0" fill="#7a3028"/><circle cx="2.6" cy="10.7" r="1.6" fill="#d88a7a"/><circle cx="0.6" cy="25.4" r="1.6" fill="#d88a7a"/><circle cx="24.9" cy="2.6" r="1.0" fill="#d88a7a"/><circle cx="42.1" cy="46.1" r="1.3" fill="#7a3028"/><circle cx="10.6" cy="20.7" r="1.3" fill="#d88a7a"/><circle cx="44.9" cy="18.5" r="1.6" fill="#c86a5a"/><circle cx="43.7" cy="7.3" r="1.4" fill="#d88a7a"/><circle cx="40.9" cy="3.8" r="1.0" fill="#d88a7a"/><circle cx="20.6" cy="13.3" r="1.1" fill="#902f28"/><circle cx="0.1" cy="31.0" r="1.4" fill="#d88a7a"/><circle cx="3.8" cy="33.7" r="0.6" fill="#d88a7a"/><circle cx="43.4" cy="9.6" r="0.6" fill="#d88a7a"/><circle cx="47.1" cy="29.3" r="0.7" fill="#c86a5a"/><circle cx="3.8" cy="17.9" r="1.2" fill="#7a3028"/><circle cx="9.1" cy="21.0" r="0.9" fill="#902f28"/><circle cx="16.4" cy="10.5" r="0.9" fill="#7a3028"/><circle cx="13.9" cy="5.2" r="1.0" fill="#902f28"/><circle cx="18.1" cy="23.4" r="1.2" fill="#c86a5a"/><circle cx="47.3" cy="6.9" r="0.6" fill="#7a3028"/><circle cx="35.8" cy="6.5" r="1.1" fill="#7a3028"/><circle cx="0.4" cy="37.8" r="1.0" fill="#c86a5a"/><circle cx="38.9" cy="2.7" r="1.1" fill="#7a3028"/><circle cx="33.9" cy="43.3" r="1.4" fill="#902f28"/><circle cx="21.5" cy="5.0" r="0.7" fill="#902f28"/><circle cx="27.9" cy="13.5" r="1.2" fill="#d88a7a"/><circle cx="48.4" cy="14.8" r="0.8" fill="#7a3028"/><circle cx="31.6" cy="2.7" r="0.8" fill="#d88a7a"/><circle cx="4.8" cy="25.2" r="1.4" fill="#902f28"/><circle cx="40.7" cy="6.8" r="1.0" fill="#d88a7a"/><circle cx="0.2" cy="27.7" r="1.2" fill="#7a3028"/><circle cx="2.9" cy="4.3" r="0.9" fill="#c86a5a"/><circle cx="18.3" cy="16.7" r="1.4" fill="#d88a7a"/><circle cx="38.4" cy="36.3" r="0.9" fill="#7a3028"/><circle cx="30.7" cy="19.0" r="1.2" fill="#c86a5a"/><circle cx="34.4" cy="29.0" r="1.5" fill="#c86a5a"/><circle cx="29.1" cy="27.7" r="1.5" fill="#902f28"/><circle cx="27.5" cy="0.5" r="0.6" fill="#d88a7a"/><circle cx="33.0" cy="31.8" r="0.6" fill="#d88a7a"/><circle cx="5.8" cy="35.3" r="1.2" fill="#c86a5a"/><circle cx="26.3" cy="34.1" r="1.3" fill="#7a3028"/><circle cx="2.1" cy="35.1" r="0.9" fill="#7a3028"/><circle cx="46.9" cy="33.3" r="0.9" fill="#d88a7a"/><circle cx="37.0" cy="12.7" r="0.9" fill="#7a3028"/><circle cx="43.1" cy="15.8" r="1.3" fill="#d88a7a"/><circle cx="22.8" cy="7.6" r="0.8" fill="#902f28"/><circle cx="15.4" cy="30.0" r="1.1" fill="#c86a5a"/></svg><rect x="1770.5" y="611.0" width="49" height="49" fill="none" stroke="#b8b8b8"/><svg x="1823" y="611.5" width="49" height="49" overflow="hidden"><rect width="49" height="49" fill="#a08a68"/><circle cx="17.3" cy="3.9" r="1.0" fill="#fff0d0"/><circle cx="8.6" cy="6.8" r="1.1" fill="#fff0d0"/><circle cx="45.8" cy="16.9" r="0.6" fill="#fff0d0"/><circle cx="13.1" cy="24.2" r="1.1" fill="#d8c8a0"/><circle cx="27.2" cy="32.5" r="1.0" fill="#8a7050"/><circle cx="41.0" cy="14.4" r="0.7" fill="#8a7050"/><circle cx="20.8" cy="41.5" r="1.1" fill="#fff0d0"/><circle cx="30.8" cy="31.4" r="1.6" fill="#5a4a30"/><circle cx="33.8" cy="5.4" r="0.7" fill="#8a7050"/><circle cx="41.4" cy="28.5" r="0.6" fill="#fff0d0"/><circle cx="8.4" cy="16.4" r="1.4" fill="#5a4a30"/><circle cx="20.0" cy="16.1" r="0.7" fill="#5a4a30"/><circle cx="14.3" cy="16.5" r="1.6" fill="#fff0d0"/><circle cx="3.1" cy="14.8" r="0.8" fill="#5a4a30"/><circle cx="38.7" cy="43.9" r="1.1" fill="#5a4a30"/><circle cx="22.6" cy="3.5" r="1.0" fill="#8a7050"/><circle cx="31.9" cy="33.4" r="0.9" fill="#8a7050"/><circle cx="46.4" cy="22.8" r="0.7" fill="#d8c8a0"/><circle cx="5.6" cy="26.3" r="0.7" fill="#fff0d0"/><circle cx="21.4" cy="13.3" r="1.2" fill="#fff0d0"/><circle cx="1.9" cy="43.2" r="1.6" fill="#d8c8a0"/><circle cx="18.7" cy="31.1" r="1.5" fill="#8a7050"/><circle cx="43.2" cy="34.9" r="0.7" fill="#8a7050"/><circle cx="2.6" cy="46.0" r="1.1" fill="#fff0d0"/><circle cx="27.1" cy="39.1" r="1.2" fill="#8a7050"/><circle cx="13.9" cy="36.5" r="0.9" fill="#fff0d0"/><circle cx="19.8" cy="34.8" r="0.7" fill="#d8c8a0"/><circle cx="22.4" cy="46.6" r="1.4" fill="#fff0d0"/><circle cx="48.9" cy="6.5" r="0.8" fill="#5a4a30"/><circle cx="35.2" cy="12.6" r="1.1" fill="#d8c8a0"/><circle cx="39.3" cy="23.6" r="0.9" fill="#8a7050"/><circle cx="30.8" cy="34.2" r="1.1" fill="#5a4a30"/><circle cx="10.1" cy="1.2" r="1.2" fill="#fff0d0"/><circle cx="31.3" cy="23.9" r="1.5" fill="#8a7050"/><circle cx="29.7" cy="2.8" r="0.9" fill="#fff0d0"/><circle cx="14.4" cy="18.2" r="1.4" fill="#8a7050"/><circle cx="32.1" cy="37.1" r="1.3" fill="#5a4a30"/><circle cx="23.9" cy="7.8" r="1.6" fill="#fff0d0"/><circle cx="32.4" cy="20.6" r="1.4" fill="#fff0d0"/><circle cx="16.7" cy="35.9" r="1.1" fill="#5a4a30"/><circle cx="7.8" cy="24.2" r="0.6" fill="#fff0d0"/><circle cx="37.8" cy="41.0" r="0.6" fill="#5a4a30"/><circle cx="23.5" cy="5.9" r="0.8" fill="#d8c8a0"/><circle cx="41.8" cy="11.7" r="1.4" fill="#5a4a30"/><circle cx="18.9" cy="31.6" r="0.8" fill="#8a7050"/><circle cx="45.1" cy="10.0" r="0.8" fill="#5a4a30"/><circle cx="36.4" cy="24.7" r="1.0" fill="#8a7050"/><circle cx="10.9" cy="4.6" r="1.2" fill="#fff0d0"/><circle cx="38.4" cy="35.6" r="1.5" fill="#5a4a30"/><circle cx="7.2" cy="2.8" r="0.6" fill="#d8c8a0"/><circle cx="5.2" cy="22.4" r="1.0" fill="#fff0d0"/><circle cx="23.4" cy="25.6" r="0.6" fill="#fff0d0"/><circle cx="40.9" cy="30.1" r="1.3" fill="#d8c8a0"/><circle cx="1.0" cy="43.3" r="1.6" fill="#d8c8a0"/><circle cx="47.4" cy="34.1" r="0.8" fill="#8a7050"/><circle cx="43.5" cy="8.4" r="1.0" fill="#5a4a30"/><circle cx="21.0" cy="14.7" r="1.3" fill="#fff0d0"/><circle cx="19.2" cy="37.8" r="0.7" fill="#fff0d0"/><circle cx="33.8" cy="10.6" r="1.0" fill="#fff0d0"/><circle cx="7.2" cy="47.1" r="0.9" fill="#d8c8a0"/><circle cx="34.0" cy="42.2" r="1.3" fill="#5a4a30"/><circle cx="42.7" cy="44.9" r="1.4" fill="#fff0d0"/><circle cx="40.4" cy="44.1" r="1.2" fill="#fff0d0"/><circle cx="35.9" cy="9.9" r="1.2" fill="#5a4a30"/><circle cx="9.4" cy="26.1" r="1.4" fill="#8a7050"/><circle cx="31.0" cy="34.7" r="1.0" fill="#d8c8a0"/><circle cx="30.7" cy="8.9" r="1.1" fill="#fff0d0"/><circle cx="46.5" cy="36.4" r="1.3" fill="#fff0d0"/><circle cx="46.9" cy="40.9" r="0.9" fill="#5a4a30"/><circle cx="23.9" cy="18.0" r="1.6" fill="#8a7050"/><circle cx="37.1" cy="23.4" r="1.4" fill="#fff0d0"/><circle cx="43.4" cy="16.1" r="1.6" fill="#fff0d0"/><circle cx="8.4" cy="20.9" r="1.0" fill="#5a4a30"/><circle cx="11.3" cy="14.4" r="1.4" fill="#5a4a30"/><circle cx="38.0" cy="23.7" r="0.7" fill="#8a7050"/><circle cx="4.6" cy="35.8" r="1.0" fill="#8a7050"/><circle cx="17.2" cy="37.7" r="0.6" fill="#5a4a30"/><circle cx="45.4" cy="43.6" r="1.4" fill="#5a4a30"/><circle cx="2.0" cy="25.1" r="1.1" fill="#fff0d0"/><circle cx="14.9" cy="20.8" r="1.2" fill="#5a4a30"/><circle cx="47.5" cy="25.3" r="1.5" fill="#5a4a30"/><circle cx="28.9" cy="3.6" r="1.0" fill="#fff0d0"/><circle cx="4.7" cy="16.9" r="1.5" fill="#5a4a30"/><circle cx="48.4" cy="42.7" r="1.0" fill="#5a4a30"/><circle cx="22.6" cy="4.8" r="1.5" fill="#8a7050"/><circle cx="1.7" cy="47.3" r="1.3" fill="#5a4a30"/><circle cx="29.2" cy="43.6" r="0.9" fill="#fff0d0"/><circle cx="40.3" cy="24.6" r="0.9" fill="#5a4a30"/><circle cx="41.4" cy="27.9" r="1.1" fill="#d8c8a0"/><circle cx="30.1" cy="19.9" r="1.0" fill="#d8c8a0"/></svg><rect x="1822.5" y="611.0" width="49" height="49" fill="none" stroke="#b8b8b8"/><svg x="1667" y="663.5" width="49" height="49" overflow="hidden"><rect width="49" height="49" fill="#8e6456"/><circle cx="3.1" cy="15.8" r="0.6" fill="#8a5a48"/><circle cx="20.6" cy="46.0" r="0.7" fill="#6a4030"/><circle cx="21.8" cy="36.0" r="0.6" fill="#6a4030"/><circle cx="28.9" cy="34.3" r="0.6" fill="#6a4030"/><circle cx="14.5" cy="14.3" r="1.0" fill="#b08070"/><circle cx="1.7" cy="22.4" r="0.7" fill="#8a5a48"/><circle cx="25.9" cy="48.8" r="1.1" fill="#d0b0a0"/><circle cx="41.2" cy="30.4" r="1.4" fill="#b08070"/><circle cx="17.9" cy="48.8" r="1.4" fill="#6a4030"/><circle cx="5.5" cy="43.4" r="0.9" fill="#8a5a48"/><circle cx="46.2" cy="46.1" r="1.0" fill="#d0b0a0"/><circle cx="48.9" cy="6.4" r="1.3" fill="#d0b0a0"/><circle cx="17.5" cy="8.9" r="1.5" fill="#6a4030"/><circle cx="45.7" cy="19.7" r="0.8" fill="#b08070"/><circle cx="21.4" cy="30.1" r="1.0" fill="#8a5a48"/><circle cx="18.5" cy="9.5" r="0.8" fill="#d0b0a0"/><circle cx="11.9" cy="24.5" r="1.1" fill="#6a4030"/><circle cx="44.1" cy="38.2" r="0.9" fill="#8a5a48"/><circle cx="16.5" cy="17.0" r="1.4" fill="#6a4030"/><circle cx="2.2" cy="24.5" r="0.8" fill="#b08070"/><circle cx="2.2" cy="11.0" r="1.5" fill="#8a5a48"/><circle cx="10.8" cy="22.3" r="0.6" fill="#6a4030"/><circle cx="37.2" cy="5.3" r="1.2" fill="#6a4030"/><circle cx="12.1" cy="3.2" r="0.7" fill="#8a5a48"/><circle cx="38.3" cy="12.5" r="0.8" fill="#8a5a48"/><circle cx="15.0" cy="19.2" r="0.8" fill="#d0b0a0"/><circle cx="41.1" cy="37.6" r="1.0" fill="#b08070"/><circle cx="41.7" cy="35.7" r="1.3" fill="#b08070"/><circle cx="18.8" cy="28.1" r="0.9" fill="#6a4030"/><circle cx="33.7" cy="0.2" r="0.7" fill="#6a4030"/><circle cx="45.3" cy="15.7" r="0.8" fill="#d0b0a0"/><circle cx="0.3" cy="34.1" r="0.6" fill="#8a5a48"/><circle cx="25.6" cy="17.3" r="0.8" fill="#b08070"/><circle cx="41.9" cy="38.7" r="0.9" fill="#b08070"/><circle cx="33.6" cy="29.0" r="0.8" fill="#6a4030"/><circle cx="27.6" cy="4.4" r="0.8" fill="#d0b0a0"/><circle cx="32.6" cy="28.6" r="0.9" fill="#b08070"/><circle cx="10.1" cy="45.1" r="0.7" fill="#d0b0a0"/><circle cx="10.9" cy="21.5" r="0.9" fill="#8a5a48"/><circle cx="3.9" cy="9.1" r="1.0" fill="#6a4030"/><circle cx="33.1" cy="31.4" r="1.1" fill="#6a4030"/><circle cx="14.8" cy="27.4" r="1.1" fill="#8a5a48"/><circle cx="18.6" cy="41.1" r="1.4" fill="#8a5a48"/><circle cx="6.6" cy="21.9" r="1.1" fill="#b08070"/><circle cx="36.3" cy="29.9" r="1.4" fill="#d0b0a0"/><circle cx="8.9" cy="26.8" r="0.8" fill="#b08070"/><circle cx="13.6" cy="40.5" r="0.8" fill="#8a5a48"/><circle cx="15.3" cy="5.5" r="0.8" fill="#b08070"/><circle cx="46.2" cy="39.5" r="0.9" fill="#8a5a48"/><circle cx="3.3" cy="19.4" r="1.5" fill="#d0b0a0"/><circle cx="32.7" cy="35.3" r="1.0" fill="#6a4030"/><circle cx="37.8" cy="46.9" r="1.2" fill="#6a4030"/><circle cx="9.9" cy="37.8" r="0.8" fill="#b08070"/><circle cx="18.0" cy="30.2" r="1.2" fill="#b08070"/><circle cx="45.3" cy="34.7" r="1.2" fill="#b08070"/><circle cx="27.7" cy="38.5" r="1.2" fill="#8a5a48"/><circle cx="37.0" cy="11.1" r="1.0" fill="#b08070"/><circle cx="37.5" cy="22.9" r="1.4" fill="#d0b0a0"/><circle cx="30.9" cy="11.7" r="0.8" fill="#b08070"/><circle cx="46.9" cy="4.1" r="1.3" fill="#d0b0a0"/><circle cx="26.4" cy="38.7" r="1.4" fill="#b08070"/><circle cx="0.7" cy="34.2" r="1.2" fill="#b08070"/><circle cx="47.0" cy="39.3" r="1.3" fill="#6a4030"/><circle cx="41.3" cy="21.6" r="0.8" fill="#6a4030"/><circle cx="37.0" cy="16.3" r="1.3" fill="#8a5a48"/><circle cx="35.0" cy="47.6" r="1.0" fill="#d0b0a0"/><circle cx="41.5" cy="43.8" r="0.9" fill="#8a5a48"/><circle cx="0.4" cy="48.5" r="0.8" fill="#8a5a48"/><circle cx="13.6" cy="14.6" r="1.3" fill="#b08070"/><circle cx="21.7" cy="3.3" r="1.0" fill="#d0b0a0"/><circle cx="11.4" cy="20.3" r="0.8" fill="#d0b0a0"/><circle cx="0.0" cy="5.9" r="0.7" fill="#8a5a48"/><circle cx="14.1" cy="11.5" r="1.4" fill="#b08070"/><circle cx="48.7" cy="5.1" r="1.1" fill="#8a5a48"/><circle cx="5.8" cy="25.7" r="0.8" fill="#b08070"/><circle cx="32.7" cy="42.4" r="0.7" fill="#8a5a48"/><circle cx="37.5" cy="26.6" r="1.4" fill="#8a5a48"/><circle cx="16.0" cy="9.0" r="1.0" fill="#d0b0a0"/><circle cx="18.8" cy="5.6" r="1.4" fill="#d0b0a0"/><circle cx="36.1" cy="39.7" r="0.6" fill="#8a5a48"/><circle cx="27.5" cy="6.8" r="1.2" fill="#b08070"/><circle cx="17.8" cy="47.2" r="1.4" fill="#8a5a48"/><circle cx="4.1" cy="20.9" r="1.1" fill="#d0b0a0"/><circle cx="23.5" cy="36.2" r="1.5" fill="#6a4030"/><circle cx="15.1" cy="38.1" r="0.8" fill="#d0b0a0"/><circle cx="5.4" cy="28.6" r="1.2" fill="#d0b0a0"/><circle cx="25.7" cy="33.0" r="1.2" fill="#8a5a48"/><circle cx="9.9" cy="34.8" r="0.6" fill="#d0b0a0"/><circle cx="20.3" cy="47.1" r="1.0" fill="#b08070"/><circle cx="44.0" cy="44.4" r="0.8" fill="#b08070"/></svg><rect x="1666.5" y="663.0" width="49" height="49" fill="none" stroke="#b8b8b8"/><svg x="1719" y="663.5" width="49" height="49" overflow="hidden"><rect width="49" height="49" fill="#a88a68"/><circle cx="41.8" cy="23.7" r="0.9" fill="#8a6a40"/><circle cx="30.1" cy="47.4" r="3.0" fill="#f0e0c0"/><circle cx="2.3" cy="43.6" r="4.7" fill="#d8c0a0"/><circle cx="2.5" cy="20.9" r="4.3" fill="#5a4a30"/><circle cx="7.4" cy="17.2" r="3.6" fill="#5a4a30"/><circle cx="21.0" cy="10.9" r="4.8" fill="#f0e0c0"/><circle cx="28.1" cy="42.3" r="2.6" fill="#d8c0a0"/><circle cx="42.4" cy="23.7" r="4.5" fill="#b09070"/><circle cx="3.5" cy="22.6" r="3.5" fill="#b09070"/><circle cx="41.0" cy="45.8" r="3.8" fill="#8a6a40"/><circle cx="25.3" cy="32.3" r="2.2" fill="#b09070"/><circle cx="33.4" cy="1.9" r="2.1" fill="#b09070"/><circle cx="38.5" cy="41.6" r="2.3" fill="#f0e0c0"/><circle cx="18.3" cy="13.1" r="2.4" fill="#d8c0a0"/><circle cx="29.2" cy="36.8" r="4.7" fill="#8a6a40"/><circle cx="16.8" cy="2.2" r="4.0" fill="#f0e0c0"/><circle cx="36.9" cy="30.1" r="2.7" fill="#8a6a40"/><circle cx="21.0" cy="9.5" r="1.6" fill="#8a6a40"/><circle cx="27.6" cy="18.5" r="2.0" fill="#d8c0a0"/><circle cx="17.1" cy="20.2" r="1.8" fill="#b09070"/><circle cx="24.1" cy="8.4" r="4.5" fill="#8a6a40"/><circle cx="37.1" cy="16.1" r="1.0" fill="#f0e0c0"/><circle cx="17.6" cy="14.6" r="1.9" fill="#5a4a30"/><circle cx="16.1" cy="34.2" r="4.0" fill="#d8c0a0"/><circle cx="23.2" cy="46.4" r="2.5" fill="#b09070"/><circle cx="45.6" cy="30.5" r="3.2" fill="#5a4a30"/><circle cx="9.5" cy="20.4" r="1.3" fill="#8a6a40"/><circle cx="34.7" cy="28.1" r="3.7" fill="#8a6a40"/><circle cx="41.5" cy="42.4" r="3.1" fill="#f0e0c0"/><circle cx="33.7" cy="43.6" r="1.1" fill="#5a4a30"/><circle cx="10.7" cy="48.5" r="1.4" fill="#5a4a30"/><circle cx="48.2" cy="15.6" r="3.7" fill="#d8c0a0"/><circle cx="29.9" cy="34.8" r="1.2" fill="#f0e0c0"/><circle cx="14.1" cy="30.3" r="3.8" fill="#b09070"/><circle cx="35.2" cy="15.4" r="0.8" fill="#b09070"/><circle cx="32.2" cy="23.1" r="3.1" fill="#d8c0a0"/><circle cx="12.8" cy="3.7" r="1.1" fill="#5a4a30"/><circle cx="5.1" cy="20.0" r="3.4" fill="#8a6a40"/><circle cx="41.8" cy="48.4" r="2.8" fill="#f0e0c0"/><circle cx="1.8" cy="29.5" r="2.0" fill="#5a4a30"/></svg><rect x="1718.5" y="663.0" width="49" height="49" fill="none" stroke="#b8b8b8"/><svg x="1771" y="663.5" width="49" height="49" overflow="hidden"><rect width="49" height="49" fill="#80808a"/><circle cx="12.6" cy="41.5" r="1.6" fill="#999"/><circle cx="28.8" cy="28.2" r="0.7" fill="#999"/><circle cx="44.3" cy="3.3" r="0.9" fill="#999"/><circle cx="37.4" cy="19.0" r="0.7" fill="#555"/><circle cx="10.6" cy="32.7" r="1.3" fill="#ccc"/><circle cx="36.6" cy="4.9" r="1.1" fill="#999"/><circle cx="28.8" cy="48.2" r="0.8" fill="#70707a"/><circle cx="24.7" cy="24.3" r="0.7" fill="#999"/><circle cx="26.9" cy="29.8" r="1.5" fill="#70707a"/><circle cx="0.9" cy="6.8" r="1.5" fill="#ccc"/><circle cx="6.6" cy="1.6" r="1.4" fill="#70707a"/><circle cx="8.3" cy="17.6" r="1.3" fill="#70707a"/><circle cx="24.0" cy="40.0" r="0.9" fill="#ccc"/><circle cx="23.3" cy="46.0" r="1.6" fill="#555"/><circle cx="43.6" cy="1.3" r="1.1" fill="#555"/><circle cx="9.5" cy="39.6" r="1.1" fill="#999"/><circle cx="16.1" cy="32.6" r="1.2" fill="#555"/><circle cx="16.6" cy="19.1" r="0.7" fill="#555"/><circle cx="3.4" cy="41.6" r="0.7" fill="#999"/><circle cx="43.7" cy="45.1" r="1.0" fill="#ccc"/><circle cx="18.7" cy="29.3" r="0.8" fill="#999"/><circle cx="4.1" cy="32.4" r="1.6" fill="#ccc"/><circle cx="13.0" cy="35.8" r="1.5" fill="#70707a"/><circle cx="10.8" cy="29.9" r="1.6" fill="#999"/><circle cx="0.6" cy="21.6" r="0.8" fill="#555"/><circle cx="33.1" cy="38.5" r="1.1" fill="#70707a"/><circle cx="3.6" cy="27.4" r="1.3" fill="#ccc"/><circle cx="8.5" cy="39.5" r="0.6" fill="#555"/><circle cx="31.3" cy="27.6" r="1.4" fill="#555"/><circle cx="40.4" cy="23.2" r="1.5" fill="#555"/><circle cx="26.3" cy="11.6" r="1.1" fill="#555"/><circle cx="34.4" cy="18.4" r="0.7" fill="#555"/><circle cx="34.8" cy="23.0" r="0.9" fill="#ccc"/><circle cx="47.5" cy="27.7" r="1.2" fill="#999"/><circle cx="48.3" cy="47.9" r="0.8" fill="#999"/><circle cx="6.1" cy="29.0" r="1.2" fill="#555"/><circle cx="33.5" cy="13.4" r="1.2" fill="#999"/><circle cx="0.7" cy="0.9" r="1.3" fill="#999"/><circle cx="7.0" cy="44.9" r="0.9" fill="#ccc"/><circle cx="26.3" cy="33.8" r="0.9" fill="#999"/><circle cx="17.7" cy="41.0" r="1.6" fill="#ccc"/><circle cx="9.0" cy="21.1" r="0.8" fill="#999"/><circle cx="39.5" cy="2.7" r="1.6" fill="#ccc"/><circle cx="48.8" cy="39.2" r="1.6" fill="#70707a"/><circle cx="47.5" cy="6.0" r="0.7" fill="#ccc"/><circle cx="13.1" cy="41.9" r="1.5" fill="#999"/><circle cx="32.3" cy="42.5" r="1.4" fill="#999"/><circle cx="22.7" cy="26.5" r="0.9" fill="#ccc"/><circle cx="31.4" cy="9.9" r="1.3" fill="#555"/><circle cx="2.2" cy="16.7" r="0.8" fill="#555"/><circle cx="28.6" cy="0.3" r="1.1" fill="#ccc"/><circle cx="33.7" cy="33.6" r="1.2" fill="#ccc"/><circle cx="38.7" cy="22.6" r="1.1" fill="#555"/><circle cx="29.3" cy="15.1" r="1.3" fill="#70707a"/><circle cx="40.4" cy="10.4" r="1.0" fill="#ccc"/><circle cx="46.6" cy="2.1" r="0.7" fill="#ccc"/><circle cx="21.0" cy="18.1" r="1.6" fill="#999"/><circle cx="4.9" cy="12.3" r="0.7" fill="#999"/><circle cx="47.6" cy="3.8" r="0.7" fill="#ccc"/><circle cx="30.4" cy="6.4" r="1.4" fill="#ccc"/><circle cx="35.6" cy="35.8" r="0.9" fill="#70707a"/><circle cx="5.8" cy="13.9" r="1.6" fill="#70707a"/><circle cx="21.4" cy="39.2" r="1.2" fill="#555"/><circle cx="6.3" cy="47.7" r="1.0" fill="#999"/><circle cx="24.7" cy="13.0" r="0.8" fill="#ccc"/><circle cx="20.6" cy="45.3" r="1.2" fill="#ccc"/><circle cx="34.0" cy="3.9" r="0.9" fill="#70707a"/><circle cx="40.1" cy="33.7" r="1.2" fill="#70707a"/><circle cx="5.6" cy="43.2" r="0.9" fill="#555"/><circle cx="26.5" cy="24.4" r="0.8" fill="#70707a"/><circle cx="24.4" cy="3.2" r="0.9" fill="#999"/><circle cx="11.7" cy="30.9" r="1.2" fill="#ccc"/><circle cx="7.7" cy="4.9" r="1.4" fill="#ccc"/><circle cx="43.0" cy="18.3" r="1.1" fill="#ccc"/><circle cx="11.9" cy="12.1" r="1.5" fill="#999"/><circle cx="34.4" cy="8.7" r="1.0" fill="#70707a"/><circle cx="35.1" cy="48.1" r="1.0" fill="#555"/><circle cx="42.5" cy="8.5" r="1.4" fill="#999"/><circle cx="0.1" cy="14.4" r="1.5" fill="#70707a"/><circle cx="30.6" cy="47.9" r="1.2" fill="#555"/><circle cx="6.5" cy="21.6" r="1.3" fill="#999"/><circle cx="44.1" cy="35.1" r="1.1" fill="#ccc"/><circle cx="31.9" cy="3.1" r="1.3" fill="#999"/><circle cx="38.3" cy="35.1" r="1.0" fill="#ccc"/><circle cx="24.5" cy="3.7" r="0.7" fill="#ccc"/><circle cx="34.8" cy="45.8" r="0.7" fill="#555"/><circle cx="4.0" cy="12.7" r="1.5" fill="#999"/><circle cx="11.4" cy="37.4" r="1.4" fill="#70707a"/><circle cx="21.1" cy="24.1" r="1.0" fill="#70707a"/><circle cx="15.1" cy="12.0" r="0.6" fill="#999"/></svg><rect x="1770.5" y="663.0" width="49" height="49" fill="none" stroke="#b8b8b8"/><svg x="1823" y="663.5" width="49" height="49" overflow="hidden"><rect width="49" height="49" fill="#88807a"/><circle cx="1.4" cy="41.4" r="1.1" fill="#554"/><circle cx="22.0" cy="27.0" r="1.0" fill="#554"/><circle cx="26.9" cy="42.1" r="1.8" fill="#776a66"/><circle cx="12.2" cy="39.0" r="1.3" fill="#998"/><circle cx="17.2" cy="15.8" r="2.2" fill="#998"/><circle cx="24.1" cy="33.0" r="2.5" fill="#a88"/><circle cx="31.3" cy="21.1" r="2.2" fill="#998"/><circle cx="26.2" cy="47.3" r="1.9" fill="#a88"/><circle cx="17.7" cy="48.0" r="1.7" fill="#998"/><circle cx="32.9" cy="18.4" r="2.1" fill="#776a66"/><circle cx="28.3" cy="42.9" r="2.3" fill="#554"/><circle cx="16.1" cy="6.2" r="2.3" fill="#a88"/><circle cx="20.4" cy="11.8" r="2.3" fill="#998"/><circle cx="12.0" cy="15.0" r="1.5" fill="#998"/><circle cx="25.8" cy="32.1" r="1.9" fill="#998"/><circle cx="34.9" cy="24.9" r="1.4" fill="#554"/><circle cx="32.8" cy="13.5" r="2.0" fill="#a88"/><circle cx="7.4" cy="38.9" r="1.0" fill="#554"/><circle cx="34.4" cy="36.9" r="1.3" fill="#998"/><circle cx="25.3" cy="19.2" r="2.3" fill="#998"/><circle cx="13.8" cy="15.2" r="1.4" fill="#554"/><circle cx="8.4" cy="5.1" r="0.6" fill="#a88"/><circle cx="29.2" cy="21.3" r="1.6" fill="#a88"/><circle cx="25.1" cy="17.7" r="1.4" fill="#554"/><circle cx="39.7" cy="13.6" r="2.3" fill="#998"/><circle cx="9.9" cy="38.4" r="1.6" fill="#554"/><circle cx="36.8" cy="7.1" r="2.2" fill="#998"/><circle cx="12.7" cy="37.8" r="2.0" fill="#a88"/><circle cx="41.7" cy="45.9" r="2.4" fill="#554"/><circle cx="21.8" cy="48.6" r="0.8" fill="#998"/><circle cx="43.5" cy="48.8" r="1.1" fill="#998"/><circle cx="35.7" cy="34.5" r="1.1" fill="#776a66"/><circle cx="38.7" cy="24.7" r="1.9" fill="#998"/><circle cx="11.1" cy="42.0" r="1.7" fill="#998"/><circle cx="48.8" cy="37.8" r="1.8" fill="#a88"/><circle cx="26.1" cy="10.7" r="1.2" fill="#776a66"/><circle cx="25.8" cy="1.6" r="1.8" fill="#a88"/><circle cx="24.1" cy="22.3" r="1.8" fill="#a88"/><circle cx="23.9" cy="44.3" r="2.3" fill="#554"/><circle cx="35.5" cy="35.2" r="1.0" fill="#776a66"/><circle cx="43.8" cy="42.1" r="0.9" fill="#998"/><circle cx="9.6" cy="16.2" r="1.0" fill="#776a66"/><circle cx="1.2" cy="8.7" r="1.8" fill="#a88"/><circle cx="34.2" cy="19.4" r="1.4" fill="#998"/><circle cx="38.3" cy="38.3" r="1.7" fill="#554"/><circle cx="22.5" cy="12.2" r="2.0" fill="#554"/><circle cx="7.0" cy="29.4" r="1.9" fill="#998"/><circle cx="33.8" cy="42.6" r="1.8" fill="#776a66"/><circle cx="10.3" cy="21.3" r="2.1" fill="#776a66"/><circle cx="7.4" cy="40.1" r="1.8" fill="#a88"/><circle cx="0.5" cy="13.7" r="1.9" fill="#a88"/><circle cx="27.4" cy="28.7" r="0.7" fill="#a88"/><circle cx="14.4" cy="35.4" r="0.8" fill="#a88"/><circle cx="48.0" cy="45.2" r="1.0" fill="#554"/><circle cx="21.3" cy="11.6" r="0.9" fill="#a88"/><circle cx="37.1" cy="1.0" r="0.8" fill="#554"/><circle cx="17.5" cy="12.6" r="1.2" fill="#554"/><circle cx="21.0" cy="24.9" r="0.7" fill="#554"/><circle cx="1.4" cy="18.2" r="2.2" fill="#998"/><circle cx="45.2" cy="17.4" r="1.8" fill="#a88"/><circle cx="5.8" cy="12.1" r="2.2" fill="#a88"/><circle cx="7.7" cy="21.0" r="1.0" fill="#998"/><circle cx="25.1" cy="12.6" r="1.5" fill="#776a66"/><circle cx="47.8" cy="33.7" r="1.6" fill="#a88"/><circle cx="24.8" cy="9.5" r="1.9" fill="#a88"/><circle cx="46.2" cy="39.5" r="1.0" fill="#554"/><circle cx="14.8" cy="44.3" r="1.7" fill="#776a66"/><circle cx="18.0" cy="22.4" r="1.9" fill="#776a66"/><circle cx="38.7" cy="33.8" r="1.6" fill="#776a66"/><circle cx="27.2" cy="14.5" r="2.3" fill="#998"/></svg><rect x="1822.5" y="663.0" width="49" height="49" fill="none" stroke="#b8b8b8"/><svg x="1667" y="715.5" width="49" height="18" overflow="hidden"><rect width="49" height="49" fill="#b4b2aa"/></svg><rect x="1666.5" y="715.0" width="49" height="18" fill="none" stroke="#b8b8b8"/><svg x="1719" y="715.5" width="49" height="18" overflow="hidden"><rect width="49" height="49" fill="#c8a060"/></svg><rect x="1718.5" y="715.0" width="49" height="18" fill="none" stroke="#b8b8b8"/><svg x="1771" y="715.5" width="49" height="18" overflow="hidden"><rect width="49" height="49" fill="#8a8a88"/><circle cx="34.5" cy="32.3" r="0.9" fill="#555"/><circle cx="6.2" cy="22.6" r="1.3" fill="#aaa"/><circle cx="41.4" cy="39.5" r="1.5" fill="#555"/><circle cx="5.5" cy="38.4" r="1.0" fill="#777"/><circle cx="9.3" cy="15.5" r="0.7" fill="#aaa"/><circle cx="10.3" cy="11.5" r="1.1" fill="#777"/><circle cx="39.8" cy="27.1" r="0.6" fill="#777"/><circle cx="27.2" cy="25.3" r="1.3" fill="#aaa"/><circle cx="42.2" cy="16.2" r="0.6" fill="#aaa"/><circle cx="45.8" cy="9.6" r="1.4" fill="#555"/><circle cx="36.6" cy="40.8" r="1.3" fill="#777"/><circle cx="36.6" cy="41.1" r="1.3" fill="#555"/><circle cx="4.8" cy="26.7" r="0.7" fill="#555"/><circle cx="25.8" cy="32.4" r="1.2" fill="#555"/><circle cx="41.3" cy="25.4" r="1.1" fill="#aaa"/><circle cx="24.8" cy="17.1" r="1.3" fill="#555"/><circle cx="1.7" cy="1.6" r="1.0" fill="#555"/><circle cx="19.8" cy="6.1" r="1.1" fill="#777"/><circle cx="38.0" cy="28.5" r="1.4" fill="#555"/><circle cx="11.6" cy="48.8" r="1.1" fill="#aaa"/><circle cx="47.4" cy="22.5" r="1.3" fill="#555"/><circle cx="47.4" cy="31.9" r="1.4" fill="#777"/><circle cx="21.0" cy="24.8" r="1.4" fill="#777"/><circle cx="18.7" cy="4.0" r="1.0" fill="#777"/><circle cx="14.3" cy="13.0" r="0.8" fill="#777"/><circle cx="36.4" cy="33.2" r="1.1" fill="#777"/><circle cx="23.7" cy="43.3" r="0.7" fill="#777"/><circle cx="26.7" cy="29.1" r="0.7" fill="#777"/><circle cx="5.6" cy="1.3" r="1.3" fill="#aaa"/><circle cx="37.9" cy="43.6" r="1.5" fill="#777"/></svg><rect x="1770.5" y="715.0" width="49" height="18" fill="none" stroke="#b8b8b8"/><svg x="1823" y="715.5" width="49" height="18" overflow="hidden"><rect width="49" height="49" fill="#b87860"/><path d="M0,8 H49" stroke="#804030"/></svg><rect x="1822.5" y="715.0" width="49" height="18" fill="none" stroke="#b8b8b8"/><path d="M1662,737.5 H1898" stroke="#b0b0b0" stroke-width="1.5"/><defs><linearGradient id="hg741" x1="0" y1="0" x2="0" y2="1"><stop offset="0" stop-color="#f4f4f4"/><stop offset="1" stop-color="#c6c6c6"/></linearGradient></defs><rect x="1662" y="741" width="236" height="17" fill="url(#hg741)"/><path d="M1671,745.5 L1677,749.5 L1671,753.5 Z" fill="#111"/><text x="1685.3" y="753.5" font-size="12.0" font-family="Liberation Sans" font-weight="normal" fill="#222" text-anchor="start" textLength="68.6" lengthAdjust="spacingAndGlyphs">Components</text><rect x="1882.5" y="743.5" width="13" height="13" fill="#f4f4f4" stroke="#a8a8a8"/><path d="M1886.5,747.5 L1891.5,752.5 M1891.5,747.5 L1886.5,752.5" stroke="#222" stroke-width="1.2"/><defs><linearGradient id="hg759" x1="0" y1="0" x2="0" y2="1"><stop offset="0" stop-color="#f4f4f4"/><stop offset="1" stop-color="#c6c6c6"/></linearGradient></defs><rect x="1662" y="759" width="236" height="17" fill="url(#hg759)"/><path d="M1670.5,764.5 L1678.5,764.5 L1674.5,770.5 Z" fill="#111"/><text x="1685.3" y="772.0" font-size="12.0" font-family="Liberation Sans" font-weight="normal" fill="#222" text-anchor="start" textLength="29.7" lengthAdjust="spacingAndGlyphs">Styles</text><rect x="1882.5" y="762.0" width="13" height="13" fill="#f4f4f4" stroke="#a8a8a8"/><path d="M1886.5,766.0 L1891.5,771.0 M1891.5,766.0 L1886.5,771.0" stroke="#222" stroke-width="1.2"/><rect x="1665.5" y="779.5" width="65" height="70" fill="#fff" stroke="#b8b8b8"/><path d="M1671,785 V835 L1690,845" fill="none" stroke="#5050c0" stroke-width="0.8"/><path d="M1672,836 L1696,846" stroke="#c04040" stroke-width="0.8"/><path d="M1676,805 L1690,793 L1712,793 L1700,805Z" fill="#d0d0d0" stroke="#333" stroke-width="0.8"/><path d="M1676,805 V840 L1700,840 V805" fill="#f4f4f4" stroke="#333" stroke-width="0.8"/><rect x="1694" y="810" width="26" height="28" rx="6" fill="#b8cad8" stroke="#333" stroke-width="0.8"/><path d="M1683,812 C1688,800 1708,800 1712,810 L1716,806 L1716,818 L1705,816 L1709,813 C1705,806 1692,806 1689,814Z M1712,824 C1708,836 1688,836 1683,826 L1679,830 L1679,818 L1690,820 L1686,823 C1690,830 1703,830 1706,822Z" fill="#707070" opacity="0.85"/><circle cx="1722" cy="841" r="4" fill="none" stroke="#30a030" stroke-width="1"/><rect x="1735.5" y="779.5" width="134" height="18" fill="#fff" stroke="#828790"/><text x="1739.4" y="793.0" font-size="12.0" font-family="Liberation Sans" font-weight="normal" fill="#111" text-anchor="start" textLength="128.4" lengthAdjust="spacingAndGlyphs">Construction Documentatic</text><rect x="1735.5" y="800.5" width="134" height="48" fill="#fff" stroke="#828790"/><text x="1739.4" y="813.5" font-size="12.0" font-family="Liberation Sans" font-weight="normal" fill="#111" text-anchor="start" textLength="93.8" lengthAdjust="spacingAndGlyphs">Default face colors.</text><text x="1739.4" y="826.5" font-size="12.0" font-family="Liberation Sans" font-weight="normal" fill="#111" text-anchor="start" textLength="96.6" lengthAdjust="spacingAndGlyphs">Profile Edges. White</text><text x="1739.4" y="839.5" font-size="12.0" font-family="Liberation Sans" font-weight="normal" fill="#111" text-anchor="start" textLength="59.0" lengthAdjust="spacingAndGlyphs">background.</text><rect x="1881" y="782" width="10" height="14" fill="#111"/><path d="M1882.5,791 L1889.5,791 L1886,786Z" fill="#fff"/><path d="M1882,787 H1890" stroke="#fff"/><circle cx="1882" cy="816" r="4.5" fill="#fff" stroke="#111" stroke-width="1.2"/><path d="M1879.5,816 H1884.5 M1882,813.5 V818.5" stroke="#111" stroke-width="1.1"/><path d="M1884,809 L1891,805 L1893,812 L1887,815Z" fill="#8a9a70"/><rect x="1889" y="808" width="4" height="7" fill="#3040c0"/><path d="M1880,836 C1881,829 1891,829 1892,834 M1892,840 C1891,847 1881,847 1880,842" fill="none" stroke="#111" stroke-width="1.8"/><path d="M1889,834 L1894,834 L1893,829Z M1883,842 L1878,842 L1879,847Z" fill="#111"/><path d="M1662,852.5 H1898" stroke="#c8c8c8"/><rect x="1662" y="858" width="45" height="21" fill="#fff"/><path d="M1707.5,858 V879" stroke="#a0a0a0"/><text x="1669.6" y="872.5" font-size="12.0" font-family="Liberation Sans" font-weight="normal" fill="#111" text-anchor="start" textLength="29.5" lengthAdjust="spacingAndGlyphs">Select</text><text x="1711.4" y="872.5" font-size="12.0" font-family="Liberation Sans" font-weight="normal" fill="#111" text-anchor="start" textLength="18.5" lengthAdjust="spacingAndGlyphs">Edit</text><text x="1753.8" y="872.5" font-size="12.0" font-family="Liberation Sans" font-weight="normal" fill="#111" text-anchor="start" textLength="15.0" lengthAdjust="spacingAndGlyphs">Mix</text><path d="M1747.5,861 V879 M1790.5,861 V879" stroke="#a0a0a0"/><path d="M1662,879.5 H1898" stroke="#e0e0e0"/><path d="M1671,897.0 L1676,892.0 V895.0 H1683 V899.0 H1676 V902.0 Z" fill="#fff" stroke="#aaa"/><path d="M1706,897.0 L1701,892.0 V895.0 H1694 V899.0 H1701 V902.0 Z" fill="#fff" stroke="#aaa"/><path d="M1716,896.0 L1724.5,889.0 L1733,896.0 M1718.5,894.0 V904.0 H1730.5 V894.0" fill="none" stroke="#111" stroke-width="1.8"/><rect x="1722.5" y="899.0" width="4" height="5" fill="#111"/><rect x="1738.5" y="886.5" width="132" height="20" fill="#fff" stroke="#7a7a7a"/><rect x="1855" y="887.5" width="15" height="18" fill="#e8e8e8" stroke="#b0b0b0"/><path d="M1859,896.0 L1866,896.0 L1862.5,900.0 Z" fill="#111"/><text x="1742.5" y="901.5" font-size="12.0" font-family="Liberation Sans" font-weight="normal" fill="#111" text-anchor="start" textLength="67.0" lengthAdjust="spacingAndGlyphs">Default Styles</text><path d="M1880,891.0 H1889 L1893,897.0 L1889,903.0 H1880 Z" fill="#3050a0" stroke="#111" stroke-width="1"/><path d="M1882,895.0 H1887 M1882,898.0 H1887" stroke="#fff" stroke-width="1"/><path d="M1662,910.5 H1898" stroke="#c0c0c0"/><rect x="1662" y="911" width="220" height="97" fill="#ffffff"/><defs><linearGradient id="sky1" x1="0" y1="0" x2="0" y2="1"><stop offset="0" stop-color="#70a8d8"/><stop offset="0.5" stop-color="#d8e4ec"/><stop offset="0.5" stop-color="#c8c8c0"/><stop offset="1" stop-color="#c8c8c0"/></linearGradient><linearGradient id="sky2" x1="0" y1="0" x2="0" y2="1"><stop offset="0" stop-color="#90b8d8"/><stop offset="0.55" stop-color="#c8d8e0"/><stop offset="0.55" stop-color="#a8b898"/><stop offset="1" stop-color="#a8b898"/></linearGradient></defs><svg x="1667" y="913" width="49" height="49" overflow="hidden"><rect width="49" height="49" fill="url(#sky1)"/><path d="M3,2 V38 L22,46" fill="none" stroke="#5050c0" stroke-width="0.7"/><path d="M4,38 L24,46" stroke="#c05050" stroke-width="0.7"/><path d="M8,17 L20,7 L40,7 L28,17Z" fill="#c8c8c8" stroke="#333" stroke-width="0.8"/><path d="M8,17 V40 L28,44 V17Z" fill="#f8f8f8" stroke="#333" stroke-width="0.8"/><path d="M28,17 L40,7 V30" fill="#eee" stroke="#333" stroke-width="0.8"/><rect x="24" y="22" width="20" height="22" rx="5" fill="#b8cad8" stroke="#333" stroke-width="0.8"/><path d="M44,30 H47" stroke="#3a3"/></svg><rect x="1666.5" y="912.5" width="49" height="49" fill="none" stroke="#b8b8b8"/><svg x="1719" y="913" width="49" height="49" overflow="hidden"><rect width="49" height="49" fill="#d8d8d0"/><path d="M3,2 V38 L22,46" fill="none" stroke="#5050c0" stroke-width="0.7"/><path d="M4,38 L24,46" stroke="#c05050" stroke-width="0.7"/><path d="M8,17 L20,7 L40,7 L28,17Z" fill="#c8c8c8" stroke="#333" stroke-width="0.8"/><path d="M8,17 V40 L28,44 V17Z" fill="#f8f8f8" stroke="#333" stroke-width="0.8"/><path d="M28,17 L40,7 V30" fill="#eee" stroke="#333" stroke-width="0.8"/><rect x="24" y="22" width="20" height="22" rx="5" fill="#b8cad8" stroke="#333" stroke-width="0.8"/><path d="M44,30 H47" stroke="#3a3"/></svg><rect x="1718.5" y="912.5" width="49" height="49" fill="none" stroke="#b8b8b8"/><svg x="1771" y="913" width="49" height="49" overflow="hidden"><rect width="49" height="49" fill="#ffffff"/><path d="M3,2 V38 L22,46" fill="none" stroke="#5050c0" stroke-width="0.7"/><path d="M4,38 L24,46" stroke="#c05050" stroke-width="0.7"/><path d="M8,17 L20,7 L40,7 L28,17Z" fill="#c8c8c8" stroke="#333" stroke-width="0.8"/><path d="M8,17 V40 L28,44 V17Z" fill="#f8f8f8" stroke="#333" stroke-width="0.8"/><path d="M28,17 L40,7 V30" fill="#eee" stroke="#333" stroke-width="0.8"/><rect x="24" y="22" width="20" height="22" rx="5" fill="#b8cad8" stroke="#333" stroke-width="0.8"/><path d="M44,30 H47" stroke="#3a3"/></svg><rect x="1770.5" y="912.5" width="49" height="49" fill="none" stroke="#b8b8b8"/><svg x="1823" y="913" width="49" height="49" overflow="hidden"><rect width="49" height="49" fill="#dcdcd0"/><path d="M3,2 V38 L22,46" fill="none" stroke="#5050c0" stroke-width="0.7"/><path d="M4,38 L24,46" stroke="#c05050" stroke-width="0.7"/><path d="M8,17 L20,7 L40,7 L28,17Z" fill="#c8c8c8" stroke="#333" stroke-width="0.8"/><path d="M8,17 V40 L28,44 V17Z" fill="#f8f8f8" stroke="#333" stroke-width="0.8"/><path d="M28,17 L40,7 V30" fill="#eee" stroke="#333" stroke-width="0.8"/><rect x="24" y="22" width="20" height="22" rx="5" fill="#b8cad8" stroke="#333" stroke-width="0.8"/><path d="M44,30 H47" stroke="#3a3"/></svg><rect x="1822.5" y="912.5" width="49" height="49" fill="none" stroke="#b8b8b8"/><svg x="1667" y="965" width="49" height="42" overflow="hidden"><rect width="49" height="49" fill="#ffffff"/><path d="M3,2 V38 L22,46" fill="none" stroke="#5050c0" stroke-width="0.7"/><path d="M4,38 L24,46" stroke="#c05050" stroke-width="0.7"/><path d="M8,17 L20,7 L40,7 L28,17Z" fill="#c8c8c8" stroke="#333" stroke-width="0.8"/><path d="M8,17 V40 L28,44 V17Z" fill="#f8f8f8" stroke="#333" stroke-width="0.8"/><path d="M28,17 L40,7 V30" fill="#eee" stroke="#333" stroke-width="0.8"/><rect x="24" y="22" width="20" height="22" rx="5" fill="#b8cad8" stroke="#333" stroke-width="0.8"/><path d="M44,30 H47" stroke="#3a3"/></svg><rect x="1666.5" y="964.5" width="49" height="42" fill="none" stroke="#b8b8b8"/><svg x="1719" y="965" width="49" height="42" overflow="hidden"><rect width="49" height="49" fill="url(#sky2)"/><path d="M3,2 V38 L22,46" fill="none" stroke="#5050c0" stroke-width="0.7"/><path d="M4,38 L24,46" stroke="#c05050" stroke-width="0.7"/><path d="M8,17 L20,7 L40,7 L28,17Z" fill="#c8c8c8" stroke="#333" stroke-width="0.8"/><path d="M8,17 V40 L28,44 V17Z" fill="#f8f8f8" stroke="#333" stroke-width="0.8"/><path d="M28,17 L40,7 V30" fill="#eee" stroke="#333" stroke-width="0.8"/><rect x="24" y="22" width="20" height="22" rx="5" fill="#b8cad8" stroke="#333" stroke-width="0.8"/><path d="M44,30 H47" stroke="#3a3"/></svg><rect x="1718.5" y="964.5" width="49" height="42" fill="none" stroke="#b8b8b8"/><svg x="1771" y="965" width="49" height="42" overflow="hidden"><rect width="49" height="49" fill="#ffffff"/><path d="M3,2 V38 L22,46" fill="none" stroke="#5050c0" stroke-width="0.7"/><path d="M4,38 L24,46" stroke="#c05050" stroke-width="0.7"/><path d="M8,17 L20,7 L40,7 L28,17Z" fill="#c8c8c8" stroke="#333" stroke-width="0.8"/><path d="M8,17 V40 L28,44 V17Z" fill="#f8f8f8" stroke="#333" stroke-width="0.8"/><path d="M28,17 L40,7 V30" fill="#eee" stroke="#333" stroke-width="0.8"/><rect x="24" y="22" width="20" height="22" rx="5" fill="#b8cad8" stroke="#333" stroke-width="0.8"/><path d="M44,30 H47" stroke="#3a3"/></svg><rect x="1770.5" y="964.5" width="49" height="42" fill="none" stroke="#b8b8b8"/><svg x="1823" y="965" width="49" height="42" overflow="hidden"><rect width="49" height="49" fill="#ffffff"/><path d="M3,2 V38 L22,46" fill="none" stroke="#5050c0" stroke-width="0.7"/><path d="M4,38 L24,46" stroke="#c05050" stroke-width="0.7"/><path d="M8,17 L20,7 L40,7 L28,17Z" fill="#c8c8c8" stroke="#333" stroke-width="0.8"/><path d="M8,17 V40 L28,44 V17Z" fill="#f8f8f8" stroke="#333" stroke-width="0.8"/><path d="M28,17 L40,7 V30" fill="#eee" stroke="#333" stroke-width="0.8"/><rect x="24" y="22" width="20" height="22" rx="5" fill="#b8cad8" stroke="#333" stroke-width="0.8"/><path d="M44,30 H47" stroke="#3a3"/></svg><rect x="1822.5" y="964.5" width="49" height="42" fill="none" stroke="#b8b8b8"/><rect x="1882" y="911" width="16" height="97" fill="#f0f0f0"/><path d="M1661,1009.5 H1919" stroke="#a8b8c8" stroke-width="1.5"/></svg><div class="abs" style="left:1918px;top:83px;width:2px;height:890px;background:#f0f0f0;z-index:7"></div><div class="abs" style="left:1918.5px;top:111px;width:1.5px;height:899px;background:#555;z-index:8"></div><svg class="abs" style="left:0;top:0;z-index:9" width="1920" height="1040"><text x="82.5" y="96.0" font-size="12.5" font-family="Liberation Sans" font-weight="normal" fill="#111" text-anchor="start" textLength="56.0" lengthAdjust="spacingAndGlyphs">Two Point</text><text x="81.2" y="112.0" font-size="12.5" font-family="Liberation Sans" font-weight="normal" fill="#111" text-anchor="start" textLength="65.0" lengthAdjust="spacingAndGlyphs">Perspective</text><text x="1562.8" y="964.5" font-size="19.5" font-family="Liberation Sans" font-weight="normal" fill="#ffffff" text-anchor="start" textLength="146.0" lengthAdjust="spacingAndGlyphs" opacity="0.45">Activar Windows</text><text x="1562.8" y="985.5" font-size="13.5" font-family="Liberation Sans" font-weight="normal" fill="#b0b0b0" text-anchor="start" textLength="273.0" lengthAdjust="spacingAndGlyphs" opacity="0.85">Ve a Configuración para activar Windows.</text></svg></body></html>
